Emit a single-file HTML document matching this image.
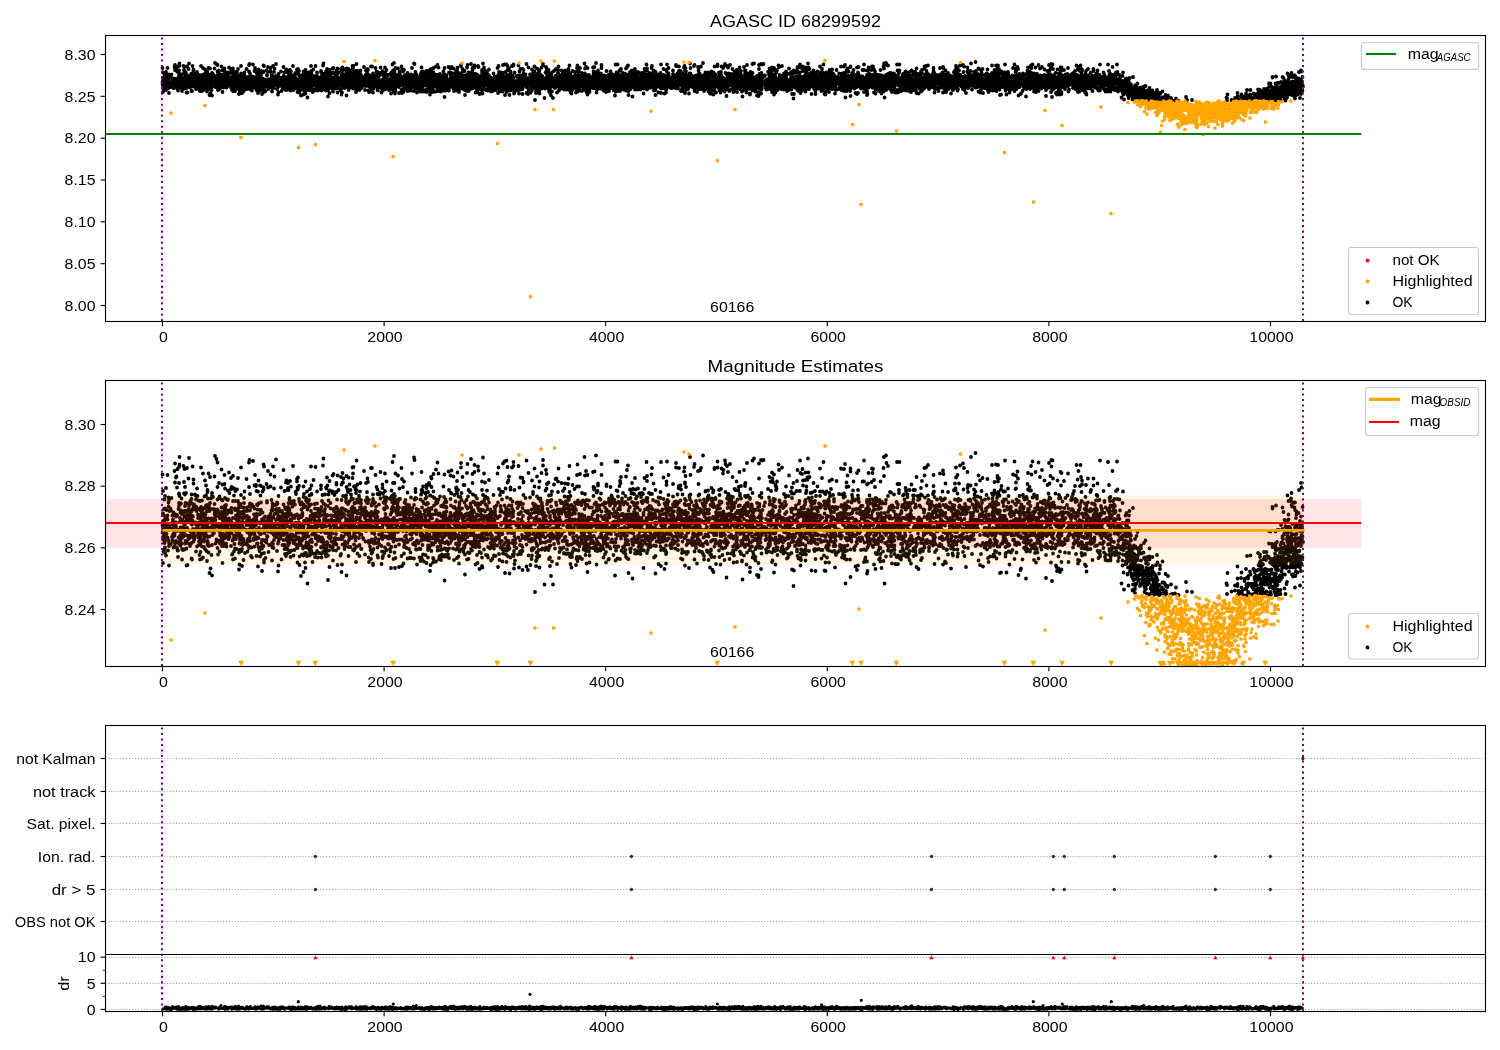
<!DOCTYPE html>
<html><head><meta charset="utf-8"><title>AGASC ID 68299592</title><style>html,body{margin:0;padding:0;background:#fff;overflow:hidden;width:1500px;height:1050px;}svg{display:block;will-change:transform;}</style></head><body><svg width="1500" height="1050" viewBox="0 0 1500 1050"><rect width="1500" height="1050" fill="#fff"/><defs><clipPath id="c1"><rect x="105.5" y="35.5" width="1380.0" height="286.0"/></clipPath><clipPath id="c2"><rect x="105.5" y="380.5" width="1380.0" height="286.0"/></clipPath><clipPath id="c3"><rect x="105.5" y="725.5" width="1380.0" height="286.0"/></clipPath></defs><g font-family='"Liberation Sans", sans-serif' fill="#000"><text x="795.50" y="27.20" font-size="16.67" text-anchor="middle" textLength="170.85" lengthAdjust="spacingAndGlyphs">AGASC ID 68299592</text><g clip-path="url(#c1)"><path transform="scale(0.5)" stroke="#000" stroke-width="7.6" fill="none" stroke-linecap="round" d="M325 136h0m0 32h0m0-4h0m1-3h0m0 23h0m0-27h0m0 14h0m0-26h0m0 25h0m0-4h0m0-3h0m1 15h0m1-20h0m0 7h0m0-10h0m0 13h0m0 10h0m0-8h0m0-1h0m1-7h0m0-12h0m0 23h0m0-18h0m0 6h0m0 6h0m0 9h0m0-12h0m1 8h0m0-17h0m0 13h0m0-20h0m0 22h0m0 6h0m0-8h0m0 11h0m1-13h0m0-6h0m0 3h0m1 3h0m0-2h0m0-20h0m0 36h0m0-11h0m0-9h0m1 6h0m0-11h0m0 9h0m0 4h0m0-4h0m1-4h0m1-24h0m0 25h0m0-3h0m0 12h0m1-6h0m0 0h0m0 0h0m0 1h0m0-1h0m0 13h0m0-13h0m1 8h0m0-23h0m0 17h0m0-13h0m0-2h0m1 22h0m0-9h0m0 1h0m0 21h0m0-36h0m0 25h0m1-10h0m0-9h0m2-1h0m0 10h0m0 9h0m1 0h0m0-18h0m1-7h0m1 14h0m0 7h0m1 2h0m0-14h0m0 4h0m1 7h0m0-9h0m0 6h0m0-5h0m1 15h0m0-19h0m0 13h0m1-5h0m0 1h0m0 2h0m0-3h0m1 4h0m0-35h0m0 34h0m0 7h0m1-45h0m0 44h0m0-34h0m0 35h0m0-12h0m0 10h0m0 1h0m1-16h0m0 4h0m1 2h0m0-26h0m0 24h0m0 10h0m0-8h0m0-5h0m1-22h0m1 22h0m0 8h0m0-24h0m0 33h0m0-18h0m0 15h0m1-7h0m0-33h0m0 44h0m1 0h0m0 4h0m1-11h0m0-15h0m1-8h0m0 6h0m0 21h0m0-42h0m0 9h0m0 5h0m0 6h0m0 18h0m1-39h0m0-4h0m0 21h0m1 5h0m0 16h0m0-9h0m0 2h0m0 10h0m1 3h0m0-3h0m0-6h0m0-9h0m0 8h0m0 2h0m0 2h0m1-13h0m0-4h0m0 13h0m1 4h0m0-20h0m0 17h0m0-10h0m0 2h0m0 16h0m1-6h0m0 3h0m0-10h0m0 15h0m0 6h0m1-16h0m0-5h0m0 0h0m0 7h0m0-6h0m0 4h0m1 11h0m0 0h0m1-15h0m0 8h0m0-38h0m0 33h0m0-8h0m1 5h0m0-22h0m0 27h0m0-21h0m0 21h0m1-2h0m0-32h0m0 23h0m0 6h0m0-3h0m0 18h0m1-34h0m0 31h0m0-21h0m0 16h0m0-22h0m0 16h0m1 9h0m0-16h0m0-4h0m1-6h0m0 20h0m0-10h0m1 6h0m0 14h0m0 9h0m0-13h0m0-12h0m0 6h0m1-33h0m0 25h0m0 7h0m0 4h0m1-13h0m0 17h0m0 12h0m1-33h0m1 19h0m0-16h0m0 3h0m0-20h0m1 15h0m0 2h0m0 7h0m0-35h0m1 42h0m0-9h0m0 7h0m0 4h0m1-10h0m0-4h0m0 18h0m0-15h0m0-2h0m1 12h0m0-20h0m0 24h0m0-14h0m0 7h0m1-15h0m0 10h0m1 20h0m0-30h0m0 4h0m0 17h0m0-4h0m0-22h0m0 2h0m1 3h0m0 10h0m0 20h0m0-20h0m0 1h0m1 4h0m0-6h0m0 8h0m0-10h0m0-27h0m0 23h0m1 4h0m0 7h0m0 4h0m0-1h0m1-15h0m0 19h0m0-34h0m0 2h0m0 30h0m1-3h0m0-16h0m1 3h0m0 16h0m1-5h0m0 3h0m0-22h0m1 15h0m0-14h0m1 6h0m0-4h0m0 28h0m0-15h0m1-7h0m0 9h0m0-10h0m1 20h0m0-31h0m0 10h0m1 12h0m0-18h0m1 10h0m0 2h0m0 5h0m0 1h0m0 2h0m1 0h0m0-9h0m0 11h0m0-4h0m0-16h0m0 19h0m1-14h0m0 17h0m0 1h0m0-10h0m0-1h0m0 5h0m0 7h0m1-1h0m0 7h0m1-14h0m0-11h0m0 27h0m0-31h0m0 17h0m1 2h0m0 3h0m0 5h0m0-16h0m0 9h0m0 3h0m1-8h0m0-12h0m0 18h0m0-3h0m0-10h0m0-27h0m0 28h0m1 6h0m0 2h0m0 14h0m0-25h0m1-7h0m0 6h0m0 7h0m0 2h0m0 10h0m1-17h0m0-3h0m1 9h0m0-28h0m0 27h0m0 3h0m0 2h0m0 13h0m0-22h0m1 2h0m0-4h0m0 1h0m1 18h0m0-4h0m0 0h0m0-8h0m1 1h0m0-3h0m0-8h0m0 16h0m0-22h0m1 29h0m0-11h0m0-6h0m0-2h0m0-19h0m1 19h0m0 2h0m1-7h0m0 14h0m0 2h0m0-27h0m0 6h0m1 21h0m0-6h0m0-7h0m0 22h0m0-14h0m0-10h0m1 12h0m0-13h0m0 8h0m0 3h0m0 19h0m1-39h0m0 28h0m0-26h0m0 17h0m0 11h0m0-11h0m0 7h0m1-21h0m0 6h0m0 18h0m0 2h0m1-8h0m0-31h0m0 43h0m0-17h0m0-2h0m1-7h0m0 22h0m0-21h0m1 2h0m0 14h0m0-5h0m0 25h0m1-38h0m0 15h0m0-30h0m1 18h0m0 32h0m1-38h0m0 18h0m0-2h0m1 15h0m0-19h0m0-1h0m1-12h0m0 17h0m0 9h0m0 17h0m0-27h0m0-18h0m1 23h0m0-4h0m0 1h0m0 0h0m1-18h0m0 15h0m0-8h0m0 14h0m1-8h0m1 7h0m1-16h0m0 5h0m0 3h0m0-5h0m0 1h0m0-19h0m1 20h0m0-31h0m0 38h0m0-6h0m1 7h0m0-1h0m0-3h0m0 13h0m1-17h0m0 0h0m0 7h0m1-5h0m0 13h0m0 1h0m0-45h0m0 36h0m0 0h0m0 7h0m1-16h0m0 0h0m1-25h0m0 46h0m0-33h0m0 7h0m1 30h0m0-24h0m1 16h0m0-8h0m0 3h0m1-26h0m0 31h0m0-23h0m1 16h0m0 13h0m0-30h0m0 11h0m0 1h0m0-3h0m1 11h0m0-5h0m0-5h0m0 16h0m0-5h0m1 3h0m1-4h0m0-4h0m0 6h0m0-11h0m0 5h0m1-6h0m0-1h0m0-7h0m0 21h0m0-17h0m0 11h0m0 8h0m0 1h0m0-41h0m1 21h0m0 21h0m1-16h0m0 25h0m0-23h0m0-11h0m0-9h0m0 32h0m1 0h0m1-5h0m0-14h0m0 8h0m0-5h0m0 4h0m0 14h0m0-10h0m1 6h0m0-1h0m0-7h0m1-22h0m0-4h0m0 18h0m1 16h0m0-18h0m0 12h0m0-16h0m0 5h0m0-10h0m0 15h0m1-3h0m0-3h0m0 11h0m0-4h0m0-4h0m0 8h0m1 10h0m0-4h0m0 4h0m0-21h0m0 13h0m0-1h0m0 4h0m1-2h0m0 8h0m1-11h0m0-14h0m0 8h0m0 10h0m0-7h0m0-5h0m0 5h0m1 3h0m0-14h0m0 20h0m1-4h0m0-16h0m0-5h0m1 26h0m1-36h0m0 28h0m0-7h0m0 4h0m1 7h0m0 2h0m0-1h0m0-12h0m0-10h0m0 24h0m2-4h0m0-5h0m1 14h0m0-37h0m0 17h0m0-11h0m1-1h0m0 25h0m0-3h0m0-8h0m0 5h0m0-8h0m1-11h0m0 37h0m1-8h0m0 7h0m0-15h0m1-14h0m0 10h0m0-23h0m0 45h0m1-17h0m0 6h0m0 0h0m0-27h0m0 19h0m1 6h0m0-25h0m0 34h0m0-31h0m1 27h0m1 8h0m0-12h0m0-7h0m0 14h0m0-11h0m0-22h0m0 11h0m0 21h0m0-21h0m1-5h0m0-5h0m1 18h0m0 8h0m0-4h0m0-12h0m0 5h0m0-2h0m1 8h0m0-2h0m0 13h0m0-11h0m0 0h0m1-4h0m0 5h0m0 2h0m0-25h0m0 22h0m1-8h0m0 4h0m0 4h0m1-15h0m0 14h0m0-27h0m0 19h0m0-6h0m0 17h0m0-11h0m0 9h0m1 3h0m0-15h0m0 9h0m1-11h0m0 4h0m0 6h0m0 17h0m0-9h0m0-18h0m0 2h0m0 34h0m0-27h0m1 16h0m0-9h0m0 6h0m0-17h0m0 6h0m0-3h0m0-6h0m0 3h0m0 28h0m0-17h0m1 3h0m0-6h0m0-6h0m0 13h0m0-13h0m1 5h0m0-12h0m1-5h0m0 27h0m0-42h0m0 25h0m0 7h0m1 14h0m0-13h0m0 5h0m0-16h0m1 3h0m0 7h0m0 13h0m0 9h0m0-12h0m1-12h0m0 12h0m1-14h0m0 5h0m0-5h0m1 12h0m0 1h0m0-16h0m0 15h0m0 0h0m0-1h0m0-17h0m0 29h0m1-27h0m0 2h0m0-6h0m0-3h0m1-4h0m0 14h0m1 15h0m0 5h0m1-13h0m1-4h0m1 2h0m0-8h0m0 11h0m0-29h0m0 29h0m0-1h0m1-5h0m0 12h0m0-17h0m0 3h0m0-5h0m1 18h0m0-4h0m0 10h0m1-3h0m0-19h0m0 15h0m0-7h0m1-2h0m0 5h0m0-1h0m1 10h0m0-33h0m0 17h0m0-30h0m0 30h0m0 1h0m1-8h0m0 18h0m0-4h0m0-1h0m0-38h0m1 41h0m0 3h0m0-25h0m0 5h0m0 4h0m0 19h0m0-6h0m1-4h0m1 1h0m0 14h0m0-17h0m0-9h0m0 7h0m0 7h0m0-15h0m1 23h0m0-9h0m1-2h0m0-12h0m0 28h0m0-18h0m0-10h0m1 11h0m0-2h0m0 4h0m0-5h0m0 7h0m1-7h0m0-32h0m0 39h0m1 3h0m0 1h0m0-18h0m1 6h0m0-2h0m0 6h0m1 11h0m0-15h0m0-18h0m0 13h0m0 14h0m0-2h0m0-9h0m1 0h0m0 2h0m0-24h0m0 33h0m1-3h0m1-3h0m0 8h0m0-9h0m0-20h0m0 22h0m0-22h0m1 17h0m0 2h0m0-4h0m0 23h0m0-14h0m0-21h0m1 29h0m0-22h0m0 10h0m1-7h0m0 19h0m0-8h0m0 4h0m0-17h0m1 5h0m0-13h0m0 41h0m1-47h0m0 36h0m0-23h0m0 19h0m1-6h0m0 2h0m1 11h0m0-16h0m0 15h0m1-14h0m0 18h0m0-25h0m0 2h0m0-16h0m0 26h0m1-20h0m1 20h0m0-26h0m0 9h0m0 4h0m1 24h0m0-17h0m0 0h0m0 11h0m0 2h0m1-12h0m0-2h0m0 27h0m0-22h0m0 6h0m0 4h0m1-19h0m0 5h0m0-17h0m1 27h0m0 3h0m1-32h0m0-12h0m0 13h0m0 31h0m1-43h0m0 28h0m0 1h0m0 18h0m0-14h0m0 19h0m0-23h0m0 3h0m0 19h0m1-15h0m1-5h0m0-4h0m1 3h0m0 20h0m0-9h0m1-11h0m1 4h0m0 0h0m0-25h0m0 30h0m0 2h0m1-11h0m0-12h0m0 14h0m0 5h0m0-18h0m0 14h0m1 5h0m1-36h0m0 33h0m0-24h0m0 17h0m1-1h0m0 19h0m0-19h0m0 8h0m1-3h0m0 10h0m1-12h0m0-3h0m1 4h0m1-27h0m0 29h0m0-22h0m0 19h0m0-4h0m1 10h0m1-6h0m0-1h0m0-11h0m0 6h0m1 10h0m0 7h0m0-14h0m0 16h0m0 0h0m0 8h0m1-28h0m0 1h0m0 20h0m0-11h0m0-12h0m0-1h0m1 1h0m0 21h0m0-11h0m0-31h0m1 27h0m0 7h0m0 3h0m0 7h0m1-9h0m0-23h0m0 28h0m1-14h0m0 7h0m0-28h0m0 32h0m1-16h0m0 0h0m0 10h0m0 0h0m1 4h0m1-6h0m0 2h0m0-8h0m0-27h0m0 29h0m1 10h0m0-15h0m0 3h0m0 12h0m0-2h0m0 5h0m1-19h0m0 17h0m0-2h0m0 2h0m0 10h0m1-12h0m0-14h0m0 14h0m0-6h0m0-2h0m0-2h0m1 18h0m0 15h0m0-22h0m0 2h0m0-9h0m0 0h0m0 9h0m1-21h0m0 11h0m0 13h0m0 13h0m1-21h0m0 1h0m0 6h0m0-16h0m1 13h0m1-7h0m0 6h0m0-3h0m1 3h0m0-8h0m0-3h0m0 4h0m0 11h0m0-1h0m1-10h0m0-17h0m1 39h0m0-13h0m0-10h0m1-3h0m0 10h0m1 9h0m0-11h0m0-3h0m0 7h0m0-9h0m1-2h0m0 1h0m0 7h0m0-4h0m0-3h0m1 16h0m0-40h0m0 18h0m0 12h0m0 8h0m0-3h0m1-2h0m0-5h0m1 3h0m0 12h0m0-14h0m0-5h0m0-13h0m0 23h0m1 11h0m0-4h0m0-21h0m0 11h0m1 11h0m0-21h0m0 7h0m1-22h0m0 37h0m0 3h0m0-20h0m1 2h0m0-23h0m0 21h0m0-3h0m0 22h0m0-7h0m1-10h0m0 7h0m0-11h0m0 12h0m0-7h0m0-6h0m0 5h0m1 17h0m0-8h0m0 6h0m0-32h0m0 12h0m0 10h0m1-23h0m0 11h0m0 7h0m0 9h0m0 2h0m0-32h0m0 30h0m0-17h0m1 3h0m0 0h0m0 7h0m0 10h0m0-19h0m0-3h0m0-8h0m0 15h0m1 10h0m0 1h0m0 8h0m1-22h0m0-6h0m0 23h0m0-18h0m0 1h0m0-7h0m0 7h0m1-16h0m0 38h0m0-7h0m1-10h0m0-9h0m0 9h0m0 5h0m0-5h0m0 8h0m0 12h0m0-10h0m0-6h0m1-8h0m0 1h0m0 7h0m0-22h0m1 17h0m0-8h0m0 25h0m0-6h0m0-10h0m1 9h0m0-6h0m0 5h0m0-18h0m1 18h0m0-15h0m0 18h0m1-12h0m0-28h0m0 31h0m1 17h0m0-29h0m0 8h0m0 14h0m0-3h0m1-20h0m0 23h0m1-13h0m0 17h0m0-14h0m0-5h0m1 12h0m0-5h0m0-3h0m0-10h0m1-6h0m0 18h0m0 0h0m0 5h0m0 1h0m1 0h0m0 1h0m0-13h0m0-11h0m0 27h0m1 0h0m0-6h0m0-5h0m1-23h0m0 36h0m0-37h0m0 19h0m1 18h0m0-33h0m0 41h0m0-40h0m1 0h0m0-6h0m0 27h0m1 5h0m0-10h0m0 15h0m1-12h0m0-21h0m0 20h0m0-12h0m1 17h0m0 7h0m0-11h0m0 10h0m0-14h0m0 5h0m0 1h0m0-14h0m0 30h0m0-9h0m0-4h0m0 17h0m0-14h0m1-11h0m1 13h0m0-15h0m0 7h0m0-13h0m0 21h0m1-10h0m0 28h0m0-17h0m1-8h0m0 5h0m0 1h0m0-13h0m0-8h0m0 4h0m0 12h0m1-3h0m0 3h0m0 12h0m0-15h0m0 8h0m1-14h0m0-1h0m0 10h0m1 9h0m0-10h0m0 2h0m0-4h0m0 4h0m1-25h0m0 22h0m0 10h0m0-21h0m0 11h0m0 24h0m0-41h0m0 32h0m0-16h0m0-12h0m1 18h0m0-2h0m0-21h0m0 14h0m0 1h0m1 7h0m0-2h0m1 17h0m0-13h0m0-3h0m0-7h0m0 2h0m0 16h0m1-39h0m0 47h0m0-18h0m0-16h0m1-4h0m0 25h0m0-24h0m0 19h0m0 10h0m1-3h0m0-6h0m0-10h0m0 13h0m0 1h0m1 6h0m0-12h0m0-23h0m0 6h0m1 3h0m0 41h0m0-40h0m1 11h0m0-15h0m0 16h0m1 7h0m0-13h0m0 2h0m0 7h0m0-5h0m1-15h0m0 15h0m0-4h0m0-7h0m0 21h0m0 2h0m0-1h0m1-29h0m0 33h0m0-27h0m1 22h0m0-31h0m0 36h0m0-1h0m0-7h0m0 6h0m0-17h0m1-2h0m0 0h0m1-7h0m0 4h0m0 10h0m0-5h0m0-29h0m1 32h0m0-17h0m0 28h0m0-28h0m0 17h0m0 7h0m0 7h0m0-19h0m0-17h0m1 27h0m0 4h0m1-4h0m0-3h0m0-7h0m0 25h0m0-19h0m0-7h0m0 2h0m1 19h0m0-13h0m1-1h0m0-26h0m1 20h0m0-2h0m0 11h0m1-7h0m0 7h0m0-16h0m0 10h0m1 2h0m0 5h0m0 12h0m0-26h0m1 16h0m0-39h0m0 32h0m1 5h0m0-4h0m0-6h0m0 15h0m0 5h0m0-22h0m1 5h0m0-3h0m1-7h0m0 26h0m0-33h0m1 10h0m0 12h0m0-4h0m0 8h0m1 10h0m0-9h0m0-11h0m0 5h0m1-3h0m0 7h0m0-14h0m0 0h0m0-1h0m0 9h0m1-5h0m0 0h0m1 4h0m0-2h0m0 18h0m0-23h0m1 14h0m0-12h0m0 1h0m1 0h0m0 13h0m0-8h0m1-8h0m0-14h0m0 25h0m0 8h0m0-8h0m0-23h0m0 32h0m1 5h0m0-27h0m0 25h0m0-23h0m0 17h0m1-8h0m0 5h0m0-20h0m1 21h0m0-24h0m1 17h0m0 2h0m0-3h0m0 15h0m0-47h0m0 40h0m1-13h0m0 16h0m0-22h0m0-25h0m0 46h0m1-13h0m0 4h0m0 12h0m0-15h0m0 17h0m1-22h0m1 12h0m0-13h0m0 7h0m0-15h0m0 14h0m1 1h0m0-2h0m0 20h0m0-3h0m0-9h0m0-15h0m1 5h0m0 21h0m0-36h0m0 21h0m0 17h0m0-4h0m1-33h0m0 32h0m0-2h0m1-36h0m0 20h0m0 15h0m1-6h0m0-25h0m0 16h0m0 10h0m0 6h0m1-6h0m0 12h0m0-12h0m0-15h0m0 9h0m0 31h0m0-31h0m1-12h0m0 20h0m0-23h0m0 14h0m1 7h0m0-23h0m0 32h0m1-37h0m0 46h0m0-22h0m0 6h0m1-25h0m0 26h0m0-3h0m0 7h0m1 0h0m0-23h0m0 18h0m0-15h0m0 6h0m0 4h0m0-1h0m1 3h0m0-9h0m0 10h0m0 2h0m0-9h0m0 6h0m1-6h0m0 12h0m0-5h0m1-10h0m0 0h0m1 19h0m0-9h0m0-22h0m0-9h0m1 38h0m0 8h0m0-6h0m0-16h0m0-16h0m1 10h0m0-19h0m0 38h0m0-10h0m1-8h0m0 3h0m0-4h0m0 4h0m0-3h0m0 7h0m1 3h0m0 5h0m0-10h0m0-14h0m0 18h0m0 7h0m0-8h0m1 7h0m1-6h0m0 8h0m0-16h0m0 7h0m1 2h0m0-12h0m0 10h0m0-6h0m0 1h0m0 18h0m0-9h0m0-6h0m0 1h0m1 11h0m0-20h0m0-12h0m0-1h0m0 20h0m0-15h0m1 11h0m0 3h0m0 11h0m0-21h0m1 15h0m0-28h0m0 28h0m0 20h0m0-25h0m0-2h0m0-3h0m0 4h0m2-2h0m0 19h0m0-31h0m0 21h0m0-8h0m0 8h0m1 5h0m0-13h0m0-2h0m1 5h0m0-2h0m0 6h0m0-4h0m2-4h0m0 9h0m0 14h0m1-42h0m0 18h0m0 1h0m0 6h0m0 1h0m0-7h0m0 14h0m0-5h0m0 13h0m1 10h0m0-47h0m0 8h0m0 19h0m0-10h0m0-4h0m1 2h0m0 28h0m0-14h0m0-7h0m1 10h0m0-7h0m0-27h0m0 26h0m0-31h0m1 13h0m0-8h0m0 15h0m1 15h0m0-11h0m0-21h0m0 28h0m1-3h0m0-5h0m0 1h0m0 7h0m1 9h0m0 1h0m1-1h0m0-3h0m0-5h0m1 7h0m0-10h0m0-9h0m1-7h0m0 14h0m0-2h0m0 8h0m0-12h0m0 5h0m0 6h0m0-16h0m0-2h0m1 2h0m0-14h0m0 6h0m0 48h0m1-25h0m1 1h0m0 0h0m0-4h0m0-1h0m0 11h0m0-29h0m1 17h0m0-15h0m0 19h0m0 0h0m0-7h0m0 5h0m0 2h0m0 1h0m0-14h0m1 4h0m0 5h0m0 15h0m0-15h0m0 2h0m0-25h0m0 24h0m0 18h0m1-15h0m0 4h0m0-5h0m0-13h0m0 21h0m0-7h0m0-3h0m0 3h0m1 2h0m0-5h0m0 0h0m0 6h0m0 1h0m0-11h0m0-17h0m0 29h0m0-4h0m0-15h0m2 24h0m0-30h0m0 18h0m0-3h0m1-10h0m0-3h0m1 24h0m0-13h0m0 4h0m0-7h0m0 10h0m0 5h0m0-6h0m0-15h0m1 7h0m0 1h0m0 7h0m1-5h0m0-1h0m0-20h0m0 18h0m0 9h0m0-33h0m0 22h0m0 16h0m1-34h0m0 41h0m0-27h0m0-14h0m1 21h0m0-25h0m0 29h0m1 8h0m0-2h0m0-24h0m0 20h0m0 11h0m0-7h0m0 10h0m0-16h0m1-6h0m0 9h0m0-12h0m0 0h0m0 15h0m0-11h0m0 8h0m0 0h0m1 4h0m0-3h0m0 11h0m0-15h0m0-5h0m0-4h0m0 18h0m1-6h0m0-20h0m0 28h0m0-11h0m1 23h0m0-42h0m0 28h0m0-24h0m1 13h0m0-31h0m0 17h0m1 11h0m0 19h0m0-25h0m1 7h0m0 22h0m0-37h0m0 23h0m1-14h0m0 16h0m1-2h0m1-14h0m0 16h0m0-19h0m0 13h0m0 10h0m0-8h0m0 4h0m1-18h0m0 25h0m0 6h0m1-35h0m0 20h0m0-11h0m0 1h0m0 14h0m0-10h0m0 5h0m1-23h0m0 16h0m1 5h0m0-10h0m0 2h0m0 22h0m0-26h0m1 26h0m0-7h0m0-5h0m0 0h0m1-7h0m0 9h0m0-3h0m0 0h0m1-5h0m0-2h0m1 7h0m0 7h0m0-13h0m1-2h0m0 16h0m0-5h0m0-2h0m0-6h0m1 8h0m0-32h0m2 31h0m0 15h0m0-17h0m0-1h0m0-8h0m0 6h0m0-5h0m0 0h0m1 17h0m0-22h0m1-9h0m0 25h0m0-8h0m0 9h0m0-11h0m1 10h0m0-10h0m0 2h0m0 4h0m1-13h0m0 2h0m0 10h0m0-15h0m0 17h0m1 3h0m0-2h0m0-26h0m0 25h0m0-5h0m0 0h0m1-18h0m0 18h0m0 3h0m0-9h0m1 13h0m0-1h0m0 17h0m0-24h0m0 0h0m0 15h0m1 12h0m0-11h0m0-8h0m0-15h0m2 25h0m0-14h0m1-2h0m0 1h0m0 4h0m0-5h0m0 18h0m1 5h0m0-16h0m0 7h0m0-40h0m1 20h0m0 5h0m0 7h0m0-9h0m0 15h0m0 8h0m0-14h0m1 3h0m0-35h0m0 19h0m0 1h0m1 8h0m0 17h0m1-27h0m0 1h0m0 33h0m0 0h0m0-35h0m0-3h0m1 12h0m0-7h0m0 25h0m0-13h0m1-7h0m0 10h0m0 7h0m0-7h0m1 6h0m0-11h0m0 6h0m1 3h0m0-9h0m0-11h0m1 5h0m0 4h0m0-24h0m0 27h0m0 2h0m0 6h0m1-10h0m0-7h0m0 9h0m0-1h0m1-4h0m0 15h0m0-30h0m1 20h0m1 13h0m0 4h0m0-15h0m0 1h0m0-7h0m0-12h0m0-3h0m0 18h0m1-5h0m0 24h0m1-10h0m0 2h0m1-21h0m0 17h0m1-4h0m0 9h0m0-13h0m0-14h0m1 20h0m0-21h0m1-11h0m0 14h0m1 16h0m1 5h0m0-8h0m0-2h0m0 15h0m0 10h0m1-16h0m0 9h0m0-17h0m1 20h0m0-17h0m0-21h0m0-1h0m0 21h0m0 0h0m0 8h0m0-4h0m1 13h0m0-34h0m0 20h0m1 12h0m0-27h0m1 4h0m0 6h0m0 8h0m0-21h0m1 3h0m0 4h0m0 5h0m0-10h0m0 29h0m1-34h0m0 7h0m0 24h0m0-41h0m0 35h0m0-8h0m1 5h0m0-4h0m0-5h0m0 1h0m1-9h0m0-1h0m1 14h0m0-9h0m0 23h0m0-37h0m0 9h0m0 21h0m1-9h0m0-7h0m0 10h0m0 3h0m0-3h0m1 7h0m0-11h0m0 3h0m1 11h0m0-7h0m0-1h0m1-1h0m0 5h0m0-4h0m1 4h0m0 4h0m0-3h0m0 9h0m0-20h0m0 3h0m0 11h0m1-13h0m0 3h0m0-15h0m1 27h0m0-15h0m0 8h0m1-11h0m0 4h0m0 0h0m0 16h0m0-29h0m1 19h0m0 19h0m0-18h0m1 1h0m0-4h0m0 10h0m0-28h0m0 22h0m0-15h0m0 14h0m0-7h0m0-5h0m0-12h0m1 18h0m0 3h0m0-15h0m1 9h0m0-6h0m0-6h0m0 23h0m0-24h0m0 18h0m0-4h0m0-32h0m0 39h0m0 2h0m1-9h0m0 1h0m0-21h0m0 19h0m1-10h0m0 11h0m0-7h0m0 19h0m0 9h0m0-30h0m1 8h0m0-13h0m0 23h0m0-44h0m0 30h0m0-6h0m1 28h0m0-27h0m0 18h0m0-1h0m0 0h0m0-5h0m0-22h0m1 14h0m0 8h0m0 0h0m0-12h0m0 0h0m0 20h0m0-23h0m0 39h0m1-12h0m0-20h0m0 26h0m0-45h0m0 19h0m1 11h0m0 1h0m0-16h0m0-1h0m0 15h0m1-14h0m0 6h0m1 15h0m0-11h0m0-3h0m0 5h0m1-9h0m0 12h0m0-14h0m0 5h0m0 7h0m0-1h0m0-6h0m0 6h0m0-10h0m0 1h0m1-3h0m0 6h0m0-2h0m0 11h0m0 1h0m0-30h0m2 17h0m0 32h0m0-37h0m0 25h0m1-30h0m0 27h0m1-22h0m0 12h0m0-3h0m1 7h0m0-8h0m1 0h0m0 9h0m0 0h0m1 14h0m0-47h0m0 31h0m1 22h0m0-48h0m0 25h0m0 8h0m1-13h0m0 3h0m1-7h0m0-11h0m0 19h0m0 0h0m0-6h0m0 10h0m0 1h0m0-2h0m0 1h0m1-8h0m0 8h0m0 6h0m0-12h0m0 24h0m0-28h0m0-2h0m1 25h0m0-16h0m0 13h0m0-16h0m0-20h0m1 16h0m0 5h0m0-6h0m0 19h0m0-23h0m1 19h0m1-15h0m0 4h0m0-9h0m0 12h0m0-5h0m0 3h0m0 6h0m0 0h0m1-14h0m0 8h0m0 5h0m0 4h0m0-15h0m0 19h0m0-7h0m1 10h0m0-5h0m0-4h0m1-5h0m0 4h0m0-9h0m1 25h0m0-36h0m0 9h0m0 6h0m0 12h0m1-17h0m0 16h0m0-6h0m0-1h0m0-5h0m0 0h0m0-6h0m2 23h0m0-24h0m0 5h0m0 2h0m0 1h0m1-1h0m0 21h0m0-16h0m0-9h0m0-2h0m1 4h0m0 8h0m0 3h0m1 2h0m0-5h0m0-2h0m0 15h0m1-23h0m0 25h0m0-32h0m0 15h0m1-1h0m0 6h0m0-14h0m0 7h0m0 1h0m0-3h0m0 4h0m1-28h0m0 21h0m0 14h0m1-4h0m0-5h0m0-8h0m1 20h0m0-16h0m1 1h0m0 6h0m0-7h0m0 5h0m0 5h0m1 14h0m0-29h0m0 11h0m0-6h0m0 15h0m0-46h0m1 23h0m0-22h0m0 33h0m0-3h0m0 9h0m0-7h0m0 4h0m0 9h0m2-29h0m0 5h0m0 26h0m0-29h0m1 21h0m0-4h0m0-2h0m0-2h0m0 14h0m0 4h0m1-14h0m0-7h0m0 10h0m0-6h0m0 3h0m0 5h0m0-19h0m0 11h0m0-5h0m1 22h0m0-5h0m0-9h0m0 22h0m0-21h0m2-3h0m0 4h0m0-1h0m0 1h0m1-10h0m0 4h0m0-1h0m0 15h0m1-11h0m0 5h0m1 9h0m0-14h0m0 19h0m1-5h0m0-19h0m0 3h0m1 23h0m0-20h0m0 3h0m0 3h0m0 8h0m0-8h0m0-9h0m0-10h0m0 9h0m1 5h0m0-4h0m0-13h0m0 21h0m0-9h0m0-1h0m0 14h0m0-6h0m0-3h0m0 5h0m0-1h0m0-7h0m1 0h0m0 3h0m0-4h0m0 4h0m0 9h0m0-28h0m0 19h0m0-2h0m0-1h0m0 7h0m0-32h0m0 46h0m0-20h0m1-7h0m0 9h0m0-17h0m0 25h0m1-26h0m0 24h0m0 14h0m0-9h0m0-12h0m1-19h0m0 37h0m0-29h0m1 12h0m1-11h0m0 31h0m0-22h0m0 9h0m1-7h0m0-5h0m0 5h0m0-7h0m0 5h0m0 10h0m1-13h0m1-9h0m0-3h0m0 23h0m0-5h0m0-2h0m0-3h0m0 21h0m0-21h0m0 5h0m1 0h0m0-3h0m0-9h0m0-6h0m1 2h0m0-6h0m0 28h0m0-14h0m0 0h0m0 12h0m0 16h0m0-17h0m0-6h0m0-18h0m0 9h0m0 3h0m1 1h0m0 0h0m1-4h0m0 20h0m1 4h0m0-1h0m0-23h0m0-6h0m0 31h0m0-15h0m0 2h0m0 17h0m0-15h0m1-5h0m0-7h0m0 4h0m1 14h0m0-3h0m0 1h0m0 1h0m0-13h0m0-17h0m1 28h0m0 7h0m0-21h0m0-13h0m0 14h0m1 8h0m0 25h0m0-27h0m0-15h0m0 11h0m1 5h0m0-5h0m0 0h0m0 13h0m0 14h0m0-25h0m0 5h0m0-18h0m1 19h0m0-28h0m0 27h0m0 0h0m0 9h0m1-31h0m0-5h0m0 40h0m0-23h0m0 15h0m0-16h0m0 11h0m1 8h0m0-13h0m0 7h0m0 4h0m1-7h0m0-1h0m1 3h0m0 18h0m0-2h0m0-24h0m0-10h0m1-12h0m0 38h0m0-29h0m0 37h0m1-13h0m0-16h0m0 12h0m0 5h0m0-2h0m1-1h0m0-18h0m0 16h0m0-3h0m0 9h0m0-8h0m0 3h0m2 7h0m0-15h0m0 11h0m0-13h0m1 16h0m0-39h0m0 23h0m0 6h0m0 21h0m0-32h0m0 15h0m1-14h0m0 17h0m0-7h0m0 9h0m0-21h0m0 13h0m1-2h0m0 3h0m0 8h0m0-7h0m0-15h0m1 21h0m0-3h0m0-38h0m0 36h0m0-15h0m0 26h0m0-14h0m0 12h0m0-6h0m1 0h0m0-4h0m1 7h0m0-15h0m0 5h0m0-4h0m0 0h0m0-23h0m0 15h0m1 32h0m0-17h0m1 0h0m0 16h0m0-15h0m0 4h0m1-8h0m0 11h0m0-7h0m0 2h0m0-6h0m0-5h0m0-9h0m1 32h0m0-15h0m0 10h0m0 2h0m1 6h0m0-17h0m0 1h0m0-14h0m0 13h0m0-3h0m0 1h0m1-5h0m0 6h0m0 1h0m1 6h0m0 7h0m0 2h0m0-17h0m0 13h0m0-15h0m1 2h0m0 0h0m0 7h0m0-4h0m1-14h0m0 0h0m0 8h0m0 4h0m0-1h0m0 5h0m0 4h0m1-9h0m0 2h0m0-23h0m0 20h0m0-4h0m0 8h0m0-9h0m1 12h0m0-6h0m0-7h0m0-9h0m1 33h0m0-5h0m0-22h0m0 40h0m0-58h0m0 15h0m0 10h0m0-3h0m0 11h0m1 4h0m0-4h0m0-3h0m1-7h0m0-9h0m0 18h0m0-10h0m0 22h0m0-13h0m1 14h0m0-27h0m0 13h0m0 10h0m0-15h0m1-6h0m0 21h0m0-14h0m0 5h0m0 9h0m0-23h0m0-3h0m1 21h0m0-6h0m0-5h0m1 1h0m0-1h0m0 16h0m0-10h0m0 13h0m0-11h0m0-6h0m1-3h0m0 2h0m0 3h0m0 15h0m0-17h0m0 1h0m1 2h0m0-32h0m0 29h0m0 11h0m0-9h0m0-1h0m1 17h0m0-12h0m0-24h0m0 31h0m0-11h0m1-1h0m0-2h0m0 6h0m0 2h0m0-8h0m0-2h0m1-1h0m0 14h0m0-11h0m1-5h0m0 2h0m0 7h0m0-17h0m0-12h0m0 22h0m0 10h0m1-16h0m0-7h0m0 15h0m0 8h0m1-23h0m0 16h0m0 5h0m0-2h0m0 6h0m0 1h0m0-38h0m1 32h0m0 2h0m0-7h0m1 8h0m0-3h0m1-3h0m0 13h0m1-17h0m0-22h0m0 32h0m0-15h0m1 4h0m0 24h0m1-15h0m0 4h0m0-24h0m0 7h0m1 6h0m0 4h0m0-7h0m0 2h0m0 9h0m0 2h0m1-9h0m0-2h0m0-8h0m1 14h0m0-4h0m0-18h0m0 20h0m0-8h0m0 22h0m0-3h0m0 0h0m1-11h0m0 7h0m0-27h0m0 2h0m0 13h0m0 12h0m0-13h0m1 12h0m0-8h0m0-15h0m0 35h0m0-41h0m0 24h0m0 0h0m1-1h0m0 13h0m0-41h0m0 27h0m1-17h0m0 30h0m0-12h0m0-7h0m0 6h0m1-2h0m0 11h0m0 10h0m0-12h0m0-4h0m0-8h0m0-9h0m1 24h0m0 3h0m0-21h0m0 16h0m0 14h0m1-6h0m0-4h0m0-2h0m0-16h0m0 3h0m0 8h0m0-15h0m0 19h0m0-20h0m1 16h0m0-9h0m0 1h0m0 5h0m1-16h0m0 22h0m1 0h0m0-38h0m0-2h0m0 27h0m0 8h0m0 12h0m1-5h0m0-22h0m0-4h0m1 8h0m0 12h0m0 1h0m1 0h0m0 10h0m0-39h0m0 22h0m0 9h0m0-10h0m1 3h0m1 1h0m0-3h0m0 10h0m0-5h0m0-3h0m0 16h0m0-36h0m0 35h0m0-14h0m1 8h0m0 5h0m0-1h0m1-33h0m0 20h0m0-3h0m0 10h0m0 7h0m0-1h0m0-24h0m1 39h0m0-19h0m0-6h0m0 15h0m1-22h0m0 16h0m1-7h0m0-14h0m0 5h0m1 11h0m0-1h0m0-14h0m0-4h0m1-15h0m0 47h0m0-18h0m0-7h0m1 16h0m0-18h0m0 9h0m0 6h0m0-12h0m0 2h0m0-30h0m1 18h0m0 30h0m0-20h0m1 0h0m0-13h0m0 37h0m1-25h0m0 3h0m1 4h0m0 9h0m0-10h0m0 16h0m1-25h0m0-8h0m0 22h0m1-11h0m0 17h0m0-15h0m0 9h0m0-16h0m0 17h0m1-5h0m0-7h0m0-3h0m0 2h0m0 21h0m0-49h0m0 35h0m0-1h0m1-4h0m0 6h0m0-4h0m0 0h0m0 4h0m0 0h0m0-10h0m0 14h0m0 0h0m1 9h0m0-4h0m0-4h0m0-3h0m0 0h0m0-10h0m0-1h0m1-19h0m0 5h0m0 22h0m0-5h0m0 5h0m0 12h0m0-14h0m1 2h0m0-16h0m0 4h0m1 8h0m0 8h0m0 7h0m0-7h0m0-11h0m0 13h0m1-18h0m0 24h0m0-18h0m1-6h0m0-16h0m0-4h0m0 33h0m0 9h0m0-10h0m0 8h0m0-9h0m0 8h0m0-5h0m1 9h0m1-13h0m0-13h0m0 18h0m0 19h0m0-22h0m0 9h0m0-20h0m1 18h0m0 2h0m0 4h0m1-17h0m0 6h0m0 4h0m0 1h0m0 4h0m1-16h0m0 15h0m0-24h0m0 25h0m0 6h0m1-28h0m0 11h0m0 21h0m0-22h0m0 11h0m0-10h0m1-10h0m0-21h0m0 38h0m0-8h0m0-8h0m1-20h0m0 18h0m0 21h0m1-12h0m0-5h0m0 14h0m0-1h0m0-11h0m0 16h0m1-10h0m0 2h0m0 3h0m0 7h0m0 12h0m0-19h0m0 9h0m1-12h0m1-14h0m0 20h0m0-17h0m0 9h0m0-8h0m0 4h0m0 11h0m1 8h0m0-15h0m0 1h0m0 0h0m1-6h0m0-1h0m0-7h0m0 17h0m1-28h0m0 11h0m0 19h0m0 16h0m0-42h0m0 20h0m0 17h0m1 6h0m0-16h0m0-5h0m0 3h0m1-13h0m0-9h0m0 20h0m0 3h0m0 2h0m0-45h0m1 41h0m0-6h0m0-2h0m1-1h0m0 5h0m0-13h0m0-16h0m0 31h0m0 11h0m1-6h0m0-22h0m1 7h0m0-15h0m1 25h0m0-18h0m0 1h0m0 16h0m0-13h0m1 28h0m0-16h0m0-5h0m1 12h0m0-2h0m0-10h0m0 9h0m1-15h0m0-8h0m0 14h0m0 2h0m1 3h0m0-9h0m0 8h0m0-3h0m0 4h0m0 16h0m0-31h0m1 17h0m0 15h0m0-21h0m0 4h0m0-3h0m0 8h0m0 2h0m0 4h0m0-16h0m0-9h0m1 14h0m0 2h0m0 0h0m1-27h0m0 12h0m0 11h0m0 3h0m0-1h0m1-6h0m0 6h0m1 12h0m1-20h0m0 13h0m0-4h0m0 8h0m0-5h0m0-13h0m1 12h0m0 16h0m0-26h0m0 9h0m0-5h0m0 8h0m0-6h0m1-1h0m0 13h0m0-4h0m0-12h0m0 1h0m1 11h0m0-2h0m0 6h0m0-12h0m0-5h0m0 4h0m1-4h0m0 7h0m0 1h0m0 16h0m1-7h0m0-18h0m0 7h0m1-17h0m0 26h0m0-13h0m1 20h0m0-6h0m0 2h0m1-2h0m0-10h0m0-10h0m0 11h0m0-4h0m1-6h0m0 9h0m0-8h0m0 1h0m0 9h0m1-1h0m0 7h0m0-1h0m0-8h0m0 17h0m0-14h0m0-7h0m1 4h0m0 4h0m0 3h0m1 0h0m0-17h0m0 11h0m0 1h0m1 10h0m1-39h0m0 24h0m1 26h0m0-35h0m1 8h0m0 9h0m0-36h0m1 12h0m0 22h0m0 5h0m0 8h0m0-20h0m1 24h0m0-16h0m0 3h0m1-23h0m0 26h0m0 0h0m0-14h0m1-6h0m0 3h0m0 20h0m1-21h0m0 9h0m0-19h0m1 11h0m0 6h0m0 13h0m0-19h0m1 10h0m0 6h0m0-4h0m0-18h0m1 33h0m0-17h0m0 11h0m0-9h0m0-2h0m1-20h0m0-16h0m0 49h0m1-17h0m1 16h0m0-2h0m0-2h0m1-45h0m0 24h0m0 8h0m0-4h0m1 9h0m0-6h0m0 30h0m1-19h0m0-27h0m1 36h0m0-4h0m0-11h0m0-11h0m0 4h0m0 2h0m0-4h0m0 17h0m1 11h0m0-22h0m0 1h0m0-2h0m0 1h0m0-5h0m0-28h0m1 34h0m0 14h0m0-28h0m1 18h0m0 5h0m0-15h0m0-25h0m0 8h0m0 35h0m1-7h0m0 13h0m0-8h0m1-33h0m0 32h0m0 3h0m0-17h0m0-3h0m0 22h0m0-13h0m0-2h0m0 12h0m1-1h0m0-36h0m0 16h0m0 14h0m0 0h0m1 23h0m0-27h0m0-5h0m0 18h0m1-15h0m0 2h0m0 0h0m1 3h0m0-22h0m0-1h0m0 6h0m0 8h0m0 24h0m1-18h0m0-1h0m0 4h0m1 2h0m0-15h0m1-21h0m0 23h0m0 4h0m0 3h0m1 0h0m0 11h0m0-22h0m1 7h0m0 1h0m0 4h0m0 16h0m0-7h0m1-41h0m0-2h0m0 51h0m0-24h0m1 17h0m0-5h0m0 19h0m0-9h0m0-11h0m0-5h0m0 17h0m1-17h0m0-17h0m0 25h0m0 5h0m0 10h0m1-2h0m1-10h0m0-2h0m1-8h0m1-11h0m0 24h0m1-10h0m1-12h0m0 9h0m1 3h0m0 0h0m0 0h0m0 14h0m0-20h0m0 4h0m0-13h0m1 7h0m0-27h0m0 22h0m0 17h0m1-5h0m0 22h0m0-30h0m0 8h0m1 1h0m0-8h0m0-15h0m1 23h0m0 8h0m0-22h0m0 26h0m0-6h0m0-9h0m1-12h0m0-13h0m1 41h0m0-17h0m0-5h0m0 5h0m0 16h0m0-22h0m1 19h0m0-12h0m0-2h0m0 17h0m1 0h0m0-9h0m1 19h0m0-17h0m0 7h0m0-40h0m0 38h0m0-22h0m1 5h0m0-7h0m0 10h0m1-22h0m0 24h0m0-17h0m0 19h0m0-2h0m0-24h0m1 24h0m0 1h0m2 1h0m0 0h0m0-2h0m0-8h0m1 14h0m0 1h0m0-22h0m1 19h0m1-1h0m0 7h0m0-11h0m0 23h0m0-58h0m1 41h0m0-3h0m0-1h0m0-8h0m1 7h0m0 6h0m1 18h0m0-31h0m0-1h0m1-21h0m0 27h0m0-2h0m0 0h0m0 20h0m0-9h0m1 1h0m0-10h0m1-4h0m0 9h0m0-2h0m0 4h0m1-20h0m1 24h0m0 12h0m0-27h0m0 14h0m1-13h0m0 5h0m0-1h0m1 19h0m0-11h0m0-5h0m0-11h0m0 22h0m0 0h0m0-20h0m1 23h0m0-14h0m0 11h0m0-38h0m0 33h0m0-1h0m1 5h0m1-30h0m0 6h0m0 17h0m0-22h0m2 15h0m0 14h0m0-23h0m0 10h0m0 4h0m1-34h0m0 10h0m0 17h0m0-3h0m0-3h0m1 13h0m0 4h0m0 0h0m0-8h0m0-8h0m0-3h0m0 48h0m1-34h0m0 6h0m0-2h0m1 13h0m0-14h0m0 17h0m1-24h0m0-3h0m0-3h0m0 27h0m0-5h0m0-5h0m1-25h0m0 22h0m0-16h0m0 12h0m0-4h0m0 19h0m0-44h0m0 38h0m1 4h0m0 2h0m0-20h0m0-8h0m0 22h0m1-21h0m0 2h0m0 11h0m0-6h0m1 0h0m0-4h0m0 0h0m0 8h0m0-16h0m0 8h0m0 20h0m1-11h0m0-23h0m1-3h0m0 20h0m0 3h0m0 7h0m0-2h0m0 12h0m0 7h0m1-19h0m0-12h0m0 15h0m0-1h0m0 0h0m1-20h0m0 23h0m0-24h0m0 24h0m1-4h0m0-5h0m0-3h0m0-8h0m0 4h0m0-1h0m0 8h0m1 3h0m0-3h0m0 13h0m0-12h0m0-30h0m1 38h0m0-21h0m1 17h0m0 7h0m0-19h0m0-1h0m0-3h0m0 2h0m1-24h0m0 33h0m0 0h0m0 5h0m0-11h0m0-30h0m1 32h0m0 7h0m0-5h0m0 8h0m1-5h0m0-4h0m0 5h0m0-9h0m0 8h0m1 1h0m0 30h0m1-19h0m0-7h0m0 3h0m1-7h0m0-21h0m1 22h0m0-33h0m0 25h0m0 17h0m0-3h0m0-11h0m0-1h0m1-17h0m0 23h0m0-4h0m0-27h0m1 5h0m0 11h0m0 14h0m1-1h0m0-14h0m0 4h0m1 7h0m0 7h0m0-7h0m1 15h0m0-20h0m0 15h0m0-32h0m0 37h0m1-30h0m0 35h0m0-6h0m1-1h0m0-13h0m0-12h0m1 31h0m0-30h0m0 17h0m0-5h0m0 9h0m0-13h0m0 27h0m0-28h0m1 8h0m0 9h0m0-9h0m0 0h0m0 4h0m1-16h0m0 37h0m0-44h0m0 14h0m1-11h0m0 18h0m0-2h0m1-10h0m0 27h0m0-17h0m0 4h0m0-25h0m2 24h0m0-7h0m0 9h0m0 25h0m0-31h0m2-8h0m0 0h0m0 13h0m0-14h0m0-14h0m0 32h0m1-16h0m0 1h0m0 3h0m0 3h0m1-3h0m0 0h0m0-6h0m0 20h0m0-10h0m1 4h0m0-8h0m0-23h0m1 21h0m0-9h0m0 9h0m1 9h0m0-5h0m0-26h0m0 29h0m0-14h0m0 8h0m0 3h0m1 21h0m0-14h0m0-9h0m0 0h0m1 2h0m0-3h0m0-5h0m0-1h0m1 18h0m0-8h0m0-20h0m0 26h0m0-31h0m1 28h0m0-2h0m0-10h0m0-23h0m0 40h0m0-4h0m0-11h0m1 23h0m0-18h0m0-2h0m0 8h0m0 2h0m0-7h0m0-1h0m0 4h0m1-7h0m0 0h0m0 9h0m0 9h0m1-2h0m0-21h0m0-5h0m0 6h0m1 5h0m0-5h0m0 6h0m1-11h0m0 15h0m0 3h0m0 8h0m1-26h0m0-10h0m0 16h0m1 11h0m0-6h0m0-6h0m1 20h0m0-24h0m0 20h0m0-17h0m1-10h0m0 11h0m0 7h0m1 13h0m0-22h0m1 18h0m0 7h0m0 0h0m0-17h0m1 8h0m0-17h0m0-9h0m0 4h0m0 19h0m0-11h0m1-15h0m0 13h0m1 16h0m0-17h0m0 4h0m0-6h0m1 7h0m0 3h0m1-2h0m0 20h0m1-5h0m0 3h0m0-5h0m0-8h0m0 10h0m1-9h0m0-17h0m0 14h0m0-10h0m1 3h0m0-14h0m0 22h0m0-1h0m0-12h0m1 29h0m0-5h0m0-18h0m0-1h0m0-17h0m0 10h0m1 2h0m0 6h0m0 8h0m0-11h0m0 12h0m0 1h0m1-11h0m0 12h0m0-36h0m0 29h0m0-2h0m0-12h0m0 33h0m1-10h0m0-12h0m0 24h0m0-14h0m1 18h0m0-37h0m1 26h0m0-9h0m0-2h0m0 3h0m0-1h0m0 16h0m0-20h0m1-8h0m0 34h0m1-20h0m0 12h0m0-24h0m0 6h0m0-3h0m0 3h0m0 20h0m1-3h0m0-36h0m1 12h0m0 20h0m0-4h0m0-8h0m0 3h0m1-9h0m0 20h0m0-14h0m0 3h0m0-11h0m0 14h0m0 3h0m1-17h0m0 18h0m0-16h0m0 9h0m1-21h0m1 10h0m0 9h0m0-12h0m0 22h0m0-13h0m0 1h0m0-4h0m1 15h0m0-9h0m1 14h0m0-14h0m0-7h0m0-4h0m0 33h0m1-15h0m0-8h0m0 20h0m1-39h0m0 20h0m0 18h0m0-45h0m1-5h0m0 52h0m0-9h0m0-2h0m1-7h0m0-15h0m0 2h0m0 18h0m1-4h0m0-6h0m0 5h0m0 13h0m1-20h0m0 15h0m0-11h0m0-19h0m0 38h0m1-15h0m0 9h0m0-16h0m0 3h0m0 12h0m1-22h0m0-16h0m0 25h0m0 20h0m0-18h0m1 0h0m0 3h0m1 4h0m0-11h0m0 1h0m0 4h0m1 1h0m0-6h0m0 0h0m0 7h0m0-5h0m0-10h0m0 21h0m0-1h0m0-3h0m0-15h0m0 12h0m1-19h0m0 12h0m0 13h0m0-8h0m0 19h0m1-9h0m0-13h0m1 9h0m0 0h0m0-18h0m0-1h0m0 14h0m0 9h0m1 4h0m0-11h0m1 10h0m0-10h0m0-5h0m1 7h0m0 2h0m0-15h0m0 13h0m0-41h0m0 32h0m0-8h0m1 24h0m0-11h0m0-27h0m0 38h0m0-28h0m0 18h0m0 10h0m1 5h0m0-19h0m0-8h0m0 12h0m0 7h0m0-1h0m1 7h0m0-44h0m0 36h0m0-9h0m0-8h0m1 23h0m0 8h0m0-34h0m0 16h0m0 8h0m1-9h0m0 9h0m0-2h0m1 17h0m0-18h0m0-18h0m0 7h0m0 10h0m0-4h0m0-5h0m0-25h0m1 39h0m0-5h0m1-4h0m0-6h0m0 11h0m0-8h0m0-3h0m0 7h0m0-4h0m0 3h0m1 12h0m0-28h0m1 11h0m0-7h0m0 30h0m0-10h0m0 6h0m0-14h0m1-1h0m0 11h0m0-7h0m0-2h0m1 2h0m1-9h0m0 4h0m0 2h0m0 5h0m0-6h0m0 7h0m0-9h0m0 1h0m2 8h0m0-2h0m0-16h0m0 10h0m0 8h0m0 1h0m1-15h0m0 9h0m1-32h0m0 38h0m0 3h0m0-15h0m1 15h0m0-20h0m0-13h0m0 14h0m0-9h0m1 22h0m0-10h0m0 4h0m0-20h0m1 0h0m0 30h0m0-40h0m0 22h0m0-4h0m1 9h0m0 14h0m1-1h0m0-7h0m0 10h0m0-15h0m0 2h0m1-13h0m0 24h0m0-49h0m1 36h0m0 1h0m0-17h0m0 19h0m0 6h0m0 2h0m0-20h0m0 32h0m0-29h0m0 5h0m1 2h0m0-8h0m0-9h0m0 16h0m1-4h0m0 1h0m0-3h0m0 7h0m0 3h0m0-5h0m0 12h0m0-11h0m0-9h0m0 25h0m0-33h0m0 15h0m1 13h0m0 3h0m0-35h0m0 1h0m0 32h0m0-12h0m1 12h0m0-10h0m0-2h0m2 0h0m0 2h0m0 10h0m0-21h0m0 2h0m0-6h0m0 21h0m1-5h0m0 12h0m0-15h0m1 15h0m0-12h0m0-15h0m1 9h0m0 18h0m0-30h0m0 29h0m0-8h0m1 2h0m0-1h0m0-39h0m0 6h0m0 20h0m1 11h0m0 8h0m0-12h0m1-10h0m0 22h0m1-15h0m0 7h0m0-2h0m0 6h0m0-5h0m0-6h0m1-8h0m0 21h0m0-8h0m0-1h0m0 17h0m0-9h0m0 5h0m1-14h0m0 4h0m0-2h0m1-2h0m0 8h0m0-10h0m0-1h0m0 10h0m0 2h0m0-21h0m1 28h0m0-20h0m0-5h0m1 16h0m0 2h0m0-9h0m0 11h0m1 10h0m0-28h0m0-4h0m0 26h0m0-18h0m0 5h0m0 2h0m1-7h0m0-18h0m0 27h0m0-4h0m0-2h0m0-21h0m0 13h0m1 6h0m0-5h0m0 12h0m0 7h0m0-14h0m0 0h0m1-4h0m0 3h0m0 14h0m1-9h0m0 3h0m0-6h0m0 4h0m0 5h0m1-6h0m0 17h0m0-15h0m1-8h0m0-9h0m0 32h0m0-33h0m0 9h0m0-2h0m0 2h0m1-7h0m0 14h0m0-6h0m0 16h0m1-7h0m0-11h0m0-4h0m1-10h0m0 33h0m0-26h0m1 15h0m0 8h0m0-5h0m0-2h0m1-18h0m1 15h0m0 0h0m0 0h0m0 1h0m0 1h0m0-2h0m0-1h0m0-10h0m0-2h0m0 21h0m1-22h0m0 8h0m1 6h0m0 3h0m1-3h0m0-1h0m0 4h0m0-7h0m0-4h0m0 18h0m0-15h0m0 4h0m0 18h0m1-18h0m0 3h0m0-1h0m0 3h0m0-1h0m1 9h0m0-25h0m0 1h0m0 11h0m1-3h0m0-7h0m0 5h0m0 34h0m0-38h0m0 10h0m0 3h0m1-37h0m0 44h0m0-14h0m0 6h0m0 18h0m0-21h0m1 15h0m0-1h0m0-12h0m0 7h0m0-5h0m0-10h0m0 13h0m1-5h0m0-19h0m0 7h0m1 7h0m1-2h0m0 12h0m0-24h0m0 30h0m0 7h0m0-53h0m1 26h0m0-7h0m0 3h0m0 12h0m1-3h0m0 2h0m0-11h0m0 24h0m0-9h0m0-2h0m2-22h0m0 24h0m0 2h0m1-16h0m0 1h0m0 5h0m0-3h0m0-15h0m0 21h0m0 21h0m1-41h0m1 24h0m0-27h0m0 30h0m0 3h0m0-1h0m1-9h0m0 16h0m0-16h0m0 1h0m1-4h0m0 7h0m0-14h0m0 11h0m0 1h0m0-14h0m1 9h0m0 8h0m0-8h0m1 0h0m0 17h0m0-17h0m0 11h0m0-23h0m1 33h0m0-27h0m1 6h0m0 10h0m0 8h0m0-8h0m0-8h0m1 15h0m0-10h0m0-4h0m1-1h0m0 10h0m0-9h0m1-10h0m0-3h0m0 29h0m0 2h0m0-6h0m0-13h0m0-1h0m0 7h0m0 5h0m1-34h0m0 44h0m0-21h0m0 0h0m0 9h0m0-7h0m1-3h0m0-1h0m0 16h0m0-2h0m1 9h0m0-22h0m0 8h0m0-33h0m0 35h0m1-4h0m0-13h0m1 20h0m0-9h0m0-32h0m1 31h0m0-13h0m0 9h0m0-2h0m0 26h0m0-8h0m0 16h0m1-29h0m1-7h0m0 4h0m1-14h0m0 20h0m0-10h0m0 14h0m0-9h0m0 18h0m0-10h0m1-18h0m0 29h0m1-20h0m0-13h0m0 31h0m1-16h0m0 3h0m0-4h0m0 2h0m0-14h0m0 12h0m0 5h0m1 8h0m0-21h0m0 11h0m0-21h0m0 31h0m1-4h0m0 25h0m0-19h0m1-27h0m0 16h0m0-5h0m0 16h0m0-30h0m1 18h0m0 6h0m0-6h0m1-10h0m0 21h0m0-26h0m0 10h0m0 5h0m0-9h0m1 17h0m0-13h0m0 8h0m0-3h0m0-2h0m0-3h0m1 20h0m0-20h0m0-19h0m0 27h0m0-10h0m0 24h0m0-19h0m0 0h0m1 11h0m0-12h0m0-15h0m1 5h0m0 22h0m0-19h0m0 2h0m1 9h0m0 10h0m0-16h0m1 21h0m0-18h0m0 12h0m0-15h0m0 22h0m0-16h0m0-15h0m1 10h0m0 3h0m0-7h0m0 11h0m0-13h0m0 19h0m1-2h0m0-25h0m1 32h0m0 2h0m0-13h0m0-6h0m0 3h0m0-3h0m1 12h0m0-8h0m0 11h0m0-13h0m0 1h0m0 0h0m1-16h0m0 21h0m0-4h0m0 10h0m0-4h0m1-7h0m0 4h0m0-11h0m1 24h0m0-6h0m0-7h0m1 11h0m0-2h0m0-27h0m0 14h0m0 2h0m1 12h0m0-14h0m0-2h0m0-9h0m1 16h0m0 3h0m0-24h0m0 26h0m0-8h0m1 10h0m0-22h0m0 9h0m1 9h0m0-23h0m0 19h0m1 21h0m0-30h0m0 1h0m0 4h0m0-12h0m1 22h0m0 5h0m1-39h0m0 6h0m0 29h0m1-18h0m0-5h0m0 23h0m0-5h0m1 3h0m0-8h0m0 0h0m0-1h0m1 7h0m1-40h0m0 32h0m0 0h0m0-12h0m0 12h0m0-1h0m1-23h0m0 42h0m0-39h0m0 34h0m0-24h0m0 16h0m1-3h0m0 2h0m0-14h0m0 3h0m0-5h0m1 14h0m0 0h0m0 14h0m0-5h0m0-5h0m0-4h0m0 8h0m1-16h0m0 20h0m0-15h0m0 15h0m0-5h0m1-5h0m0-6h0m0-13h0m0 12h0m0-4h0m0 10h0m1-11h0m0 7h0m0-2h0m0-4h0m0 11h0m0-11h0m0 3h0m0-2h0m1 19h0m0-1h0m0-8h0m1 10h0m0-7h0m0-21h0m0 16h0m0 1h0m1 11h0m0-22h0m0 6h0m0 7h0m0-2h0m0 2h0m0 5h0m1-11h0m0-24h0m0 33h0m0-12h0m1-25h0m0 15h0m0 24h0m1-16h0m0 15h0m1-10h0m0 5h0m0-15h0m1 15h0m0-24h0m0 18h0m1-1h0m0 23h0m0-6h0m1-5h0m0-10h0m0 9h0m0-11h0m0 10h0m0-5h0m1-6h0m0 8h0m1 15h0m0-24h0m0 12h0m0-9h0m0 31h0m0-24h0m0 1h0m0-23h0m1 23h0m0 8h0m0-24h0m0 11h0m1 6h0m0-8h0m0 3h0m0 9h0m0-6h0m2 3h0m0-13h0m1-5h0m0 15h0m1 5h0m0-22h0m0 20h0m0 4h0m0-3h0m0 15h0m1-33h0m0 4h0m1 4h0m0 1h0m0 7h0m1 3h0m0 2h0m0-13h0m0-2h0m0 1h0m1 16h0m0-26h0m0 17h0m0 0h0m0-20h0m1 25h0m0 15h0m0-9h0m0-6h0m0-42h0m0 35h0m1 0h0m0 13h0m0-7h0m1-14h0m1 11h0m0-12h0m0 6h0m0 4h0m1 3h0m0-8h0m0-2h0m0 15h0m1 3h0m0-38h0m0 34h0m0-6h0m0-16h0m0 15h0m1 6h0m0 1h0m0-11h0m0 11h0m1 15h0m0-10h0m0-8h0m0-17h0m0 18h0m1 7h0m0-5h0m0-15h0m0 7h0m0 0h0m1-2h0m0-9h0m0 25h0m1-23h0m0-4h0m0 24h0m0-14h0m0 5h0m0 2h0m0-11h0m0 28h0m0-6h0m0-17h0m1-20h0m0 18h0m0 2h0m0-22h0m0 19h0m0 20h0m0-23h0m1-27h0m0 28h0m0 10h0m0-16h0m0 21h0m1-10h0m0-10h0m0-2h0m1 21h0m0-3h0m0-12h0m0-1h0m0 2h0m0-1h0m1-20h0m0 25h0m0-14h0m0 4h0m1 11h0m0-1h0m0 10h0m0-17h0m1 11h0m0-10h0m1 3h0m0 17h0m1-1h0m0-7h0m0 2h0m0-7h0m1-7h0m0 21h0m0-14h0m0 12h0m0-8h0m1 0h0m0 9h0m0-12h0m0 6h0m1 7h0m0-12h0m0 1h0m0-8h0m0 4h0m0-2h0m0 7h0m0 8h0m1-18h0m0 8h0m0 8h0m0-9h0m0-6h0m1-1h0m0 14h0m0-29h0m0 29h0m0-22h0m0 4h0m1 12h0m0-3h0m0 11h0m0-19h0m0 6h0m1-3h0m0 18h0m0-1h0m0-8h0m0-5h0m0 13h0m1-9h0m0-13h0m0 3h0m2 22h0m0-9h0m0-6h0m0 5h0m1-5h0m0-8h0m0 16h0m0 4h0m0-41h0m0 19h0m0-21h0m1 23h0m0 9h0m0 8h0m0-6h0m2 6h0m0-23h0m0 12h0m0 5h0m0-12h0m1 8h0m0-4h0m0 1h0m0 15h0m0-4h0m0 6h0m0 3h0m0-17h0m1 10h0m0-3h0m0-9h0m0 9h0m0-3h0m0-20h0m1 15h0m0-17h0m0 9h0m0 18h0m0-14h0m0-22h0m1 25h0m0 0h0m0 8h0m0-1h0m0-9h0m1 3h0m0 7h0m1-5h0m0 3h0m0-22h0m0 8h0m0 17h0m1-8h0m0 23h0m0-24h0m0 12h0m0-26h0m1 12h0m0 2h0m0 0h0m0-2h0m1 12h0m0 11h0m0-17h0m0 15h0m1 1h0m0 0h0m0-22h0m0 26h0m0-35h0m0 26h0m1-11h0m0 1h0m1-1h0m0 4h0m1-31h0m0 29h0m0-7h0m0 3h0m0 4h0m0-2h0m1-30h0m0 33h0m0 0h0m0-13h0m0 19h0m0-9h0m0 8h0m1-30h0m0 1h0m0 19h0m0 3h0m0 23h0m0-37h0m0 7h0m1 0h0m0-3h0m0-16h0m0 41h0m0-8h0m0-5h0m1-15h0m0 20h0m0-27h0m0 26h0m0-12h0m0 0h0m1 2h0m0 2h0m0 18h0m0-21h0m0 16h0m2 0h0m0-2h0m0-4h0m0-4h0m0-3h0m1 17h0m0-12h0m0-13h0m0 4h0m1 7h0m0 8h0m0-12h0m0 8h0m0-7h0m1 26h0m0-26h0m1-6h0m0-8h0m0 6h0m0 8h0m0 1h0m0 2h0m0-16h0m1-21h0m0 37h0m0-14h0m0 9h0m1 1h0m0-24h0m0 11h0m1 19h0m0-5h0m0 12h0m1-22h0m0 15h0m1 5h0m0 0h0m0-9h0m0-7h0m0 16h0m0-10h0m1 0h0m0 10h0m0 0h0m0 3h0m0-9h0m1-4h0m0 8h0m0-10h0m0-1h0m1 10h0m0 2h0m0-14h0m0 18h0m0-5h0m1-4h0m0-12h0m0-21h0m1 33h0m0 17h0m0-10h0m0-3h0m0 9h0m0-48h0m1 29h0m0 14h0m0-10h0m0-8h0m0 14h0m0 0h0m1-15h0m0 20h0m1-12h0m0-6h0m0-5h0m0 10h0m0-3h0m0 18h0m0 0h0m1-15h0m0 5h0m0-14h0m0 0h0m0 14h0m1-6h0m0 24h0m0-31h0m0 13h0m0-2h0m1 7h0m0-1h0m0-5h0m0 9h0m0-20h0m0 17h0m0-9h0m1 7h0m0-3h0m0-9h0m0-23h0m0 37h0m1-14h0m0-9h0m0 20h0m0 0h0m0-27h0m1 37h0m0-6h0m0-9h0m0 9h0m0-15h0m1 8h0m0-4h0m0-14h0m0 20h0m1 11h0m0-14h0m0-9h0m0-5h0m0-16h0m0 38h0m0 2h0m1-18h0m1 13h0m0-36h0m1 22h0m0 11h0m0-5h0m0 5h0m1-10h0m0 22h0m1-4h0m0-22h0m1 27h0m0-53h0m0 36h0m0 13h0m1-5h0m0-14h0m0-3h0m0 5h0m0-6h0m1 0h0m0 28h0m0-30h0m0 32h0m1-24h0m0 1h0m0-2h0m0 5h0m1-9h0m0 10h0m0-9h0m0 16h0m0-4h0m1 7h0m0-3h0m0-1h0m0-24h0m0 18h0m0-18h0m1 6h0m0 15h0m0 7h0m0-7h0m1 6h0m0-11h0m0-1h0m1-3h0m0 20h0m0-12h0m0 13h0m1-28h0m0 5h0m0-6h0m0 20h0m0-12h0m0 17h0m1-5h0m0-24h0m0 33h0m1-17h0m0-4h0m0-10h0m0 10h0m0 26h0m0-13h0m1-21h0m0 8h0m0 10h0m0-12h0m0 0h0m1 5h0m0 7h0m1-7h0m0 19h0m0 8h0m1-34h0m0 13h0m0 1h0m1 5h0m0-8h0m0 13h0m0 0h0m0 3h0m0 0h0m1-15h0m0 16h0m0-31h0m0-7h0m1 29h0m0-23h0m0 4h0m1 35h0m0-20h0m0-17h0m1 12h0m0 2h0m0-6h0m0-13h0m0 26h0m0-22h0m1 10h0m0-6h0m0 14h0m0 4h0m0 17h0m0-37h0m0-7h0m1 24h0m0-6h0m0 5h0m0 0h0m0-2h0m1 0h0m0 2h0m0-4h0m0 0h0m0-1h0m0 18h0m0-6h0m0-42h0m0 0h0m0 21h0m1 6h0m1 12h0m0-23h0m0 11h0m0 14h0m0-11h0m0-14h0m1 10h0m0 2h0m0 4h0m0-8h0m0 9h0m0-3h0m0 22h0m1-16h0m0-11h0m0 3h0m0 7h0m0-4h0m1 2h0m0-11h0m0 7h0m0-2h0m0 13h0m1-44h0m0 3h0m0 25h0m1 2h0m0-6h0m1 6h0m0 7h0m0-2h0m1-3h0m0 3h0m0-19h0m0 32h0m0-20h0m0 17h0m0-15h0m1 16h0m0 6h0m0-30h0m0-4h0m0 4h0m1 21h0m0 1h0m0-19h0m0-2h0m0 14h0m1 8h0m0-6h0m0 17h0m0-16h0m0-2h0m1-9h0m0-1h0m0 10h0m0-23h0m1 23h0m0-5h0m0-29h0m0 25h0m0-7h0m0 0h0m0 10h0m0 0h0m0 2h0m0 13h0m1-16h0m0 0h0m0 10h0m1-13h0m0 23h0m1-4h0m0-40h0m0 30h0m0-9h0m0 0h0m0 15h0m1-16h0m0-22h0m0 24h0m1 9h0m0 1h0m1 5h0m0 10h0m0-10h0m0-15h0m0 6h0m0 1h0m0-3h0m1 1h0m0-3h0m0 1h0m0 8h0m0-7h0m0-34h0m1 2h0m0 46h0m0-12h0m0-18h0m0 25h0m0-5h0m0 7h0m1-14h0m0 1h0m1-2h0m0 4h0m0 4h0m0 26h0m1-33h0m0 15h0m0-25h0m0 23h0m0-40h0m1 47h0m0-18h0m0 3h0m0-1h0m0-11h0m0 6h0m0-4h0m1-6h0m0-13h0m0 17h0m0 21h0m1-26h0m0 20h0m1-9h0m0 0h0m0-8h0m0 20h0m1 12h0m0-17h0m1 1h0m0-1h0m0-4h0m0-7h0m0-24h0m1 32h0m0 8h0m0-13h0m0-5h0m0-4h0m0 14h0m1 17h0m0-10h0m0-9h0m1-9h0m0 18h0m0-5h0m0-14h0m0 6h0m1-3h0m0 6h0m0 4h0m1 7h0m0-32h0m1 39h0m0-14h0m0 12h0m0-17h0m0-10h0m1 36h0m0-30h0m0 24h0m0-18h0m0 11h0m1 9h0m0-21h0m0-5h0m0-1h0m0 0h0m0 6h0m0-1h0m1-14h0m0 20h0m0 1h0m0-14h0m0 12h0m1 11h0m0-23h0m0 12h0m1-18h0m0 6h0m1 18h0m0-12h0m0 4h0m0 16h0m1-3h0m0-9h0m0 0h0m0-25h0m0 27h0m0-8h0m0 13h0m0 1h0m0-5h0m0 8h0m1-2h0m0-4h0m0 14h0m0-12h0m1-7h0m0 11h0m0-20h0m0 8h0m0-14h0m1 7h0m0 4h0m0 6h0m0-3h0m0-3h0m1-8h0m0-10h0m0 32h0m0-9h0m0-21h0m0 17h0m1-5h0m0-1h0m0 5h0m0 0h0m1-5h0m0 1h0m0-22h0m0 25h0m0 4h0m1-11h0m0 25h0m0-19h0m0-11h0m0 13h0m0-3h0m0-11h0m0 21h0m2 6h0m0 5h0m0-7h0m0-10h0m0 17h0m0-37h0m0 25h0m0-18h0m1 17h0m0-10h0m0 6h0m0 11h0m0-7h0m0-11h0m0 4h0m1 24h0m0-24h0m0 7h0m0 6h0m0 11h0m0-10h0m1-8h0m0 3h0m0 0h0m0 25h0m0-20h0m1-10h0m0 4h0m0-11h0m0 18h0m0-18h0m1-2h0m0 3h0m0 14h0m1-37h0m0 37h0m0-2h0m0 11h0m0-20h0m1 15h0m0-21h0m0 10h0m1-23h0m0 29h0m0-7h0m0 13h0m0-6h0m0-16h0m0-1h0m0-5h0m0-6h0m1 14h0m0-15h0m1 26h0m0-10h0m0-9h0m1 5h0m0 4h0m0 8h0m0-13h0m0 19h0m0 14h0m0-11h0m0-16h0m0-6h0m1 27h0m0-49h0m0 31h0m0 0h0m0-3h0m1-10h0m0 15h0m0 7h0m0-8h0m1-15h0m0 16h0m0-11h0m0 4h0m1 1h0m0 5h0m0 4h0m0 5h0m0 3h0m1-6h0m0-14h0m0 11h0m1 12h0m0-4h0m1-11h0m0-13h0m0 13h0m0 25h0m0-10h0m0-28h0m0 40h0m0-30h0m1-3h0m0-12h0m0 17h0m0 15h0m1-3h0m0-8h0m0 0h0m0-4h0m0 3h0m1 2h0m0 2h0m0-14h0m0 4h0m0-6h0m1 10h0m0 13h0m0-16h0m0 11h0m0-8h0m0-9h0m0 7h0m1 21h0m0-9h0m0-26h0m0 19h0m0-1h0m0-6h0m0-30h0m1 50h0m1 1h0m0-22h0m0 2h0m1-32h0m0 32h0m0-4h0m1 6h0m0 0h0m0-1h0m0 5h0m1-5h0m0 5h0m0 6h0m0 11h0m0-13h0m1 12h0m0 2h0m0-28h0m0 22h0m0-5h0m1-6h0m0 10h0m1-14h0m0 4h0m1 9h0m0-7h0m0 23h0m0-15h0m0-24h0m1 16h0m0 4h0m0-9h0m0 4h0m1-13h0m0 15h0m0 4h0m1-3h0m0 21h0m0-27h0m0-1h0m0 21h0m0 8h0m0-33h0m0 7h0m1-28h0m0 38h0m0-13h0m0 5h0m0-12h0m0-26h0m1 41h0m0-19h0m0 7h0m0-5h0m0-6h0m0 4h0m0 7h0m1 14h0m0-10h0m0 0h0m0-3h0m0 15h0m0-5h0m0 1h0m0-13h0m1 8h0m0 5h0m0-10h0m0 2h0m0 10h0m1-16h0m0 9h0m0 2h0m0 8h0m0-18h0m0 2h0m0 27h0m0-59h0m1 34h0m0 1h0m0 16h0m0-30h0m0-3h0m1 30h0m0-7h0m0-9h0m0 8h0m0-39h0m1 26h0m0 10h0m0 2h0m0-2h0m2 0h0m0-37h0m1 25h0m0 13h0m2-15h0m0 17h0m0-3h0m1 7h0m1-3h0m0 8h0m0-17h0m0 8h0m1 11h0m0-8h0m0-6h0m0 1h0m3-22h0m0 14h0m0 9h0m0 9h0m0-15h0m1 15h0m0-13h0m0 11h0m0 1h0m1 0h0m0-26h0m0 29h0m1-20h0m0 8h0m0-5h0m0 9h0m0-18h0m0 5h0m0 0h0m0-20h0m0 35h0m0 0h0m1 1h0m0-6h0m0 7h0m0-24h0m0 18h0m0 1h0m1-29h0m1 5h0m0 19h0m0-5h0m0 2h0m0 9h0m0-8h0m1-6h0m0 8h0m0-4h0m1 24h0m0-49h0m0 43h0m0-15h0m1-25h0m0 45h0m0-12h0m0-14h0m0 6h0m0-11h0m0 3h0m0 11h0m0-26h0m1 13h0m0 3h0m0-16h0m0 31h0m1-3h0m0 9h0m0-28h0m1 10h0m0 0h0m0-23h0m0 23h0m0-8h0m0 12h0m0 14h0m0 12h0m1-26h0m1 1h0m0 8h0m0 6h0m0-28h0m0 17h0m0-1h0m0 1h0m0-2h0m0 1h0m0-13h0m1 32h0m0-15h0m0-16h0m0 10h0m0-22h0m0 26h0m0 6h0m1-31h0m0 2h0m0 13h0m1 7h0m0-21h0m0 31h0m0-14h0m1 11h0m0-12h0m0 2h0m0-22h0m1 37h0m0-11h0m0-6h0m0 3h0m0 17h0m0-4h0m1-18h0m1-27h0m0 42h0m0 0h0m0-1h0m1-38h0m0 29h0m1-3h0m0-2h0m0 11h0m0-13h0m0 0h0m0-6h0m0 1h0m1 2h0m1 6h0m0 12h0m0-7h0m1 8h0m0-12h0m0 10h0m0 8h0m0 0h0m1-17h0m0 15h0m1-24h0m0 8h0m0 6h0m0 5h0m0-1h0m0-38h0m1 43h0m1-15h0m0 13h0m0-19h0m1 23h0m0 2h0m0-14h0m0 0h0m1 2h0m0-20h0m0 7h0m0 12h0m0 5h0m1 7h0m0-17h0m0 11h0m1-12h0m0 11h0m0-14h0m0 3h0m0 18h0m0-27h0m1 2h0m0 14h0m0-19h0m0 16h0m0-1h0m0-15h0m0 20h0m1-2h0m0 2h0m0-15h0m0-10h0m1 28h0m0-14h0m1 19h0m0-5h0m0-8h0m0 19h0m1-17h0m1 4h0m0-9h0m0 1h0m0 18h0m0 2h0m1-5h0m0-5h0m0-1h0m0 1h0m0-8h0m0-15h0m0 26h0m1-37h0m0 32h0m0-1h0m0-7h0m1 18h0m0-14h0m0 4h0m0 6h0m1-9h0m0-6h0m0 5h0m1 4h0m0-7h0m1 0h0m0-17h0m0 10h0m0 11h0m1 7h0m0-3h0m0-13h0m0 22h0m1-32h0m0 8h0m0 8h0m0-14h0m0-6h0m0 45h0m0-15h0m1-1h0m0-12h0m1 9h0m0-3h0m0 4h0m0-15h0m1 17h0m0-2h0m0-4h0m0-25h0m0 56h0m1-9h0m0-30h0m0-12h0m0 23h0m0-8h0m1 1h0m0 8h0m1 5h0m0-5h0m0 5h0m1-20h0m1-2h0m1-8h0m0 16h0m0 0h0m0 7h0m0-2h0m1 12h0m0-38h0m0 33h0m0-15h0m0 19h0m0-4h0m0-13h0m1-26h0m0 28h0m0 2h0m0 16h0m0-8h0m1-6h0m0 2h0m1-2h0m0-10h0m0 0h0m0 16h0m0 3h0m0 7h0m1-16h0m0-7h0m0 5h0m0-12h0m0 19h0m1 4h0m0-30h0m0 5h0m1-21h0m0 35h0m0 10h0m0-17h0m0-12h0m0 24h0m0 0h0m1-5h0m0 15h0m0 2h0m0 5h0m0-29h0m0-22h0m0 37h0m1-14h0m0 19h0m0-6h0m0 3h0m0-11h0m0 6h0m0 14h0m0-26h0m1-3h0m0 1h0m0 15h0m0-2h0m1 10h0m0-42h0m0 21h0m1 7h0m0 16h0m0 0h0m0-23h0m0-24h0m0 26h0m1-19h0m0 2h0m0 32h0m0-10h0m0 6h0m0 7h0m1-15h0m0 17h0m1-16h0m0-6h0m0 4h0m0-6h0m0-2h0m0 6h0m0 10h0m1 0h0m0 0h0m0-2h0m0-1h0m0-2h0m1-12h0m0 27h0m0-28h0m1 26h0m0-2h0m0-36h0m0 28h0m0-32h0m0 16h0m0-1h0m0 1h0m0 20h0m0-9h0m0 21h0m1-6h0m0-31h0m0 22h0m0-7h0m0-3h0m0 1h0m0 20h0m1-36h0m0 2h0m0 12h0m1 14h0m0-4h0m0 4h0m1-6h0m0 1h0m0-27h0m0 21h0m0-22h0m0 26h0m0 1h0m0-3h0m1-6h0m0-29h0m0 28h0m0 13h0m1-11h0m0 3h0m0-25h0m0 22h0m0 5h0m0-13h0m0 18h0m0-1h0m0 7h0m1 5h0m0-11h0m0-9h0m1 10h0m0-5h0m0-25h0m1 12h0m0 14h0m0 5h0m0-9h0m0 3h0m0-1h0m0-6h0m0 0h0m1 5h0m0 7h0m0-22h0m0 17h0m0-6h0m0-6h0m1 21h0m0-19h0m0 8h0m0 12h0m1-16h0m0 4h0m0-4h0m0 14h0m0 17h0m0-18h0m0-5h0m1-14h0m0 4h0m0-9h0m0 14h0m0-8h0m0 18h0m0-21h0m0 2h0m1 13h0m0-12h0m0 7h0m0 10h0m0 3h0m0-1h0m1-10h0m0 10h0m0-5h0m1-11h0m0 8h0m0-22h0m1 36h0m0-10h0m0-5h0m0-2h0m0 9h0m1-11h0m0 15h0m0-2h0m0-19h0m0 26h0m1-10h0m0-23h0m0 31h0m0-25h0m1 3h0m0 4h0m0 3h0m0 21h0m0-15h0m0 2h0m0-14h0m0-1h0m0 23h0m0 11h0m1-14h0m0-26h0m0 17h0m0 1h0m0-6h0m0 9h0m0-6h0m1-5h0m0 15h0m0-12h0m0-3h0m0 1h0m1 1h0m1-17h0m0 19h0m0 1h0m0-7h0m0 9h0m0 12h0m0-3h0m1-5h0m0-13h0m0 15h0m0-2h0m0-15h0m2-2h0m0 10h0m0 15h0m1-12h0m0 0h0m1 6h0m0-23h0m0-3h0m0 18h0m0-30h0m0 25h0m1 2h0m0-8h0m0 11h0m0-9h0m0 10h0m1 9h0m0 4h0m0-12h0m0-5h0m1-7h0m0 11h0m0 18h0m0-13h0m1-31h0m0 35h0m1 4h0m0-18h0m0-14h0m1 20h0m1-36h0m0 34h0m0 6h0m1 3h0m0-21h0m0 15h0m0 14h0m1-23h0m0 31h0m0-36h0m1 10h0m0 3h0m0-18h0m0 7h0m0 8h0m1 27h0m0-42h0m0 8h0m0 29h0m0-38h0m0 24h0m0-5h0m1-14h0m0 25h0m1-31h0m0 16h0m0 14h0m0 0h0m0-9h0m0-7h0m0 13h0m1-3h0m0-10h0m0 22h0m0-15h0m1-13h0m0 24h0m0-11h0m0-2h0m0 1h0m0 8h0m0-22h0m1 15h0m0 9h0m0-10h0m1-15h0m0 9h0m1 25h0m0-30h0m0 23h0m0-24h0m0 21h0m0-23h0m1 4h0m0 12h0m0-2h0m0-25h0m0 6h0m1 2h0m0 22h0m0-6h0m0 9h0m0-10h0m1-4h0m0 12h0m0-15h0m1 1h0m0 12h0m0-8h0m0-17h0m0 19h0m2 10h0m0 5h0m0-39h0m0 22h0m1-7h0m0 5h0m1 4h0m0-16h0m0 23h0m0-6h0m0 4h0m1 1h0m0 6h0m0-16h0m0 10h0m0 4h0m1-16h0m0-3h0m0 19h0m0-10h0m0-7h0m0-5h0m0-1h0m0 17h0m1 6h0m0 5h0m0-13h0m1-4h0m0 26h0m0-17h0m0 4h0m0-11h0m1 9h0m0 7h0m0-25h0m0 14h0m0-14h0m0 11h0m0 10h0m1 4h0m0 1h0m0-10h0m1-4h0m0-26h0m1 15h0m0 11h0m1-6h0m0-6h0m0 4h0m0 3h0m1-2h0m0 19h0m2-12h0m0 12h0m0-31h0m1 10h0m0 11h0m0 1h0m0 0h0m0-8h0m0 8h0m1-1h0m0 6h0m0-13h0m0-1h0m0 15h0m1-15h0m0 8h0m0-10h0m1-1h0m0 14h0m0-38h0m0 21h0m1 23h0m0-20h0m0-4h0m0 8h0m1 20h0m0-23h0m0 12h0m0-10h0m0-13h0m1 20h0m0 8h0m0 1h0m0-16h0m1 18h0m0 1h0m0-16h0m1-9h0m0 10h0m0-15h0m0 6h0m0 5h0m0 2h0m1-4h0m0-12h0m0 11h0m0-4h0m0-20h0m1 49h0m0-6h0m0-10h0m0 14h0m0-20h0m1-30h0m0 22h0m0 23h0m0-27h0m0 9h0m1 21h0m0-8h0m0-17h0m0 42h0m0-36h0m0 6h0m1-11h0m0 1h0m1-14h0m0 41h0m0-20h0m0 9h0m0-28h0m0 10h0m1 19h0m0 5h0m0-9h0m0-8h0m1-6h0m0-17h0m0 38h0m0-8h0m0-2h0m1-8h0m0-6h0m0 9h0m1 3h0m0-20h0m0 20h0m0-9h0m0 11h0m0 3h0m0 3h0m0 1h0m1-5h0m0-5h0m0-8h0m1 0h0m0 15h0m0 0h0m0-11h0m0 2h0m1 11h0m0-5h0m0 16h0m1-49h0m0 44h0m0-13h0m0 28h0m0-26h0m0-32h0m1 37h0m0-5h0m1 7h0m0-22h0m0 6h0m0 13h0m1-20h0m0 17h0m0-2h0m0-18h0m1 2h0m0 17h0m0-6h0m0 7h0m0-10h0m0 12h0m1-14h0m0-10h0m0 21h0m0-11h0m1 9h0m0-2h0m0-22h0m1 36h0m0-14h0m0 4h0m0-16h0m1 14h0m0 13h0m0-27h0m0 19h0m0-5h0m0 5h0m1 1h0m0-15h0m1 31h0m0-11h0m0-15h0m1 6h0m1 3h0m0-19h0m0 11h0m0 12h0m0-18h0m1 33h0m0-23h0m0-2h0m0-6h0m0 8h0m0 9h0m0-39h0m1 36h0m0-4h0m1 19h0m0-41h0m0 22h0m0-19h0m1 20h0m0-34h0m0 15h0m1 2h0m0 15h0m1-4h0m0 4h0m0 4h0m0 2h0m0-4h0m0-13h0m1-1h0m0 1h0m0 3h0m0 14h0m1-8h0m0 3h0m0 5h0m0-15h0m1-4h0m0 4h0m0 20h0m1-6h0m0-11h0m1-1h0m0-1h0m0 12h0m1 1h0m0-18h0m0 4h0m0-17h0m0 20h0m1-3h0m1 8h0m0 1h0m1 18h0m0-28h0m0 21h0m0-12h0m0-36h0m0 31h0m0-20h0m1 33h0m0-12h0m1-1h0m0 22h0m1-20h0m0 4h0m0 15h0m0-17h0m0-6h0m0 0h0m1 11h0m0-11h0m0-3h0m0 4h0m0 18h0m0-21h0m1 14h0m0-1h0m0-10h0m1-8h0m0-1h0m0 40h0m0-39h0m0 32h0m0-42h0m1 35h0m0-14h0m0-7h0m0 10h0m0 3h0m0 20h0m0-17h0m0-9h0m0 3h0m0-9h0m0 16h0m1-19h0m0 20h0m0-2h0m0-9h0m0-21h0m1 15h0m0 14h0m0-11h0m0 16h0m0-40h0m1 23h0m0 6h0m1 1h0m0-15h0m0 13h0m0 8h0m0-23h0m0 25h0m0-2h0m0-16h0m1 9h0m0 4h0m0 5h0m0-14h0m0 14h0m1-5h0m0-16h0m0 16h0m0-9h0m0 3h0m1-12h0m1-10h0m0 27h0m0-9h0m1 13h0m0-38h0m1 17h0m0 7h0m0 18h0m0-40h0m1-2h0m0 33h0m0-6h0m0 15h0m0-11h0m0-12h0m1 1h0m0 18h0m0-8h0m0-8h0m0 11h0m0-16h0m1 21h0m0-19h0m0-2h0m0 19h0m0-17h0m0-13h0m0 46h0m0-14h0m0 1h0m2-29h0m0 19h0m0-7h0m0 18h0m0-5h0m1 19h0m0-26h0m0-8h0m0 13h0m0 13h0m0-30h0m0 25h0m1-2h0m0-21h0m0 18h0m1-8h0m0-12h0m0 30h0m1-28h0m1 9h0m0 4h0m0-14h0m0 29h0m0-22h0m0 8h0m1 1h0m0 8h0m0-6h0m0-15h0m0 20h0m1-10h0m0-5h0m0 19h0m0-6h0m0-7h0m0-9h0m0 9h0m1 8h0m0-5h0m0 15h0m0-20h0m1 6h0m0-18h0m0 16h0m0-1h0m0 11h0m0-22h0m1-2h0m0 14h0m0 1h0m0 14h0m1-11h0m0 6h0m0 3h0m0 4h0m0-43h0m1 19h0m0 1h0m0-3h0m0-3h0m1 33h0m0-22h0m0 8h0m0-11h0m1-1h0m0 4h0m0 5h0m0 0h0m0-19h0m1 20h0m0-7h0m0-5h0m0-7h0m0 13h0m1 1h0m0 12h0m0-7h0m0-8h0m1 20h0m0-17h0m0-33h0m1-6h0m0 41h0m0-31h0m0 24h0m1-4h0m0 4h0m0 4h0m0 30h0m1-33h0m0 11h0m0-11h0m0 5h0m0-5h0m1-10h0m1-2h0m0 19h0m0 11h0m0-16h0m0-5h0m0-33h0m1 33h0m0-29h0m1 33h0m0 2h0m1 3h0m0 7h0m0-12h0m1-7h0m0 16h0m0-9h0m0 14h0m0-13h0m0-33h0m0 44h0m0-27h0m0 18h0m1 10h0m0-9h0m0-1h0m1-2h0m0-9h0m0 16h0m0-6h0m1-11h0m0 13h0m0-8h0m0 11h0m0-10h0m1-14h0m0 13h0m0 7h0m1 3h0m0-2h0m0 4h0m1 9h0m0-34h0m0 27h0m0 5h0m0-23h0m0 14h0m0-14h0m0 10h0m1 12h0m0-3h0m0 1h0m0-5h0m0-17h0m0 10h0m1 21h0m0-24h0m0 9h0m1 3h0m0-8h0m0 9h0m0-20h0m0 16h0m1 0h0m0 3h0m0-7h0m2-18h0m0 18h0m0 5h0m0 6h0m0-22h0m0 2h0m1 21h0m0-5h0m0-8h0m0 15h0m0-4h0m1-11h0m0-5h0m0 7h0m1 19h0m0-27h0m1 9h0m0-5h0m1-11h0m0 8h0m0 22h0m0-20h0m1-9h0m0-23h0m1 12h0m0 13h0m0 14h0m0-8h0m0-2h0m0 6h0m1 21h0m0-33h0m0 18h0m0 10h0m0-16h0m1 1h0m0 6h0m0-3h0m0-5h0m0-22h0m1 17h0m0 8h0m0-20h0m0 20h0m0-21h0m1 19h0m0 17h0m0-40h0m0-12h0m1 31h0m0 8h0m0-6h0m0-1h0m0 6h0m1 11h0m0-15h0m0-5h0m0 12h0m0-7h0m1-2h0m0 21h0m0-17h0m0 9h0m0-9h0m1 15h0m0-24h0m0 1h0m0 5h0m0 9h0m1-17h0m0 16h0m1 4h0m0 2h0m0-16h0m0 11h0m0-18h0m1 27h0m0-8h0m0-2h0m0-22h0m0 16h0m1 2h0m0-2h0m0 14h0m0-7h0m1-11h0m0 3h0m0-10h0m0-6h0m1 3h0m0 22h0m1 0h0m0-2h0m0-16h0m0 10h0m0 5h0m0-17h0m0 16h0m1 1h0m0-14h0m0-12h0m1 36h0m0 2h0m0-36h0m0 15h0m0-5h0m0 9h0m0-1h0m1 13h0m0-16h0m0-15h0m1 20h0m0-11h0m0 21h0m0-16h0m0 0h0m0-7h0m0 22h0m1-11h0m0 17h0m0-33h0m0 6h0m0-5h0m1 12h0m0 16h0m0 5h0m0-18h0m1 9h0m0-10h0m1 4h0m0 0h0m0-3h0m0 16h0m0-21h0m0 1h0m1-7h0m0-8h0m0 34h0m0-7h0m0 11h0m0-4h0m0-25h0m0 22h0m0-14h0m1 10h0m0-17h0m0 20h0m0-7h0m1-10h0m0 3h0m1 9h0m0-13h0m0-4h0m0 10h0m0 22h0m0-26h0m1 12h0m0-29h0m0 18h0m1 14h0m1 0h0m0-1h0m1-21h0m0-3h0m0 24h0m0-6h0m0 12h0m1-28h0m0 26h0m0-16h0m0 20h0m0-36h0m0 22h0m1-18h0m0 12h0m0 5h0m2 11h0m0-32h0m0 10h0m0 9h0m1 3h0m0-14h0m0 26h0m0 0h0m1-3h0m0-21h0m0 26h0m0-7h0m0-8h0m1 21h0m0-15h0m0-34h0m1 27h0m0 10h0m0 0h0m1-26h0m0 13h0m0 0h0m0 5h0m1 2h0m0-18h0m1 20h0m0 17h0m0-24h0m1-4h0m0 7h0m0-4h0m0 1h0m0 1h0m1-16h0m0 5h0m0 8h0m0-12h0m0 22h0m1 6h0m0 1h0m1 0h0m0-30h0m0 6h0m0 7h0m1 5h0m0-19h0m0 36h0m0-10h0m0-30h0m1 28h0m0-9h0m0 3h0m0 7h0m0-12h0m1-20h0m0 36h0m0 5h0m0-17h0m0-17h0m2 24h0m0 7h0m0 0h0m1-10h0m0 1h0m0-14h0m1 18h0m0 1h0m0-17h0m0 6h0m1-30h0m0 43h0m0-21h0m0-18h0m0 39h0m0-17h0m0 10h0m1-20h0m0 15h0m1 0h0m1 9h0m0-8h0m0-33h0m1 10h0m0 24h0m0 7h0m0-5h0m1 4h0m0-9h0m0 2h0m0-1h0m1 1h0m0-13h0m0 21h0m0 0h0m0-14h0m0 1h0m0 7h0m1-36h0m0 17h0m0 12h0m1-2h0m0-8h0m1 26h0m0 2h0m0-2h0m0-26h0m1 17h0m0-12h0m0 18h0m0-20h0m0 9h0m1-8h0m0 6h0m0 4h0m1-10h0m0 8h0m0 6h0m0-10h0m0 7h0m0 8h0m0-20h0m1 12h0m0 3h0m0-6h0m0 12h0m0-8h0m1-15h0m0 8h0m1 6h0m0 3h0m0-10h0m1 4h0m1-3h0m0-3h0m0 19h0m0-22h0m0 4h0m0 12h0m0 3h0m0-25h0m1-5h0m0-6h0m0 35h0m0-25h0m1-1h0m0 15h0m0 5h0m0 5h0m1-1h0m0-21h0m0 37h0m0-13h0m0 1h0m1 5h0m0-23h0m0 15h0m1-13h0m0-3h0m0 20h0m1-19h0m0 7h0m0 5h0m1-8h0m0 3h0m0 4h0m0 11h0m0-21h0m0 11h0m0-14h0m1 1h0m0 1h0m0 8h0m0-5h0m0-8h0m1 15h0m0 2h0m0 0h0m2 8h0m0 7h0m0-23h0m0 6h0m1-1h0m0-8h0m1 15h0m0-19h0m0 7h0m0 3h0m0 2h0m1-10h0m0-18h0m0 22h0m0 16h0m1-13h0m0 13h0m0-16h0m0-9h0m0 0h0m0 14h0m0 12h0m1-4h0m0-11h0m0 10h0m0-14h0m0 9h0m1 9h0m1-24h0m0 17h0m0 3h0m0 1h0m0-5h0m0-16h0m1 13h0m0-5h0m0-13h0m0 27h0m0-16h0m1 11h0m0-5h0m0 23h0m0-51h0m0 37h0m1-9h0m0 14h0m0-9h0m0-14h0m0-17h0m0 27h0m0-5h0m1-8h0m0 21h0m1-4h0m1 16h0m0-34h0m0 15h0m1-7h0m0 11h0m0-14h0m0-13h0m0 26h0m1-8h0m0 1h0m0-7h0m0 31h0m0-22h0m1 9h0m0 6h0m1 0h0m1-7h0m1-8h0m0 10h0m0 7h0m0-11h0m0-14h0m0-8h0m0 14h0m1-5h0m0-1h0m0 19h0m1 1h0m0-20h0m0 6h0m1 7h0m0-3h0m0 2h0m0 2h0m1-17h0m0 3h0m0 0h0m0 6h0m2 11h0m0-8h0m0 13h0m0 11h0m0-20h0m0-5h0m1 10h0m0-16h0m0 14h0m1-1h0m0 6h0m1-1h0m0-19h0m0 18h0m0-13h0m0 16h0m0-16h0m0 19h0m0-26h0m0 11h0m1 16h0m0-21h0m0 16h0m0-10h0m0-7h0m1 1h0m0 4h0m1-5h0m0-14h0m0 17h0m0 0h0m0-16h0m0 32h0m0-15h0m0-9h0m1 19h0m0-19h0m0 5h0m0 14h0m0-17h0m1-14h0m0 26h0m0-17h0m1-6h0m0 1h0m0 20h0m0 5h0m1-5h0m0-33h0m0 25h0m0-19h0m0 32h0m0-4h0m0 0h0m0 7h0m1-10h0m0 11h0m1-17h0m0 3h0m0 7h0m1 14h0m0-35h0m0 12h0m0-22h0m0 41h0m1-21h0m0 16h0m0-9h0m0 3h0m0-16h0m0 29h0m0-13h0m1-6h0m0-11h0m0 7h0m1-15h0m0 13h0m0 16h0m1-17h0m0 4h0m0 3h0m0 10h0m1-6h0m0-33h0m0 33h0m1-14h0m0 10h0m2 1h0m0 1h0m0 10h0m0-14h0m0-3h0m0 18h0m1-4h0m0 1h0m1-16h0m0 13h0m0-1h0m0-10h0m1-26h0m0 48h0m0-13h0m0 3h0m1 7h0m0-31h0m1-11h0m0 38h0m0 0h0m0-8h0m0-9h0m0 2h0m1 4h0m0 16h0m0 4h0m0-13h0m0-7h0m1-2h0m0-6h0m0 14h0m0 1h0m2-12h0m0 12h0m0-13h0m0 32h0m1-24h0m0 1h0m0 0h0m0-6h0m0 8h0m1-1h0m0 6h0m0-14h0m0 11h0m0-1h0m1 5h0m0-36h0m0 36h0m0-28h0m0 23h0m1-11h0m0 21h0m0-30h0m0-4h0m1 21h0m0 1h0m0-14h0m0 21h0m1-9h0m0 4h0m1 6h0m0-8h0m0-10h0m1-4h0m1 16h0m0-16h0m0 10h0m0 7h0m0-10h0m0 13h0m0-28h0m1-15h0m0 32h0m0 2h0m0-2h0m0 12h0m1 0h0m0-6h0m0-4h0m0 9h0m0 0h0m1 9h0m0-15h0m0-5h0m0-2h0m0 10h0m1-6h0m0-9h0m1 7h0m0 5h0m0 1h0m0-4h0m1 1h0m0 6h0m0-11h0m0 9h0m0-9h0m0 12h0m1-15h0m0 10h0m0-20h0m0 28h0m0-23h0m0 12h0m1-7h0m0-7h0m1 20h0m0-2h0m0-3h0m0-6h0m0 7h0m0-15h0m1-3h0m0 30h0m0-51h0m0 38h0m0-9h0m1 8h0m0-6h0m0-13h0m0 33h0m0-24h0m1 13h0m0-12h0m1 15h0m0-1h0m0-2h0m1 2h0m0-18h0m0 8h0m0 18h0m1-13h0m0 2h0m0 2h0m0-13h0m0 9h0m0 0h0m1-8h0m0 30h0m0-22h0m0-8h0m0 0h0m0-16h0m1 30h0m1-13h0m0 5h0m1 10h0m0-11h0m0 0h0m0 27h0m0-46h0m1 22h0m0-12h0m0 12h0m1 18h0m0-25h0m0 21h0m0-22h0m1 2h0m0-10h0m1 18h0m0-13h0m0 1h0m1 6h0m0-19h0m0 23h0m0 1h0m0 5h0m0-10h0m1 1h0m0 1h0m0 14h0m0 13h0m1-19h0m0 7h0m1-5h0m0-10h0m1 17h0m0-11h0m1 11h0m0-1h0m0-25h0m0 24h0m0-12h0m1 13h0m0-8h0m0 1h0m0 1h0m0-10h0m1-3h0m0 4h0m0-5h0m0 11h0m0-11h0m0 3h0m0 7h0m1-18h0m0 26h0m0 1h0m1-13h0m0 0h0m0 16h0m0-19h0m0 19h0m1-8h0m0-3h0m0-5h0m0-22h0m0 21h0m1-2h0m0 9h0m0 14h0m0-27h0m0 16h0m1-21h0m0 16h0m0 19h0m1-26h0m0 0h0m0 5h0m0 3h0m0 7h0m0-11h0m1 1h0m0 5h0m0-3h0m0-1h0m1 8h0m0 3h0m0-23h0m0 29h0m0-5h0m0-15h0m0 0h0m1 7h0m1-7h0m0 7h0m0 5h0m0-12h0m1 6h0m0-1h0m1-12h0m0 0h0m0 7h0m0 0h0m0-15h0m0 16h0m0-31h0m0 38h0m0-1h0m1-11h0m0-6h0m0-2h0m0 9h0m1 1h0m0 6h0m0-18h0m0 21h0m0 13h0m0-25h0m0 2h0m1 22h0m0-19h0m0 14h0m0-8h0m0-12h0m0 20h0m1-7h0m0-13h0m0 12h0m0-15h0m0 7h0m1-3h0m0 1h0m0-12h0m0 35h0m0-40h0m0 31h0m0-12h0m0 15h0m1 4h0m0-17h0m0-7h0m1 18h0m0-26h0m0 5h0m0 22h0m0-4h0m0-1h0m0-7h0m0 0h0m0 5h0m1-35h0m0 30h0m0 0h0m0 11h0m0-6h0m1 8h0m0-8h0m0-4h0m0 3h0m0 17h0m0-4h0m0-27h0m0 13h0m1 2h0m0-4h0m0-15h0m0 8h0m0-6h0m0 23h0m0-25h0m1 28h0m0-18h0m0-4h0m0-5h0m0-10h0m0-1h0m1 3h0m0 27h0m0 1h0m0-1h0m0-36h0m1 15h0m0 18h0m0-3h0m0-9h0m0 15h0m1-29h0m0 23h0m0 4h0m1 10h0m0-8h0m0-5h0m0-4h0m0 21h0m0-32h0m0 9h0m1 4h0m0-4h0m0 34h0m1-25h0m0 3h0m1-2h0m0-5h0m0 13h0m0 15h0m0-26h0m0-19h0m1 22h0m0-3h0m0-20h0m0 18h0m1-2h0m0 0h0m1 15h0m0-23h0m1 13h0m0 8h0m0-6h0m0-15h0m1 19h0m0-25h0m0 8h0m0-2h0m0 14h0m0-3h0m0-2h0m0 9h0m0-10h0m1 10h0m0-8h0m0 9h0m0-6h0m0-14h0m0 18h0m1 4h0m0-6h0m0 2h0m0-8h0m0-4h0m1 7h0m0-18h0m0-16h0m0 30h0m1 20h0m0 2h0m0-12h0m0-3h0m0 9h0m0-4h0m1 8h0m0-29h0m1 15h0m0 2h0m0 5h0m0-11h0m0 28h0m0-16h0m0-9h0m0 8h0m1-5h0m0-5h0m0-8h0m0 10h0m0-2h0m1 6h0m0-4h0m0-9h0m0 20h0m1-31h0m0 25h0m0-4h0m1-3h0m0 12h0m0-26h0m0 14h0m0 16h0m0-27h0m1 24h0m0-21h0m0 0h0m0 24h0m1 7h0m0-11h0m0-16h0m1 8h0m0-8h0m0-3h0m1 11h0m0-4h0m0-8h0m0 11h0m0-8h0m0-1h0m1 12h0m0-12h0m0 23h0m0-17h0m0 2h0m0-1h0m0 4h0m0-13h0m0 5h0m1 4h0m0 3h0m0-1h0m0 1h0m0 2h0m0 1h0m0-4h0m0 0h0m1 2h0m1-11h0m0 6h0m0 1h0m0-12h0m0 26h0m1-41h0m0 36h0m0-3h0m1-8h0m1 10h0m0 1h0m0-14h0m1-29h0m0 53h0m0-18h0m0 0h0m0 2h0m1-14h0m0 10h0m0 11h0m0-4h0m0 5h0m0-17h0m1 3h0m0 6h0m0-5h0m0-17h0m0 20h0m0-2h0m1-9h0m0-12h0m0 15h0m0 6h0m0-18h0m0-7h0m1 41h0m0-17h0m0 13h0m0-6h0m0 1h0m0-19h0m1 11h0m0 4h0m1-14h0m0-17h0m0 27h0m1 2h0m0 1h0m0-26h0m0 35h0m1-22h0m0 11h0m0-1h0m0 1h0m0 2h0m0 1h0m0 1h0m0 8h0m0-4h0m0 21h0m0-29h0m0-5h0m1 10h0m0-17h0m0 10h0m1-12h0m0 26h0m0-17h0m1 1h0m0 2h0m0-4h0m0 2h0m0-4h0m1 16h0m0 18h0m0-26h0m1 9h0m0-17h0m0 17h0m0-7h0m0 23h0m1-24h0m0 2h0m0-12h0m0 9h0m2-1h0m0 1h0m0 20h0m0-25h0m0 7h0m0 0h0m1-8h0m0 14h0m0-2h0m0-21h0m1 15h0m0-7h0m0-7h0m0 13h0m0 12h0m1-8h0m0-11h0m0 4h0m0 18h0m0-16h0m1 16h0m0-15h0m0 11h0m0 4h0m0-13h0m0-13h0m1 22h0m0-15h0m0 9h0m0 2h0m1-5h0m0-14h0m0 23h0m0 5h0m0-5h0m0-7h0m1 28h0m0-20h0m0-8h0m0 4h0m1 2h0m0-23h0m0 26h0m0-6h0m0-1h0m0 2h0m0-3h0m0-6h0m0 18h0m0-11h0m1-3h0m0 12h0m0-3h0m0-14h0m0-10h0m1 8h0m0 10h0m0-7h0m0 5h0m0-24h0m0 29h0m0 2h0m0-8h0m1-29h0m0 20h0m0-11h0m0 15h0m0-7h0m0 4h0m0 17h0m1-12h0m0-3h0m0 8h0m1-1h0m0-5h0m0 9h0m0-14h0m0 18h0m0-9h0m1 5h0m0-12h0m0-6h0m0-8h0m0 30h0m0-11h0m0-17h0m0 15h0m1 1h0m0 16h0m0 1h0m1-11h0m0-3h0m0 10h0m0-11h0m0-10h0m1 11h0m0-33h0m0 41h0m0-27h0m0 13h0m0 6h0m0 0h0m1 5h0m0-4h0m0-1h0m0-28h0m1 23h0m0 2h0m0 8h0m0 7h0m1-7h0m0 6h0m0-27h0m0 16h0m0-35h0m0 38h0m1-11h0m0 3h0m0-10h0m1 14h0m0-3h0m0-1h0m1-12h0m0 36h0m0-8h0m0-1h0m1-5h0m0 0h0m0-12h0m0 10h0m0-2h0m0-2h0m1 16h0m0-24h0m0 21h0m0-16h0m1-25h0m0 41h0m0-20h0m0 5h0m1 1h0m0 2h0m0-1h0m0-3h0m0-5h0m0 29h0m1-36h0m0 15h0m0-2h0m0 9h0m0-1h0m0-9h0m1 13h0m0 3h0m0-28h0m0 15h0m0 6h0m0-20h0m1 14h0m0-9h0m0 12h0m0-1h0m0 7h0m0-20h0m0 27h0m2-8h0m0 11h0m0-13h0m0-5h0m0 1h0m0-6h0m0 11h0m0-9h0m0-31h0m0 43h0m1-7h0m0-9h0m0-2h0m0 18h0m1 0h0m1-36h0m0 33h0m0-7h0m0-8h0m0 8h0m0 3h0m0 7h0m1-17h0m0 3h0m0-8h0m0 24h0m0-9h0m1 8h0m1-12h0m0-6h0m0 21h0m0-13h0m0 4h0m1 2h0m0 5h0m0-41h0m0 20h0m0 8h0m0 1h0m0 3h0m0-1h0m1 6h0m0-13h0m1-3h0m0 13h0m0 0h0m0-11h0m0-5h0m1 4h0m0 10h0m0-15h0m1 18h0m0-18h0m1-12h0m0 29h0m0-10h0m0-8h0m0 15h0m0-3h0m1-5h0m0 18h0m1 0h0m0-16h0m0 7h0m0-9h0m1-4h0m0 39h0m0-38h0m0 6h0m0 20h0m0-6h0m0 6h0m1-15h0m0-3h0m0 12h0m0-22h0m0 18h0m0-10h0m1 2h0m0 1h0m0-1h0m0 6h0m1-26h0m0 34h0m0-7h0m0-9h0m1-9h0m0 13h0m0 4h0m1-22h0m0 16h0m0-9h0m0 22h0m1-45h0m0 27h0m1-3h0m0 7h0m0-3h0m0-9h0m0-8h0m0 27h0m0-19h0m1 6h0m0-1h0m0 14h0m0-2h0m1-29h0m0 28h0m0 1h0m0-3h0m0-9h0m0-5h0m0 24h0m1 11h0m0-25h0m0-7h0m0 24h0m1-44h0m0 22h0m0-26h0m0 33h0m0-4h0m0 8h0m0 11h0m1-8h0m0 26h0m0-19h0m0-15h0m0 10h0m1-1h0m0-40h0m0 42h0m0 2h0m0-4h0m1 10h0m0-41h0m1 30h0m0-16h0m0 6h0m0-7h0m1 16h0m0 4h0m0-13h0m0-5h0m1 0h0m0 6h0m1 17h0m0-22h0m0 9h0m0-3h0m1 1h0m0 14h0m0-29h0m1 40h0m0-28h0m0 16h0m1 12h0m0-22h0m0-6h0m1 4h0m0-4h0m0 3h0m0 28h0m1-50h0m0 23h0m0 7h0m0 5h0m1-2h0m0-18h0m1 9h0m0 24h0m0-21h0m0 15h0m0-12h0m0 4h0m0-5h0m1-21h0m0 11h0m0 3h0m0 4h0m0-1h0m0-15h0m0 22h0m0-3h0m1-20h0m0 22h0m1 8h0m0 11h0m0-25h0m0 1h0m0 1h0m0 2h0m1 6h0m0-20h0m0-19h0m0 14h0m1 12h0m0 4h0m0-8h0m0-3h0m0-12h0m0 31h0m1 11h0m0 4h0m0-53h0m0 34h0m0 0h0m1-8h0m0 6h0m0-3h0m1-13h0m0 23h0m0-15h0m0-1h0m1-2h0m0 7h0m0-5h0m1 6h0m0-1h0m0 10h0m1-12h0m0-21h0m1 34h0m0-20h0m0 6h0m1 11h0m0-11h0m0 18h0m1-29h0m0 11h0m0 7h0m1-10h0m1 15h0m1-19h0m0 12h0m1-17h0m0 17h0m1 7h0m0-10h0m0-5h0m0 10h0m0 3h0m0-34h0m1 47h0m0-28h0m0 10h0m1 14h0m0-10h0m0-4h0m0-7h0m0 11h0m1-1h0m0-11h0m0 9h0m0-7h0m1-1h0m1 6h0m0 0h0m0 5h0m0-11h0m1-8h0m0 12h0m0-2h0m0-5h0m1-5h0m1 9h0m0 7h0m0-2h0m0-9h0m0 10h0m0-17h0m1 11h0m1-12h0m0 29h0m0-21h0m0 9h0m0 5h0m1 4h0m0-7h0m0-10h0m0 14h0m1-4h0m0-21h0m0 29h0m0-8h0m1 3h0m0-6h0m0-4h0m1-17h0m0 8h0m0 13h0m0 9h0m1-15h0m0-7h0m0 18h0m0-17h0m0 9h0m1 6h0m0 13h0m0-29h0m0 23h0m0-14h0m0 14h0m1-14h0m0-8h0m0 16h0m0-3h0m0 9h0m0-42h0m0 37h0m0-1h0m0 2h0m1-2h0m0-17h0m0 16h0m0 6h0m1 1h0m0-11h0m0 8h0m0-6h0m0-25h0m0 33h0m1 11h0m0-19h0m0 20h0m0-25h0m1-25h0m0 37h0m0-3h0m0 7h0m0-18h0m0 16h0m0-17h0m0 7h0m1-10h0m0 14h0m1-12h0m0 6h0m0 22h0m0-21h0m0 7h0m1-17h0m0 13h0m0-11h0m0-12h0m1 21h0m0 5h0m0-37h0m0 38h0m1-5h0m0 1h0m0 2h0m0-30h0m0 27h0m1 3h0m0 9h0m0-26h0m0 29h0m0-13h0m0 7h0m0-27h0m1 15h0m0 13h0m0-35h0m0 34h0m0-16h0m0 23h0m0-29h0m0 6h0m0 5h0m0-20h0m1 32h0m0-4h0m1-8h0m1-3h0m0 0h0m0 7h0m1 4h0m0-12h0m0 18h0m1-10h0m0 10h0m0-21h0m0 15h0m0-12h0m1-6h0m0 12h0m0 12h0m0 9h0m0-6h0m0 0h0m1-4h0m0-20h0m0 2h0m0 6h0m0-15h0m0 17h0m1 3h0m0-10h0m0-16h0m0 34h0m0 10h0m1-12h0m0-7h0m0-7h0m0 1h0m0-6h0m0-2h0m0 36h0m1-18h0m0 5h0m0-18h0m0 8h0m0 1h0m1 1h0m0 2h0m0 7h0m0-10h0m1-16h0m0 19h0m0-14h0m0-18h0m0 21h0m1 5h0m1 9h0m0-13h0m2-4h0m0 6h0m0 4h0m1-11h0m0 5h0m0 6h0m0 6h0m0-26h0m0 19h0m0-1h0m0 1h0m0 3h0m0 9h0m0-8h0m1 5h0m0-18h0m0-11h0m0 26h0m1-15h0m0 6h0m0 12h0m0-3h0m0-10h0m1-9h0m0 8h0m0 13h0m1-8h0m0 0h0m0 0h0m0 17h0m1-16h0m0-2h0m1-4h0m0 4h0m0-26h0m0 4h0m0 16h0m0 7h0m1 8h0m0-21h0m0 3h0m0 12h0m1-9h0m0 3h0m0 9h0m0 2h0m1-19h0m0 6h0m0 16h0m0-18h0m1 0h0m0 7h0m0-3h0m0 4h0m1-5h0m0-5h0m0-5h0m0 7h0m1 0h0m0 11h0m0-5h0m0-16h0m0 14h0m0 2h0m0-4h0m1-12h0m0 9h0m0 19h0m1-25h0m0-2h0m0 30h0m0 0h0m0-37h0m0 23h0m1 2h0m0-5h0m0-1h0m0 2h0m1 16h0m0 3h0m1-2h0m0-12h0m0-4h0m0-5h0m1 8h0m0-16h0m0 10h0m0 5h0m1 16h0m0-7h0m0-9h0m0 15h0m0-11h0m0 9h0m0-16h0m0-33h0m1 37h0m0-4h0m0-5h0m0 9h0m1-2h0m0-6h0m0-5h0m1 13h0m0 2h0m0 2h0m0-15h0m0 7h0m0 2h0m1-9h0m0 2h0m0-2h0m0 10h0m1 9h0m0-11h0m1 3h0m0-5h0m0 5h0m0-9h0m1 19h0m0-9h0m0 2h0m0-24h0m0 27h0m1 1h0m0 5h0m1-12h0m0-16h0m0 1h0m0 6h0m0 3h0m1 7h0m0 14h0m0-20h0m1-7h0m0 14h0m0 15h0m1-3h0m0-18h0m0 8h0m0-2h0m1-7h0m0-1h0m1 10h0m0 0h0m1 13h0m0-28h0m1 0h0m0 16h0m0-8h0m0 11h0m0-13h0m0-32h0m1 42h0m1-7h0m0-7h0m0 10h0m0-5h0m0 12h0m0-32h0m1 21h0m0 15h0m0-24h0m0 23h0m0-21h0m0 1h0m0-8h0m0 20h0m0 11h0m0-21h0m1 0h0m0 5h0m0 2h0m0-16h0m0 6h0m0 18h0m0-11h0m1-10h0m0 16h0m0 13h0m0-34h0m0 29h0m0 6h0m0-29h0m0 11h0m1 7h0m0 8h0m0-27h0m0 7h0m0 11h0m1 1h0m0-14h0m0 19h0m0-10h0m1 12h0m0-21h0m0 18h0m0 1h0m1-14h0m0 1h0m0-30h0m1 28h0m0-12h0m0 26h0m0-12h0m1-3h0m0 2h0m0-8h0m0 1h0m0 8h0m0-8h0m1 17h0m0-13h0m0-8h0m0 2h0m0 2h0m1 4h0m0 5h0m0-16h0m0 29h0m0-10h0m0-11h0m0 11h0m1 12h0m0-27h0m0 26h0m0-12h0m1-6h0m0-5h0m0 0h0m0 20h0m1-31h0m0 20h0m0-4h0m1 6h0m0 11h0m1 2h0m0-16h0m0 2h0m0 2h0m0-39h0m1 39h0m0-24h0m0 5h0m0 19h0m1 6h0m0-15h0m0 10h0m0-3h0m0 17h0m0-7h0m1-11h0m0 1h0m0 6h0m0-12h0m0-2h0m0 14h0m1-5h0m0 14h0m1-2h0m0-19h0m0 15h0m0-25h0m0 13h0m1 1h0m0 7h0m0-3h0m0 2h0m0-14h0m2 21h0m0-2h0m0-10h0m1 2h0m0 28h0m0-24h0m0-1h0m0 1h0m1 0h0m1 14h0m0-23h0m0-10h0m0 31h0m0-8h0m1 5h0m0-4h0m0-7h0m0 8h0m0-32h0m1 25h0m0-4h0m0 3h0m0 20h0m0-16h0m0 4h0m0-11h0m1 33h0m1-23h0m0-1h0m1-3h0m0 4h0m0 4h0m0-18h0m0 5h0m0 8h0m0-8h0m1 18h0m0-16h0m0-11h0m0 15h0m0-7h0m0 7h0m1 1h0m0 10h0m0-1h0m0-19h0m1-1h0m0 7h0m0 3h0m0-16h0m0 27h0m0-17h0m0 16h0m0-2h0m1-20h0m0 1h0m0 7h0m0-5h0m0 8h0m0 6h0m0-10h0m1 22h0m0 0h0m1-14h0m0 11h0m0-4h0m0-4h0m1 0h0m0-6h0m0 6h0m0-11h0m0 28h0m0-35h0m1 9h0m0 13h0m0-18h0m0 17h0m0-24h0m0 8h0m0 9h0m1-19h0m0 19h0m0 2h0m1 3h0m0-3h0m0-9h0m0 14h0m0 7h0m0-8h0m0-3h0m0-4h0m1 8h0m0 5h0m0-16h0m0-2h0m0 16h0m0 3h0m1-19h0m0 9h0m0 8h0m0-14h0m1 7h0m0 12h0m0-8h0m0-2h0m0-1h0m0 7h0m1-11h0m0 16h0m0-14h0m0 5h0m1 9h0m0-2h0m0 9h0m0 0h0m1-45h0m0 28h0m0 3h0m0-5h0m0 11h0m0 5h0m1-20h0m0 17h0m0-9h0m1-3h0m0-2h0m0-4h0m0 13h0m0-8h0m1 0h0m0 0h0m0 7h0m0-4h0m1-1h0m0 4h0m0 14h0m0-4h0m0 2h0m0-27h0m0 4h0m0 15h0m0 5h0m0-20h0m0 10h0m0 4h0m0 9h0m1-2h0m0-21h0m0 8h0m1 10h0m0-11h0m0 6h0m0 2h0m0 1h0m1-4h0m0-17h0m0 12h0m0 13h0m1-19h0m0 16h0m1-25h0m0 16h0m0-2h0m0 5h0m0 5h0m1-1h0m0-10h0m0 5h0m1 8h0m0-6h0m0 1h0m0-3h0m0 9h0m0-3h0m1-13h0m0 10h0m0-10h0m0 13h0m1-12h0m0-3h0m0 10h0m1 11h0m0-8h0m1 7h0m0-10h0m1 0h0m0-11h0m0 8h0m0-7h0m0 10h0m1-7h0m0 8h0m0-1h0m1 7h0m1-7h0m0 8h0m0 0h0m0-3h0m1 0h0m0-2h0m1 1h0m0 3h0m0-15h0m0 12h0m0-2h0m0 4h0m0-2h0m1-9h0m0-8h0m0 18h0m0 5h0m0 0h0m1-1h0m0-14h0m0 19h0m0-3h0m0-3h0m1 4h0m0-1h0m0-2h0m0 0h0m1 3h0m0-26h0m0 18h0m0 3h0m0 3h0m0-1h0m0-13h0m1 13h0m0 3h0m0-14h0m0 6h0m1-1h0m0-6h0m0 4h0m0 0h0m0 4h0m1 10h0m0-11h0m0 1h0m0 5h0m1-15h0m0 11h0m0-11h0m0 15h0m1-11h0m0 8h0m1-5h0m0-1h0m0 3h0m1 11h0m0-6h0m1-13h0m0 9h0m0-15h0m0 5h0m1 9h0m0 11h0m0-12h0m1 9h0m0-8h0m0 3h0m1 4h0m0-10h0m1 11h0m0 0h0m0-7h0m1 2h0m0 3h0m0 3h0m0-1h0m1-12h0m0 1h0m0-6h0m0 7h0m1 8h0m0 2h0m0 0h0m1 4h0m0-4h0m0-4h0m0 4h0m0 2h0m1-10h0m0 11h0m1-7h0m0-3h0m0 9h0m0 1h0m1-1h0m0-7h0m0 8h0m0-11h0m1 5h0m0-2h0m1-8h0m0 9h0m0 3h0m0 0h0m1-5h0m0 4h0m0 3h0m1-3h0m0-16h0m1 18h0m0-14h0m0 9h0m1 8h0m0-4h0m1 2h0m0 1h0m1-10h0m0 12h0m0-1h0m1 0h0m0-5h0m0 4h0m1-12h0m0-2h0m2 15h0m1-3h0m1 0h0m1-3h0m0-12h0m2 15h0m1-3h0m0 7h0m0-2h0m2 1h0m0-2h0m0-3h0m1 5h0m0 0h0m0-11h0m1 7h0m0 2h0m1 2h0m2-4h0m0 0h0m1-6h0m5 10h0m1-5h0m2 5h0m6 0h0m2-4h0m5 5h0m15-8h0m2 6h0m10 0h0m69-5h0m1 1h0m0 5h0m1-12h0m8 11h0m7-1h0m0-3h0m5-10h0m0 11h0m0-4h0m0 3h0m1 5h0m1-2h0m3 2h0m1 0h0m1-1h0m0-8h0m1-3h0m0 9h0m1 3h0m0-2h0m3 3h0m1 0h0m1-8h0m0-1h0m1 5h0m2 4h0m0-15h0m1 11h0m0-2h0m0 0h0m1-16h0m0 12h0m1 5h0m1-4h0m0 7h0m0-5h0m1-4h0m0 10h0m1 1h0m0-1h0m0 0h0m2-12h0m1-9h0m0 16h0m0-6h0m2 7h0m1-1h0m0 5h0m1-4h0m2 0h0m0 1h0m0-11h0m0 10h0m1 4h0m0-4h0m1-4h0m0-5h0m0 4h0m0-3h0m0 6h0m0 4h0m1-7h0m1 8h0m0-6h0m0-2h0m1-1h0m0 0h0m0 3h0m1 6h0m0-7h0m0 3h0m1-8h0m0 8h0m0 5h0m1-3h0m0 1h0m1-20h0m0 20h0m1-14h0m0 8h0m0-5h0m1 3h0m1-7h0m0 15h0m0-11h0m1 10h0m0-17h0m0 0h0m0 12h0m0 0h0m0-13h0m0 10h0m1 11h0m0-6h0m0 4h0m0-16h0m1 3h0m0 8h0m0 1h0m0-8h0m0 9h0m1 1h0m0 3h0m0-4h0m0 2h0m0 2h0m1-15h0m0 4h0m0 12h0m1-16h0m0 15h0m0 1h0m0-2h0m1-14h0m0 9h0m0 4h0m0-5h0m1-1h0m0-10h0m0 9h0m0-3h0m0 8h0m1-18h0m0 15h0m1 1h0m0-13h0m1 6h0m0 9h0m0-2h0m0-4h0m0 10h0m1-4h0m0-9h0m0 7h0m0-6h0m1-5h0m1-5h0m0 22h0m0-6h0m0 1h0m0-7h0m0 2h0m0 2h0m0 4h0m1-16h0m1 22h0m1-11h0m0 2h0m1-12h0m1-7h0m0 20h0m0-2h0m0 4h0m0-8h0m0-21h0m1 24h0m0 0h0m0 6h0m1 3h0m0-16h0m0-2h0m1 19h0m0-6h0m0 2h0m0 3h0m0-7h0m0 8h0m0-34h0m1 30h0m0-9h0m0 13h0m1-11h0m0-2h0m0-6h0m1 12h0m0-9h0m0-11h0m0 9h0m1 7h0m0 3h0m0-38h0m0 28h0m0-7h0m0-22h0m0 28h0m1 12h0m0 4h0m0 0h0m1-1h0m0-13h0m0 1h0m1 5h0m0-7h0m0 1h0m0-2h0m1 10h0m0-8h0m0 7h0m0 9h0m1-6h0m0-8h0m0 7h0m0-8h0m0-4h0m0 0h0m0 14h0m0-16h0m0 7h0m0-10h0m1-1h0m0 26h0m0-24h0m0-10h0m0 7h0m0 9h0m0 15h0m0-24h0m1 9h0m0 11h0m0-2h0m0-2h0m0-37h0m0 35h0m0 2h0m0 7h0m0-20h0m1 5h0m0-5h0m1 15h0m0 3h0m0 7h0m0-29h0m0 3h0m0 24h0m1-13h0m0 9h0m0-15h0m0-15h0m1 22h0m0 11h0m0-15h0m0-7h0m0 3h0m0 4h0m0 4h0m0-6h0m1 1h0m0 3h0m0-5h0m1 2h0m0-17h0m0 27h0m1-10h0m0 11h0m0-11h0m1 8h0m0-7h0m0-1h0m0-5h0m0 3h0m0 20h0m0-10h0m0-14h0m0 4h0m1-7h0m0 7h0m0 2h0m0-5h0m0 21h0m0-15h0m0 17h0m0-17h0m0-1h0m1-2h0m0 2h0m0 2h0m0-4h0m0 12h0m0-29h0m1 13h0m0 0h0m0-1h0m0 13h0m0-16h0m0 4h0m1 10h0m0-2h0m0 1h0m0 6h0m1-7h0m0-31h0m0 16h0m0 8h0m0-12h0m0 5h0m0 11h0m1-1h0m0 4h0m0-14h0m0 19h0m1-16h0m0 5h0m0 4h0m0-27h0m0 20h0m1 8h0m0-15h0m0 11h0m1-12h0m0 18h0m0 12h0m0-37h0m1 1h0m0 22h0m0 7h0m0-5h0m0-2h0m1-2h0m0 19h0m0-15h0m0-19h0m0-3h0m0 14h0m0-3h0m1 10h0m0-18h0m0 17h0m0-7h0m1 0h0m0 1h0m0 18h0m0-31h0m0 22h0m1-12h0m0 11h0m0-7h0m0-7h0m0 0h0m0 23h0m0-24h0m1-24h0m0 21h0m0-1h0m0 6h0m0 5h0m0-9h0m0 14h0m0-12h0m1-10h0m0 11h0m0 8h0m0-12h0m0-3h0m1-4h0m0 21h0m0 0h0m0-31h0m0 27h0m0-20h0m0 16h0m1 3h0m0 12h0m0-17h0m0 10h0m1-17h0m0 6h0m0 0h0m1 4h0m0 12h0m0-11h0m0 6h0m0-11h0m0 10h0m0-16h0m1 1h0m0 12h0m0-4h0m0 4h0m0-6h0m1-22h0m0 27h0m0-10h0m0-18h0m0 34h0m0 2h0m0-15h0m0 14h0m1-38h0m0 28h0m0 12h0m0-33h0m0 16h0m0 13h0m1 8h0m0-14h0m0-22h0m0 18h0m0 9h0m1 4h0m0-22h0m0 14h0m0-2h0m0-4h0m0 1h0m1 19h0m0-22h0m0 18h0m1 3h0m0-10h0m1-29h0m0 27h0m0 6h0m0 0h0m0-12h0m1 7h0m0-25h0m0 17h0m0 9h0m0 0h0m1 17h0m0-19h0m0-7h0m0-6h0m0 4h0m0 13h0m0-31h0m0 21h0m0 15h0m0-1h0m0-31h0m1 16h0m0 6h0m0 14h0m0-15h0m0 11h0m1-13h0m0-3h0m0 1h0m0-8h0m0-4h0m0 29h0m0-5h0m0-19h0m0 9h0m0-3h0m1 4h0m0-7h0m0 11h0m0-15h0m0-8h0m0 2h0m0 28h0m1 0h0m0-8h0m1 11h0m0-14h0m0 6h0m1 2h0m1-26h0m0 27h0m0-10h0m0 6h0m0 6h0m1-13h0m0-8h0m0-2h0m0 15h0m0-34h0m0 27h0m1 6h0m0-10h0m0 14h0m1-20h0m0 26h0m0-1h0m0 10h0m0-24h0m1 11h0m1-2h0m0-7h0m0-33h0m0 34h0m0 13h0m0-29h0m1 25h0m0-41h0m0 26h0m0-5h0m0 9h0m1-10h0m0 4h0m0 3h0m0-5h0m0 6h0m1 10h0m0 0h0m0-11h0m0-16h0m0 16h0m1 3h0"/><path transform="scale(0.5)" stroke="#ffa500" stroke-width="7.4" fill="none" stroke-linecap="round" d="M2256 205h0m13-1h0m2-2h0m3 0h0m1 7h0m1-6h0m2 0h0m1 7h0m2 3h0m1-11h0m1 0h0m0 4h0m1-4h0m0 2h0m1 3h0m1 1h0m0-6h0m3 6h0m0 15h0m1-20h0m1 3h0m1-2h0m0-1h0m0 13h0m1-14h0m0 10h0m0-1h0m1 17h0m1-15h0m1-5h0m1 3h0m1-2h0m0 9h0m1-10h0m0 2h0m0 8h0m1 0h0m0-1h0m0-7h0m1-5h0m0-1h0m1 11h0m0-2h0m0-7h0m0 3h0m1-6h0m0 0h0m0-1h0m0 6h0m1-1h0m0 7h0m1-11h0m0 1h0m0 0h0m0-1h0m1 0h0m1 13h0m1-12h0m0 3h0m0 1h0m0-4h0m0 12h0m2-3h0m1-2h0m0 14h0m1-12h0m0 0h0m0 1h0m0-10h0m1 2h0m1-2h0m0 5h0m0 22h0m1-22h0m0 10h0m0-4h0m0 4h0m1-14h0m0 1h0m0 0h0m0 7h0m1-8h0m0 16h0m0 5h0m0-14h0m1 0h0m2-7h0m1 17h0m0-11h0m0-4h0m0 1h0m1 2h0m0 11h0m0-10h0m0 10h0m1-14h0m0-2h0m0 46h0m0-34h0m0-8h0m1-4h0m0 3h0m1 34h0m1-30h0m0-6h0m0 4h0m0 9h0m0-8h0m1-3h0m0-1h0m0-5h0m0 15h0m1-1h0m0-13h0m0 7h0m1-1h0m0 30h0m0-6h0m1-18h0m0-3h0m0 15h0m0-7h0m0-9h0m0 13h0m0 0h0m0-15h0m0 14h0m2-15h0m0 2h0m0 17h0m0-7h0m1-1h0m0-5h0m0-10h0m0 20h0m0-18h0m0 0h0m0-2h0m1 21h0m1 3h0m0-23h0m0 9h0m0 0h0m0 7h0m0 10h0m0-10h0m0-6h0m1-9h0m0 1h0m0 14h0m0-13h0m0 1h0m1 6h0m0-5h0m1 24h0m0-26h0m0 21h0m0-27h0m0 12h0m0 19h0m1-14h0m1-13h0m0 18h0m0 17h0m0-24h0m0-3h0m0 1h0m1-4h0m0-7h0m0-2h0m1 14h0m0 18h0m0-2h0m0-3h0m0-12h0m1-5h0m0 16h0m0-13h0m0-9h0m0 4h0m1 1h0m0-7h0m0 22h0m1-8h0m0 18h0m0-9h0m0 0h0m0-5h0m1 16h0m0-19h0m0-3h0m0 16h0m1-8h0m0-15h0m0 1h0m0 19h0m1-5h0m0-4h0m0-9h0m1-3h0m0 16h0m0-1h0m0-8h0m1 10h0m0-11h0m0 22h0m0-8h0m1-11h0m0 15h0m0-24h0m1 9h0m0 2h0m0-2h0m0 7h0m1 7h0m0-19h0m0-1h0m0 20h0m1-7h0m0-22h0m0 9h0m0-7h0m0 18h0m1-4h0m0 16h0m0 14h0m0-39h0m0 25h0m1-14h0m0 11h0m0-10h0m0 7h0m1-8h0m0 8h0m0-7h0m0 33h0m0-39h0m1 16h0m0-22h0m0 28h0m0-31h0m0 48h0m0-23h0m1-21h0m0 5h0m0 13h0m0-16h0m0 21h0m1-22h0m0-6h0m0-1h0m0 31h0m0-29h0m0 1h0m0 11h0m1 0h0m0-2h0m0 11h0m0-2h0m0-10h0m1-3h0m0 9h0m0 24h0m0-30h0m1 34h0m0-40h0m0 5h0m0 21h0m0-23h0m0 1h0m0 15h0m0 14h0m1-32h0m0 10h0m0 8h0m0-15h0m1 19h0m0-21h0m0-6h0m0 26h0m0-1h0m0-16h0m1 7h0m0 26h0m0-37h0m0 19h0m0-19h0m0 31h0m0-23h0m0-1h0m0-1h0m1 18h0m0 9h0m1-28h0m0-4h0m0 9h0m0-3h0m1 15h0m0 5h0m0-28h0m1-3h0m0-4h0m0 16h0m0 16h0m0 25h0m0-41h0m0-8h0m0 5h0m0 0h0m1 22h0m0-28h0m0-2h0m1 1h0m0-3h0m0 42h0m0-6h0m1-1h0m0-28h0m0 9h0m0 15h0m1-2h0m0-18h0m0 29h0m0-28h0m0 0h0m0 4h0m0 26h0m1-40h0m1 13h0m1 3h0m0 8h0m0-12h0m0 13h0m1-4h0m0 1h0m0-19h0m0 4h0m0 25h0m0-17h0m0 7h0m0-9h0m1-3h0m0 8h0m0-16h0m0 0h0m0 27h0m1-14h0m0 15h0m0 7h0m0-2h0m0-3h0m0-2h0m0-19h0m0 1h0m1 14h0m1 4h0m0-16h0m1-3h0m0-9h0m0 12h0m0-3h0m0 27h0m0-17h0m1-10h0m0 16h0m0 1h0m0-22h0m0 11h0m0-11h0m1 8h0m0 12h0m0-7h0m1 1h0m0-13h0m0 13h0m0-2h0m0 16h0m0-1h0m0-13h0m1 0h0m1-9h0m0 1h0m0 3h0m1 17h0m0-20h0m0 27h0m1-23h0m0-4h0m0-9h0m0 21h0m0-8h0m0 2h0m0 21h0m1-31h0m0 16h0m0-13h0m0 24h0m1-22h0m0-2h0m0 7h0m0-22h0m0 19h0m0-6h0m0 37h0m1-37h0m0 32h0m0-7h0m0-4h0m0-5h0m0-26h0m0 22h0m0-4h0m0 10h0m0-7h0m1 23h0m0-28h0m0 0h0m0 25h0m0 8h0m0-18h0m0-12h0m0 15h0m1 11h0m0-29h0m0 28h0m0-32h0m0-4h0m0 40h0m1-34h0m0 0h0m0 0h0m1-9h0m0-3h0m0 14h0m0 0h0m0 3h0m0 3h0m1-16h0m0 3h0m0 7h0m0-15h0m0 1h0m1 2h0m0 12h0m0-2h0m0-16h0m1 5h0m0 7h0m0 14h0m1-4h0m0-4h0m0 2h0m1-12h0m0 2h0m0 34h0m1-27h0m0-4h0m0 20h0m1 6h0m0-19h0m0 1h0m0-17h0m0 15h0m0-10h0m1-5h0m0 2h0m0 20h0m0-8h0m0 7h0m0 6h0m1-22h0m0 29h0m0-2h0m0-1h0m0-15h0m0 2h0m0-7h0m0-1h0m1 51h0m0-29h0m0-14h0m0-8h0m0-1h0m0 25h0m0-10h0m1 16h0m0-30h0m0 9h0m1-7h0m0 6h0m0 12h0m0 10h0m0-41h0m0 42h0m0-5h0m0-32h0m1 29h0m0-21h0m0-9h0m0 0h0m0 6h0m0 4h0m0-9h0m0 9h0m1-3h0m0 9h0m1 2h0m0 14h0m0-34h0m1 13h0m0-18h0m1 42h0m0 0h0m0-17h0m0 8h0m0-10h0m0 6h0m1-2h0m0-7h0m0-16h0m0 9h0m0 19h0m1-11h0m0 2h0m0-20h0m1 46h0m0-18h0m0-15h0m0 13h0m1-20h0m0 21h0m0-10h0m0-10h0m0-9h0m0 5h0m0 19h0m0-17h0m1 24h0m0-8h0m1-17h0m0 31h0m0-32h0m0 29h0m1-24h0m0 7h0m1-5h0m0 2h0m0 23h0m0-19h0m0-8h0m0 11h0m0-11h0m0 27h0m1-9h0m0-24h0m0 12h0m0 1h0m1-2h0m0-10h0m1 22h0m0-18h0m0 9h0m0 0h0m0 13h0m0-28h0m0 11h0m0 10h0m1-4h0m0 7h0m0-19h0m0 29h0m1-12h0m0-5h0m0-4h0m0 13h0m0 1h0m0-21h0m1-8h0m0 29h0m1-7h0m0 1h0m0 4h0m1-18h0m0 41h0m0-13h0m0-14h0m0-8h0m0-2h0m0-2h0m0 0h0m0 10h0m1-2h0m0-7h0m0-7h0m0 1h0m0 14h0m0 3h0m0-20h0m0 6h0m1-8h0m0 15h0m0 4h0m1-10h0m0 27h0m0-29h0m0 14h0m0 1h0m1-7h0m0 16h0m0-8h0m0-23h0m0 31h0m1-18h0m1 15h0m0-25h0m0-7h0m0 46h0m0-31h0m1 1h0m0-6h0m0-2h0m0 6h0m1-3h0m0 16h0m0-28h0m0 12h0m0 21h0m0-11h0m0-2h0m0 15h0m1-7h0m0 3h0m0-22h0m0-8h0m0 15h0m0-12h0m1 29h0m0-15h0m0 6h0m1-13h0m0 17h0m0-8h0m0 1h0m0 4h0m0 9h0m1-22h0m0 21h0m0-16h0m0 21h0m1 1h0m0-5h0m0-2h0m0-22h0m0 21h0m1-4h0m0 1h0m0-12h0m0-6h0m0 18h0m0-5h0m0-16h0m0-2h0m0 13h0m1 2h0m0 30h0m0-23h0m0-21h0m0 19h0m0 20h0m1-22h0m0 4h0m0-15h0m0 8h0m0-3h0m0-14h0m0 21h0m0 5h0m1-11h0m0-3h0m0 19h0m0-22h0m0 28h0m0-8h0m1-19h0m0-8h0m0 17h0m0-13h0m0 12h0m0 10h0m0-7h0m1-12h0m0 1h0m0-11h0m0 12h0m0-9h0m0-2h0m1 29h0m1 1h0m0-12h0m0-14h0m0-3h0m1 22h0m0-3h0m0 7h0m1-5h0m0-7h0m0 14h0m0-3h0m0 11h0m1-32h0m0 9h0m0 12h0m0 5h0m1 0h0m0-28h0m0 15h0m1 2h0m0-4h0m0 8h0m1 12h0m0-15h0m0 10h0m0-16h0m1 3h0m0 1h0m0-11h0m0 23h0m0-29h0m1 3h0m0-1h0m0 18h0m0-9h0m0-12h0m0 8h0m0 24h0m0-25h0m1 10h0m0-2h0m0-2h0m0 18h0m0-9h0m0 4h0m0-3h0m1-16h0m0-4h0m0 4h0m0-3h0m0 9h0m1 2h0m0 7h0m0-19h0m1 8h0m0-4h0m0 2h0m0 13h0m0-7h0m1 10h0m0-6h0m0-15h0m0 9h0m1 27h0m0-17h0m0-14h0m0 1h0m0 7h0m0-12h0m0 8h0m1-3h0m0-7h0m0 1h0m0 27h0m0-17h0m1-17h0m0 11h0m0-10h0m0 17h0m0-13h0m0 8h0m1 2h0m0-4h0m0-9h0m0 19h0m0-7h0m0 6h0m1-4h0m0-3h0m0 2h0m0-3h0m0-12h0m0 24h0m0 15h0m1-11h0m1-10h0m0-15h0m1 10h0m0 5h0m0 5h0m0 10h0m1-34h0m0 14h0m0 20h0m0-27h0m0-4h0m0 8h0m1-3h0m0 22h0m0-23h0m0 8h0m0 3h0m1 4h0m0-12h0m0 5h0m0-4h0m0 2h0m0-1h0m0-10h0m1 29h0m0-20h0m0 18h0m0-2h0m0-14h0m1-11h0m0 6h0m0 12h0m0-9h0m0-4h0m0-2h0m1 10h0m1 18h0m0-12h0m0-17h0m0 6h0m0-7h0m0 0h0m1 16h0m0-14h0m0 15h0m0-1h0m1-5h0m0-6h0m0 3h0m0-1h0m0 1h0m1-5h0m0 2h0m0-3h0m0 7h0m0 7h0m0 4h0m0-7h0m0 4h0m0-19h0m0-1h0m1 1h0m0 0h0m0 20h0m0-11h0m0 1h0m1 26h0m0-18h0m0-7h0m1 6h0m1-11h0m0 3h0m0-2h0m1 31h0m0-32h0m0 20h0m1-26h0m0 17h0m0 10h0m0-26h0m1 14h0m0-3h0m0 0h0m0-7h0m0 3h0m0 6h0m0-5h0m1-9h0m0 12h0m0 2h0m0-1h0m0 8h0m0 1h0m1-16h0m0-4h0m0 27h0m0-28h0m0 17h0m1-6h0m0 8h0m0 4h0m0-4h0m0-17h0m1 15h0m0-10h0m1 0h0m0-7h0m0 16h0m1-16h0m0 0h0m1 7h0m1-5h0m0 5h0m0-7h0m1 10h0m0-10h0m1-2h0m0 5h0m0-5h0m0 6h0m1 2h0m0 26h0m1-11h0m0-20h0m0 5h0m1 3h0m0-4h0m0 13h0m0-11h0m1 3h0m1 6h0m0-4h0m1-8h0m1 5h0m0 1h0m0-8h0m1-2h0m0-1h0m0 21h0m0-17h0m1-3h0m0 9h0m0 3h0m0-1h0m0-4h0m1-9h0m0 2h0m1-2h0m1 5h0m0-4h0m0 7h0m1-8h0m0 21h0m0-18h0m1-1h0m0 21h0m0-23h0m0 13h0m0-11h0m0 2h0m1 6h0m0-1h0m1-1h0m0-4h0m1 6h0m1 2h0m0 1h0m0 4h0m1-17h0m0 10h0m0-3h0m0 7h0m0-13h0m0 3h0m1 0h0m0 10h0m0-7h0m0-5h0m0-1h0m0 4h0m2-2h0m0 1h0m1-3h0m1 13h0m0-5h0m1-2h0m0-5h0m1 12h0m0-8h0m1-1h0m1 1h0m0-6h0m0 7h0m0 9h0m0-11h0m1 3h0m0-8h0m2 13h0m0 2h0m0-8h0m0-4h0m2 3h0m0 2h0m2 7h0m0-8h0m0-3h0m0 9h0m0-12h0m1 5h0m0-1h0m1 4h0m1-6h0m4-2h0m1 14h0m1-11h0m1 6h0m1-9h0m3 15h0m1-8h0m0-2h0m1-1h0m0 5h0m1-3h0m4-2h0m2-4h0m0 6h0m2-5h0m5-1h0m18-1h0m-1894-79h0m62-2h0m174 5h0m114 0h0m44-4h0m27 0h0m259 2h0m10 1h0m272-4h0m271 4h0m-1579 101h0m68-15h0m660 8h0m37 0h0m195 3h0m168-3h0m248-10h0m372 12h0m112-7h0m354 2h0m-2074 59h0m115 20h0m34-6h0m155 24h0m209-26h0m66 306h0m374-272h0m270-72h0m17 160h0m71-147h0m216 43h0m58 99h0m57-153h0m98 176h0m99-163h0m210-20h0"/><line x1="105.5" y1="134.0" x2="1361.3" y2="134.0" stroke="#008000" stroke-width="2.08"/><line x1="162.0" y1="321.0" x2="162.0" y2="35.5" stroke="#800080" stroke-width="2" stroke-dasharray="2.08 3.44"/><line x1="1303.0" y1="321.0" x2="1303.0" y2="35.5" stroke="#800080" stroke-width="2" stroke-dasharray="2.08 3.44"/><text x="732.20" y="312.00" font-size="13.89" text-anchor="middle" textLength="44.19" lengthAdjust="spacingAndGlyphs">60166</text></g><rect x="105.5" y="35.5" width="1380.0" height="286.0" fill="none" stroke="#000" stroke-width="1.11"/><line x1="162.5" y1="321.5" x2="162.5" y2="326.36" stroke="#000" stroke-width="1.11"/><text x="163.40" y="342.10" font-size="13.89" text-anchor="middle" textLength="8.84" lengthAdjust="spacingAndGlyphs">0</text><line x1="384.1" y1="321.5" x2="384.1" y2="326.36" stroke="#000" stroke-width="1.11"/><text x="385.00" y="342.10" font-size="13.89" text-anchor="middle" textLength="35.35" lengthAdjust="spacingAndGlyphs">2000</text><line x1="605.7" y1="321.5" x2="605.7" y2="326.36" stroke="#000" stroke-width="1.11"/><text x="606.60" y="342.10" font-size="13.89" text-anchor="middle" textLength="35.35" lengthAdjust="spacingAndGlyphs">4000</text><line x1="827.3" y1="321.5" x2="827.3" y2="326.36" stroke="#000" stroke-width="1.11"/><text x="828.20" y="342.10" font-size="13.89" text-anchor="middle" textLength="35.35" lengthAdjust="spacingAndGlyphs">6000</text><line x1="1048.9" y1="321.5" x2="1048.9" y2="326.36" stroke="#000" stroke-width="1.11"/><text x="1049.80" y="342.10" font-size="13.89" text-anchor="middle" textLength="35.35" lengthAdjust="spacingAndGlyphs">8000</text><line x1="1270.5" y1="321.5" x2="1270.5" y2="326.36" stroke="#000" stroke-width="1.11"/><text x="1271.40" y="342.10" font-size="13.89" text-anchor="middle" textLength="44.19" lengthAdjust="spacingAndGlyphs">10000</text><line x1="100.64" y1="305.5" x2="105.5" y2="305.5" stroke="#000" stroke-width="1.11"/><text x="95.50" y="310.70" font-size="13.89" text-anchor="end" textLength="30.93" lengthAdjust="spacingAndGlyphs">8.00</text><line x1="100.64" y1="263.7" x2="105.5" y2="263.7" stroke="#000" stroke-width="1.11"/><text x="95.50" y="268.87" font-size="13.89" text-anchor="end" textLength="30.93" lengthAdjust="spacingAndGlyphs">8.05</text><line x1="100.64" y1="221.8" x2="105.5" y2="221.8" stroke="#000" stroke-width="1.11"/><text x="95.50" y="227.03" font-size="13.89" text-anchor="end" textLength="30.93" lengthAdjust="spacingAndGlyphs">8.10</text><line x1="100.64" y1="180.0" x2="105.5" y2="180.0" stroke="#000" stroke-width="1.11"/><text x="95.50" y="185.20" font-size="13.89" text-anchor="end" textLength="30.93" lengthAdjust="spacingAndGlyphs">8.15</text><line x1="100.64" y1="138.2" x2="105.5" y2="138.2" stroke="#000" stroke-width="1.11"/><text x="95.50" y="143.37" font-size="13.89" text-anchor="end" textLength="30.93" lengthAdjust="spacingAndGlyphs">8.20</text><line x1="100.64" y1="96.3" x2="105.5" y2="96.3" stroke="#000" stroke-width="1.11"/><text x="95.50" y="101.53" font-size="13.89" text-anchor="end" textLength="30.93" lengthAdjust="spacingAndGlyphs">8.25</text><line x1="100.64" y1="54.5" x2="105.5" y2="54.5" stroke="#000" stroke-width="1.11"/><text x="95.50" y="59.70" font-size="13.89" text-anchor="end" textLength="30.93" lengthAdjust="spacingAndGlyphs">8.30</text><rect x="1361.4" y="42.5" width="117.3" height="26.9" rx="2.8" fill="#fff" fill-opacity="0.8" stroke="#cccccc" stroke-width="1.11"/><line x1="1365.9" y1="54" x2="1395.9" y2="54" stroke="#008000" stroke-width="2.08"/><text x="1407.70" y="58.80" font-size="13.89" text-anchor="start" textLength="30.86" lengthAdjust="spacingAndGlyphs">mag</text><text x="1436.80" y="60.80" font-size="10.8" text-anchor="start" textLength="33.79" lengthAdjust="spacingAndGlyphs" font-style="italic">AGASC</text><rect x="1348.5" y="247.5" width="130.0" height="67.0" rx="2.8" fill="#fff" fill-opacity="0.8" stroke="#cccccc" stroke-width="1.11"/><circle cx="1367.5" cy="260.5" r="1.9" fill="#ff0000"/><text x="1392.50" y="265.40" font-size="13.89" text-anchor="start" textLength="47.20" lengthAdjust="spacingAndGlyphs">not OK</text><circle cx="1367.5" cy="281.5" r="1.9" fill="#ffa500"/><text x="1392.50" y="286.40" font-size="13.89" text-anchor="start" textLength="80.07" lengthAdjust="spacingAndGlyphs">Highlighted</text><circle cx="1367.5" cy="302.5" r="1.9" fill="#000"/><text x="1392.50" y="307.40" font-size="13.89" text-anchor="start" textLength="20.04" lengthAdjust="spacingAndGlyphs">OK</text><text x="795.50" y="372.00" font-size="16.67" text-anchor="middle" textLength="175.93" lengthAdjust="spacingAndGlyphs">Magnitude Estimates</text><g clip-path="url(#c2)"><path transform="scale(0.5)" stroke="#000" stroke-width="7.6" fill="none" stroke-linecap="round" d="M325 949h0m0 116h0m0-14h0m1-9h0m0 84h0m0-99h0m0 52h0m0-97h0m0 92h0m0-15h0m0-12h0m1 56h0m1-72h0m0 25h0m0-38h0m0 50h0m0 34h0m0-29h0m0-2h0m1-25h0m0-47h0m0 87h0m0-68h0m0 22h0m0 23h0m0 35h0m0-46h0m1 30h0m0-65h0m0 49h0m0-74h0m0 83h0m0 20h0m0-28h0m0 39h0m1-48h0m0-21h0m0 12h0m1 11h0m0-8h0m0-76h0m0 135h0m0-42h0m0-32h0m1 22h0m0-39h0m0 32h0m0 16h0m0-17h0m1-14h0m1-87h0m0 89h0m0-8h0m0 44h0m1-24h0m0 0h0m0 1h0m0 4h0m0-3h0m0 48h0m0-49h0m1 28h0m0-85h0m0 65h0m0-47h0m0-8h0m1 81h0m0-33h0m0 2h0m0 76h0m0-131h0m0 92h0m1-36h0m0-34h0m2-5h0m0 40h0m0 32h0m1-2h0m0-66h0m1-25h0m1 53h0m0 25h0m1 7h0m0-50h0m0 14h0m1 24h0m0-30h0m0 19h0m0-16h0m1 53h0m0-70h0m0 48h0m1-18h0m0 3h0m0 7h0m0-8h0m1 14h0m0-129h0m0 126h0m0 25h0m1-166h0m0 160h0m0-122h0m0 128h0m0-45h0m0 36h0m0 3h0m1-58h0m0 16h0m1 7h0m0-97h0m0 90h0m0 37h0m0-30h0m0-19h0m1-80h0m1 79h0m0 30h0m0-87h0m0 121h0m0-66h0m0 54h0m1-25h0m0-121h0m0 163h0m1 0h0m0 13h0m1-39h0m0-57h0m1-30h0m0 24h0m0 76h0m0-154h0m0 32h0m0 21h0m0 19h0m0 69h0m1-146h0m0-15h0m0 78h0m1 17h0m0 63h0m0-36h0m0 7h0m0 38h0m1 10h0m0-9h0m0-25h0m0-32h0m0 30h0m0 8h0m0 8h0m1-50h0m0-14h0m0 48h0m1 15h0m0-73h0m0 64h0m0-38h0m0 5h0m0 59h0m1-21h0m0 10h0m0-35h0m0 57h0m0 21h0m1-58h0m0-19h0m0-3h0m0 28h0m0-23h0m0 17h0m1 38h0m0 1h0m1-54h0m0 27h0m0-141h0m0 122h0m0-28h0m1 18h0m0-80h0m0 100h0m0-77h0m0 77h0m1-7h0m0-119h0m0 84h0m0 22h0m0-11h0m0 66h0m1-125h0m0 113h0m0-75h0m0 58h0m0-81h0m0 60h0m1 33h0m0-59h0m0-17h0m1-20h0m0 74h0m0-38h0m1 21h0m0 54h0m0 34h0m0-49h0m0-44h0m0 21h0m1-123h0m0 94h0m0 26h0m0 15h0m1-49h0m0 64h0m0 44h0m1-123h0m1 71h0m0-59h0m0 12h0m0-74h0m1 55h0m0 7h0m0 24h0m0-127h0m1 156h0m0-37h0m0 26h0m0 15h0m1-35h0m0-14h0m0 65h0m0-54h0m0-10h0m1 45h0m0-71h0m0 86h0m0-51h0m0 26h0m1-57h0m0 40h0m1 71h0m0-110h0m0 16h0m0 63h0m0-18h0m0-79h0m0 9h0m1 9h0m0 37h0m0 75h0m0-74h0m0 4h0m1 14h0m0-22h0m0 31h0m0-40h0m0-99h0m0 86h0m1 14h0m0 25h0m0 17h0m0-4h0m1-57h0m0 69h0m0-124h0m0 8h0m0 109h0m1-10h0m0-57h0m1 9h0m0 60h0m1-19h0m0 13h0m0-83h0m1 56h0m0-54h0m1 22h0m0-14h0m0 104h0m0-54h0m1-27h0m0 35h0m0-40h0m1 76h0m0-116h0m0 39h0m1 45h0m0-69h0m1 37h0m0 7h0m0 18h0m0 5h0m0 7h0m1-1h0m0-32h0m0 42h0m0-16h0m0-58h0m0 69h0m1-52h0m0 65h0m0 0h0m0-34h0m0-4h0m0 18h0m0 27h0m1-7h0m0 27h0m1-50h0m0-40h0m0 99h0m0-117h0m0 65h0m1 5h0m0 11h0m0 21h0m0-59h0m0 31h0m0 11h0m1-26h0m0-47h0m0 67h0m0-10h0m0-39h0m0-97h0m0 103h0m1 20h0m0 8h0m0 52h0m0-91h0m1-26h0m0 21h0m0 27h0m0 7h0m0 37h0m1-65h0m0-9h0m1 31h0m0-103h0m0 102h0m0 8h0m0 10h0m0 48h0m0-82h0m1 9h0m0-15h0m0 1h0m1 66h0m0-15h0m0 4h0m0-30h0m1 1h0m0-11h0m0-27h0m0 58h0m0-81h0m1 105h0m0-38h0m0-24h0m0-5h0m0-70h0m1 68h0m0 7h0m1-25h0m0 52h0m0 7h0m0-99h0m0 20h0m1 80h0m0-21h0m0-27h0m0 79h0m0-51h0m0-36h0m1 43h0m0-48h0m0 29h0m0 12h0m0 71h0m1-142h0m0 102h0m0-98h0m0 63h0m0 41h0m0-40h0m0 26h0m1-77h0m0 20h0m0 69h0m0 5h0m1-30h0m0-114h0m0 158h0m0-59h0m0-9h0m1-26h0m0 81h0m0-79h0m1 9h0m0 51h0m0-17h0m0 90h0m1-140h0m0 55h0m0-107h0m1 64h0m0 119h0m1-140h0m0 64h0m0-5h0m1 54h0m0-68h0m0-5h0m1-45h0m0 65h0m0 33h0m0 61h0m0-99h0m0-66h0m1 84h0m0-13h0m0 3h0m0-2h0m1-64h0m0 52h0m0-28h0m0 50h0m1-29h0m1 27h0m1-58h0m0 19h0m0 10h0m0-18h0m0 2h0m0-68h0m1 72h0m0-113h0m0 140h0m0-21h0m1 23h0m0-2h0m0-12h0m0 47h0m1-61h0m0-2h0m0 26h0m1-18h0m0 48h0m0 3h0m0-165h0m0 135h0m0-2h0m0 28h0m1-60h0m0 1h0m1-95h0m0 171h0m0-122h0m0 25h0m1 110h0m0-88h0m1 61h0m0-30h0m0 9h0m1-95h0m0 117h0m0-87h0m1 59h0m0 48h0m0-110h0m0 39h0m0 4h0m0-9h0m1 38h0m0-17h0m0-19h0m0 58h0m0-16h0m1 10h0m1-14h0m0-16h0m0 21h0m0-38h0m0 19h0m1-24h0m0-5h0m0-25h0m0 79h0m0-63h0m0 39h0m0 32h0m0 1h0m0-148h0m1 76h0m0 77h0m1-59h0m0 93h0m0-86h0m0-39h0m0-32h0m0 115h0m1 1h0m1-17h0m0-53h0m0 31h0m0-20h0m0 15h0m0 51h0m0-37h0m1 22h0m0-3h0m0-25h0m1-81h0m0-18h0m0 70h0m1 56h0m0-65h0m0 45h0m0-60h0m0 20h0m0-39h0m0 55h0m1-9h0m0-10h0m0 37h0m0-15h0m0-12h0m0 29h0m1 35h0m0-14h0m0 15h0m0-78h0m0 47h0m0-3h0m0 18h0m1-11h0m0 32h0m1-40h0m0-54h0m0 29h0m0 37h0m0-23h0m0-21h0m0 20h0m1 11h0m0-52h0m0 74h0m1-16h0m0-59h0m0-18h0m1 97h0m1-133h0m0 104h0m0-25h0m0 13h0m1 25h0m0 8h0m0-4h0m0-45h0m0-35h0m0 88h0m2-14h0m0-19h0m1 51h0m0-136h0m0 64h0m0-42h0m1-4h0m0 92h0m0-11h0m0-30h0m0 19h0m0-28h0m1-41h0m0 134h0m1-28h0m0 27h0m0-58h0m1-48h0m0 34h0m0-84h0m0 167h0m1-63h0m0 22h0m0-1h0m0-100h0m0 71h0m1 23h0m0-94h0m0 126h0m0-112h0m1 97h0m1 29h0m0-43h0m0-25h0m0 49h0m0-37h0m0-82h0m0 38h0m0 80h0m0-77h0m1-18h0m0-20h0m1 67h0m0 29h0m0-15h0m0-44h0m0 19h0m0-7h0m1 27h0m0-7h0m0 47h0m0-39h0m0 0h0m1-14h0m0 18h0m0 7h0m0-91h0m0 81h0m1-29h0m0 12h0m0 15h0m1-55h0m0 52h0m0-99h0m0 68h0m0-22h0m0 64h0m0-38h0m0 32h0m1 11h0m0-55h0m0 32h0m1-39h0m0 15h0m0 21h0m0 60h0m0-32h0m0-66h0m0 8h0m0 124h0m0-97h0m1 58h0m0-33h0m0 20h0m0-60h0m0 21h0m0-12h0m0-21h0m0 9h0m0 105h0m0-62h0m1 10h0m0-22h0m0-20h0m0 45h0m0-47h0m1 18h0m0-43h0m1-18h0m0 98h0m0-153h0m0 92h0m0 26h0m1 49h0m0-48h0m0 18h0m0-58h0m1 10h0m0 27h0m0 47h0m0 34h0m0-45h0m1-43h0m0 46h0m1-55h0m0 19h0m0-17h0m1 45h0m0 4h0m0-59h0m0 54h0m0 0h0m0-3h0m0-63h0m0 105h0m1-98h0m0 8h0m0-24h0m0-10h0m1-13h0m0 51h0m1 54h0m0 18h0m1-47h0m1-14h0m1 5h0m0-28h0m0 40h0m0-104h0m0 103h0m0-1h0m1-20h0m0 46h0m0-65h0m0 11h0m0-17h0m1 66h0m0-16h0m0 38h0m1-12h0m0-70h0m0 57h0m0-28h0m1-4h0m0 15h0m0 0h0m1 35h0m0-122h0m0 62h0m0-111h0m0 110h0m0 7h0m1-30h0m0 64h0m0-12h0m0-5h0m0-139h0m1 149h0m0 13h0m0-94h0m0 19h0m0 14h0m0 73h0m0-23h0m1-15h0m1 1h0m0 55h0m0-62h0m0-36h0m0 28h0m0 26h0m0-56h0m1 83h0m0-30h0m1-8h0m0-45h0m0 103h0m0-66h0m0-40h0m1 44h0m0-10h0m0 17h0m0-19h0m0 26h0m1-27h0m0-118h0m0 144h0m1 11h0m0 3h0m0-67h0m1 25h0m0-9h0m0 24h0m1 40h0m0-55h0m0-67h0m0 46h0m0 52h0m0-5h0m0-35h0m1 2h0m0 7h0m0-88h0m0 122h0m1-11h0m1-14h0m0 31h0m0-34h0m0-74h0m0 80h0m0-78h0m1 61h0m0 7h0m0-12h0m0 84h0m0-53h0m0-77h0m1 105h0m0-78h0m0 36h0m1-26h0m0 68h0m0-26h0m0 14h0m0-65h0m1 19h0m0-46h0m0 150h0m1-172h0m0 133h0m0-87h0m0 69h0m1-20h0m0 9h0m1 37h0m0-57h0m0 55h0m1-53h0m0 66h0m0-93h0m0 8h0m0-57h0m0 97h0m1-77h0m1 77h0m0-96h0m0 33h0m0 15h0m1 88h0m0-64h0m0 0h0m0 42h0m0 8h0m1-48h0m0-7h0m0 103h0m0-83h0m0 21h0m0 17h0m1-72h0m0 18h0m0-60h0m1 97h0m0 13h0m1-118h0m0-46h0m0 50h0m0 113h0m1-159h0m0 103h0m0 5h0m0 65h0m0-52h0m0 71h0m0-85h0m0 10h0m0 70h0m1-54h0m1-16h0m0-17h0m1 13h0m0 70h0m0-33h0m1-38h0m1 12h0m0 1h0m0-90h0m0 111h0m0 6h0m1-41h0m0-42h0m0 49h0m0 21h0m0-67h0m0 49h0m1 19h0m1-131h0m0 121h0m0-88h0m0 63h0m1-4h0m0 70h0m0-71h0m0 28h0m1-9h0m0 38h0m1-45h0m0-11h0m1 15h0m1-100h0m0 106h0m0-82h0m0 71h0m0-16h0m1 37h0m1-20h0m0-6h0m0-39h0m0 21h0m1 36h0m0 29h0m0-52h0m0 58h0m0 0h0m0 29h0m1-104h0m0 4h0m0 74h0m0-39h0m0-43h0m0-6h0m1 3h0m0 78h0m0-40h0m0-115h0m1 102h0m0 23h0m0 11h0m0 27h0m1-35h0m0-84h0m0 103h0m1-52h0m0 27h0m0-102h0m0 119h0m1-62h0m0 0h0m0 40h0m0-1h0m1 14h0m1-23h0m0 9h0m0-29h0m0-101h0m0 108h0m1 36h0m0-54h0m0 9h0m0 46h0m0-7h0m0 17h0m1-69h0m0 61h0m0-6h0m0 7h0m0 35h0m1-41h0m0-54h0m0 52h0m0-22h0m0-9h0m0-7h0m1 66h0m0 56h0m0-81h0m0 7h0m0-33h0m0 2h0m0 32h0m1-78h0m0 40h0m0 51h0m0 48h0m1-81h0m0 7h0m0 21h0m0-60h0m1 48h0m1-24h0m0 19h0m0-9h0m1 10h0m0-29h0m0-10h0m0 15h0m0 39h0m0-1h0m1-38h0m0-63h0m1 144h0m0-49h0m0-37h0m1-11h0m0 38h0m1 30h0m0-39h0m0-11h0m0 26h0m0-32h0m1-7h0m0 3h0m0 25h0m0-15h0m0-10h0m1 60h0m0-150h0m0 69h0m0 44h0m0 27h0m0-10h0m1-7h0m0-17h0m1 11h0m0 41h0m0-49h0m0-18h0m0-49h0m0 84h0m1 42h0m0-18h0m0-75h0m0 39h0m1 41h0m0-77h0m0 26h0m1-79h0m0 133h0m0 14h0m0-76h0m1 8h0m0-83h0m0 75h0m0-9h0m0 81h0m0-28h0m1-37h0m0 26h0m0-40h0m0 46h0m0-28h0m0-21h0m0 17h0m1 64h0m0-31h0m0 22h0m0-118h0m0 47h0m0 35h0m1-86h0m0 44h0m0 23h0m0 34h0m0 7h0m0-118h0m0 111h0m0-63h0m1 12h0m0 0h0m0 27h0m0 37h0m0-72h0m0-12h0m0-26h0m0 52h0m1 39h0m0 2h0m0 29h0m1-81h0m0-22h0m0 87h0m0-68h0m0 3h0m0-25h0m0 25h0m1-59h0m0 142h0m0-25h0m1-40h0m0-32h0m0 33h0m0 20h0m0-20h0m0 29h0m0 45h0m0-37h0m0-20h0m1-29h0m0 1h0m0 25h0m0-81h0m1 65h0m0-32h0m0 95h0m0-25h0m0-35h0m1 31h0m0-22h0m0 21h0m0-68h0m1 66h0m0-56h0m0 67h0m1-45h0m0-103h0m0 116h0m1 63h0m0-106h0m0 30h0m0 51h0m0-14h0m1-70h0m0 82h0m1-48h0m0 64h0m0-52h0m0-17h0m1 42h0m0-19h0m0-8h0m0-37h0m1-25h0m0 68h0m0-2h0m0 22h0m0 1h0m1 2h0m0 4h0m0-48h0m0-43h0m0 101h0m1 0h0m0-23h0m0-20h0m1-83h0m0 132h0m0-137h0m0 71h0m1 67h0m0-121h0m0 150h0m0-146h0m1-1h0m0-23h0m0 100h0m1 20h0m0-38h0m0 54h0m1-44h0m0-75h0m0 73h0m0-47h0m1 66h0m0 26h0m0-42h0m0 38h0m0-54h0m0 21h0m0 1h0m0-50h0m0 109h0m0-31h0m0-17h0m0 65h0m0-51h0m1-44h0m1 48h0m0-52h0m0 24h0m0-46h0m0 77h0m1-38h0m0 104h0m0-62h0m1-32h0m0 19h0m0 3h0m0-46h0m0-29h0m0 14h0m0 45h0m1-12h0m0 12h0m0 45h0m0-57h0m0 29h0m1-50h0m0-5h0m0 37h0m1 34h0m0-39h0m0 7h0m0-13h0m0 16h0m1-95h0m0 81h0m0 39h0m0-78h0m0 40h0m0 89h0m0-150h0m0 117h0m0-61h0m0-41h0m1 64h0m0-6h0m0-79h0m0 54h0m0 3h0m1 24h0m0-7h0m1 63h0m0-48h0m0-9h0m0-26h0m0 5h0m0 59h0m1-143h0m0 173h0m0-66h0m0-57h0m1-17h0m0 94h0m0-89h0m0 70h0m0 35h0m1-11h0m0-22h0m0-35h0m0 47h0m0 3h0m1 24h0m0-44h0m0-85h0m0 21h0m1 11h0m0 152h0m0-148h0m1 39h0m0-52h0m0 56h0m1 25h0m0-45h0m0 8h0m0 23h0m0-19h0m1-54h0m0 54h0m0-15h0m0-26h0m0 79h0m0 6h0m0-3h0m1-104h0m0 120h0m0-101h0m1 83h0m0-115h0m0 132h0m0-4h0m0-24h0m0 20h0m0-62h0m1-6h0m0-2h0m1-23h0m0 13h0m0 38h0m0-20h0m0-107h0m1 120h0m0-64h0m0 105h0m0-106h0m0 65h0m0 26h0m0 23h0m0-68h0m0-63h0m1 98h0m0 15h0m1-16h0m0-8h0m0-28h0m0 92h0m0-69h0m0-26h0m0 7h0m1 71h0m0-47h0m1-6h0m0-94h0m1 73h0m0-5h0m0 40h0m1-28h0m0 27h0m0-59h0m0 37h0m1 7h0m0 18h0m0 44h0m0-97h0m1 59h0m0-142h0m0 118h0m1 18h0m0-14h0m0-24h0m0 57h0m0 18h0m0-80h0m1 18h0m0-12h0m1-26h0m0 95h0m0-119h0m1 35h0m0 44h0m0-16h0m0 32h0m1 37h0m0-33h0m0-40h0m0 19h0m1-13h0m0 25h0m0-49h0m0-1h0m0-5h0m0 34h0m1-20h0m0 2h0m1 12h0m0-5h0m0 65h0m0-85h0m1 54h0m0-46h0m0 3h0m1-1h0m0 49h0m0-29h0m1-30h0m0-50h0m0 92h0m0 31h0m0-30h0m0-86h0m0 117h0m1 20h0m0-101h0m0 93h0m0-85h0m0 61h0m1-27h0m0 19h0m0-73h0m1 77h0m0-89h0m1 60h0m0 10h0m0-14h0m0 58h0m0-173h0m0 148h0m1-49h0m0 59h0m0-82h0m0-90h0m0 167h0m1-46h0m0 14h0m0 44h0m0-56h0m0 64h0m1-81h0m1 42h0m0-47h0m0 26h0m0-55h0m0 53h0m1 3h0m0-8h0m0 72h0m0-8h0m0-35h0m0-56h0m1 20h0m0 76h0m0-131h0m0 78h0m0 60h0m0-14h0m1-122h0m0 118h0m0-5h0m1-135h0m0 75h0m0 54h0m1-22h0m0-91h0m0 60h0m0 35h0m0 21h0m1-21h0m0 45h0m0-45h0m0-54h0m0 31h0m0 117h0m0-115h0m1-44h0m0 73h0m0-85h0m0 52h0m1 27h0m0-85h0m0 118h0m1-139h0m0 172h0m0-83h0m0 24h0m1-94h0m0 96h0m0-11h0m0 26h0m1 1h0m0-87h0m0 68h0m0-57h0m0 24h0m0 16h0m0-4h0m1 12h0m0-34h0m0 36h0m0 8h0m0-35h0m0 24h0m1-25h0m0 44h0m0-18h0m1-34h0m0 0h0m1 67h0m0-31h0m0-81h0m0-35h0m1 142h0m0 28h0m0-21h0m0-58h0m0-59h0m1 36h0m0-71h0m0 139h0m0-36h0m1-29h0m0 10h0m0-14h0m0 14h0m0-10h0m0 25h0m1 12h0m0 20h0m0-37h0m0-52h0m0 67h0m0 23h0m0-29h0m1 25h0m1-21h0m0 31h0m0-61h0m0 27h0m1 8h0m0-45h0m0 35h0m0-21h0m0 5h0m0 67h0m0-33h0m0-22h0m0 3h0m1 40h0m0-75h0m0-45h0m0-3h0m0 76h0m0-58h0m1 42h0m0 10h0m0 42h0m0-79h0m1 58h0m0-106h0m0 105h0m0 74h0m0-92h0m0-9h0m0-11h0m0 17h0m2-8h0m0 69h0m0-116h0m0 78h0m0-28h0m0 28h0m1 20h0m0-49h0m0-7h0m1 18h0m0-9h0m0 26h0m0-15h0m2-18h0m0 34h0m0 53h0m1-157h0m0 69h0m0 4h0m0 20h0m0 6h0m0-28h0m0 53h0m0-17h0m0 47h0m1 36h0m0-175h0m0 31h0m0 72h0m0-37h0m0-18h0m1 7h0m0 105h0m0-51h0m0-26h0m1 37h0m0-26h0m0-98h0m0 96h0m0-115h0m1 46h0m0-27h0m0 52h0m1 56h0m0-41h0m0-75h0m0 103h0m1-13h0m0-19h0m0 4h0m0 26h0m1 35h0m0 5h0m1-5h0m0-10h0m0-19h0m1 25h0m0-38h0m0-31h0m1-29h0m0 54h0m0-7h0m0 30h0m0-47h0m0 21h0m0 22h0m0-61h0m0-6h0m1 8h0m0-53h0m0 22h0m0 177h0m1-91h0m1 3h0m0-1h0m0-15h0m0-4h0m0 43h0m0-107h0m1 63h0m0-58h0m0 70h0m0 0h0m0-24h0m0 16h0m0 10h0m0 3h0m0-51h0m1 15h0m0 17h0m0 54h0m0-55h0m0 8h0m0-92h0m0 90h0m0 67h0m1-55h0m0 15h0m0-19h0m0-49h0m0 76h0m0-24h0m0-11h0m0 9h0m1 7h0m0-15h0m0-2h0m0 23h0m0 4h0m0-40h0m0-62h0m0 104h0m0-13h0m0-57h0m2 91h0m0-114h0m0 67h0m0-10h0m1-37h0m0-11h0m1 87h0m0-45h0m0 12h0m0-26h0m0 37h0m0 21h0m0-22h0m0-57h0m1 27h0m0 4h0m0 23h0m1-16h0m0-3h0m0-75h0m0 65h0m0 35h0m0-121h0m0 79h0m0 60h0m1-127h0m0 153h0m0-102h0m0-51h0m1 78h0m0-91h0m0 107h0m1 28h0m0-8h0m0-88h0m0 74h0m0 42h0m0-26h0m0 38h0m0-61h0m1-23h0m0 34h0m0-44h0m0-1h0m0 58h0m0-41h0m0 30h0m0 0h0m1 13h0m0-10h0m0 41h0m0-56h0m0-17h0m0-18h0m0 69h0m1-22h0m0-74h0m0 102h0m0-40h0m1 83h0m0-152h0m0 102h0m0-88h0m1 49h0m0-114h0m0 59h0m1 42h0m0 71h0m0-94h0m1 28h0m0 80h0m0-138h0m0 86h0m1-50h0m0 59h0m1-10h0m1-50h0m0 57h0m0-69h0m0 47h0m0 37h0m0-29h0m0 15h0m1-64h0m0 92h0m0 22h0m1-129h0m0 72h0m0-40h0m0 4h0m0 50h0m0-34h0m0 16h0m1-85h0m0 61h0m1 16h0m0-36h0m0 7h0m0 83h0m0-97h0m1 98h0m0-29h0m0-18h0m0 0h0m1-24h0m0 31h0m0-9h0m0 0h0m1-20h0m0-8h0m1 26h0m0 29h0m0-49h0m1-9h0m0 60h0m0-18h0m0-8h0m0-22h0m1 28h0m0-116h0m2 114h0m0 53h0m0-61h0m0-3h0m0-30h0m0 21h0m0-16h0m0-2h0m1 65h0m0-82h0m1-35h0m0 93h0m0-30h0m0 33h0m0-39h0m1 38h0m0-37h0m0 6h0m0 14h0m1-49h0m0 11h0m0 35h0m0-57h0m0 63h0m1 12h0m0-7h0m0-95h0m0 90h0m0-17h0m0 1h0m1-67h0m0 67h0m0 10h0m0-35h0m1 49h0m0-2h0m0 62h0m0-88h0m0 1h0m0 54h0m1 42h0m0-38h0m0-30h0m0-56h0m2 93h0m0-53h0m1-6h0m0 3h0m0 13h0m0-17h0m0 67h0m1 18h0m0-59h0m0 25h0m0-148h0m1 75h0m0 19h0m0 26h0m0-32h0m0 55h0m0 28h0m0-50h0m1 9h0m0-130h0m0 71h0m0 3h0m1 32h0m0 62h0m1-101h0m0 4h0m0 123h0m0-3h0m0-129h0m0-9h0m1 42h0m0-24h0m0 91h0m0-45h0m1-27h0m0 36h0m0 25h0m0-26h0m1 23h0m0-39h0m0 23h0m1 10h0m0-33h0m0-40h0m1 16h0m0 15h0m0-86h0m0 96h0m0 9h0m0 21h0m1-36h0m0-27h0m0 33h0m0-3h0m1-15h0m0 58h0m0-112h0m1 75h0m1 46h0m0 16h0m0-57h0m0 6h0m0-26h0m0-46h0m0-9h0m0 64h0m1-19h0m0 91h0m1-36h0m0 6h0m1-76h0m0 60h0m1-13h0m0 33h0m0-48h0m0-52h0m1 72h0m0-76h0m1-41h0m0 53h0m1 59h0m1 19h0m0-32h0m0-4h0m0 53h0m0 36h0m1-59h0m0 34h0m0-63h0m1 76h0m0-63h0m0-77h0m0-7h0m0 79h0m0 1h0m0 29h0m0-14h0m1 48h0m0-125h0m0 73h0m1 44h0m0-99h0m1 12h0m0 23h0m0 32h0m0-78h0m1 9h0m0 16h0m0 18h0m0-35h0m0 104h0m1-124h0m0 25h0m0 88h0m0-148h0m0 127h0m0-29h0m1 17h0m0-15h0m0-19h0m0 7h0m1-33h0m0-4h0m1 52h0m0-37h0m0 87h0m0-137h0m0 32h0m0 78h0m1-32h0m0-26h0m0 35h0m0 12h0m0-12h0m1 26h0m0-40h0m0 11h0m1 41h0m0-25h0m0-6h0m1-3h0m0 19h0m0-13h0m1 15h0m0 14h0m0-12h0m0 35h0m0-73h0m0 9h0m0 41h0m1-49h0m0 13h0m0-56h0m1 101h0m0-56h0m0 28h0m1-41h0m0 14h0m0 2h0m0 58h0m0-105h0m1 68h0m0 70h0m0-67h0m1 3h0m0-14h0m0 36h0m0-101h0m0 80h0m0-55h0m0 52h0m0-27h0m0-18h0m0-44h0m1 69h0m0 10h0m0-56h0m1 35h0m0-25h0m0-20h0m0 84h0m0-87h0m0 65h0m0-17h0m0-115h0m0 144h0m0 4h0m1-31h0m0 5h0m0-80h0m0 72h0m1-39h0m0 42h0m0-26h0m0 68h0m0 35h0m0-111h0m1 29h0m0-48h0m0 85h0m0-161h0m0 109h0m0-20h0m1 104h0m0-100h0m0 64h0m0-4h0m0 0h0m0-18h0m0-81h0m1 54h0m0 28h0m0-2h0m0-40h0m0-3h0m0 75h0m0-86h0m0 144h0m1-43h0m0-74h0m0 97h0m0-169h0m0 72h0m1 40h0m0 4h0m0-58h0m0-5h0m0 55h0m1-51h0m0 21h0m1 55h0m0-39h0m0-11h0m0 20h0m1-35h0m0 45h0m0-53h0m0 19h0m0 25h0m0-4h0m0-20h0m0 20h0m0-35h0m0 3h0m1-12h0m0 22h0m0-6h0m0 41h0m0 4h0m0-113h0m2 64h0m0 119h0m0-136h0m0 91h0m1-112h0m0 102h0m1-81h0m0 41h0m0-10h0m1 26h0m0-29h0m1 0h0m0 33h0m0 1h0m1 52h0m0-176h0m0 116h0m1 80h0m0-174h0m0 92h0m0 29h0m1-50h0m0 10h0m1-23h0m0-42h0m0 71h0m0 0h0m0-23h0m0 36h0m0 4h0m0-8h0m0 5h0m1-30h0m0 31h0m0 22h0m0-44h0m0 89h0m0-107h0m0-4h0m1 91h0m0-58h0m0 45h0m0-58h0m0-73h0m1 60h0m0 16h0m0-22h0m0 72h0m0-84h0m1 68h0m1-56h0m0 14h0m0-31h0m0 43h0m0-17h0m0 11h0m0 22h0m0-1h0m1-50h0m0 29h0m0 17h0m0 17h0m0-56h0m0 69h0m0-24h0m1 36h0m0-18h0m0-15h0m1-18h0m0 15h0m0-35h0m1 92h0m0-132h0m0 33h0m0 22h0m0 44h0m1-61h0m0 59h0m0-23h0m0-5h0m0-16h0m0 1h0m0-26h0m2 85h0m0-88h0m0 19h0m0 7h0m0 4h0m1-3h0m0 79h0m0-62h0m0-33h0m0-7h0m1 15h0m0 30h0m0 9h0m1 11h0m0-21h0m0-8h0m0 55h0m1-83h0m0 94h0m0-121h0m0 57h0m1-4h0m0 21h0m0-49h0m0 23h0m0 5h0m0-10h0m0 14h0m1-105h0m0 78h0m0 52h0m1-13h0m0-19h0m0-29h0m1 72h0m0-60h0m1 7h0m0 21h0m0-28h0m0 21h0m0 16h0m1 52h0m0-107h0m0 41h0m0-22h0m0 57h0m0-171h0m1 84h0m0-79h0m0 122h0m0-11h0m0 33h0m0-27h0m0 15h0m0 34h0m2-108h0m0 18h0m0 95h0m0-107h0m1 78h0m0-14h0m0-9h0m0-7h0m0 52h0m0 15h0m1-52h0m0-24h0m0 37h0m0-23h0m0 11h0m0 20h0m0-71h0m0 40h0m0-19h0m1 81h0m0-18h0m0-34h0m0 82h0m0-78h0m2-10h0m0 16h0m0-4h0m0 3h0m1-36h0m0 13h0m0-4h0m0 57h0m1-41h0m0 17h0m1 35h0m0-51h0m0 69h0m1-17h0m0-74h0m0 14h0m1 84h0m0-74h0m0 9h0m0 13h0m0 28h0m0-27h0m0-35h0m0-37h0m0 33h0m1 19h0m0-14h0m0-48h0m0 78h0m0-34h0m0-4h0m0 52h0m0-22h0m0-10h0m0 18h0m0-6h0m0-23h0m1-3h0m0 15h0m0-16h0m0 15h0m0 32h0m0-101h0m0 68h0m0-6h0m0-5h0m0 27h0m0-120h0m0 171h0m0-75h0m1-25h0m0 32h0m0-62h0m0 91h0m1-95h0m0 88h0m0 51h0m0-30h0m0-45h0m1-72h0m0 136h0m0-106h0m1 45h0m1-41h0m0 116h0m0-82h0m0 33h0m1-27h0m0-19h0m0 21h0m0-28h0m0 19h0m0 39h0m1-48h0m1-34h0m0-10h0m0 84h0m0-19h0m0-7h0m0-12h0m0 77h0m0-78h0m0 21h0m1-2h0m0-11h0m0-32h0m0-23h0m1 9h0m0-24h0m0 103h0m0-51h0m0-1h0m0 44h0m0 61h0m0-62h0m0-22h0m0-66h0m0 33h0m0 11h0m1 2h0m0-1h0m1-15h0m0 74h0m1 16h0m0-5h0m0-84h0m0-23h0m0 116h0m0-56h0m0 9h0m0 62h0m0-55h0m1-19h0m0-24h0m0 12h0m1 52h0m0-11h0m0 4h0m0 5h0m0-48h0m0-65h0m1 103h0m0 27h0m0-78h0m0-48h0m0 51h0m1 31h0m0 90h0m0-96h0m0-55h0m0 37h0m1 21h0m0-19h0m0-1h0m0 48h0m0 53h0m0-93h0m0 17h0m0-63h0m1 70h0m0-107h0m0 101h0m0 1h0m0 34h0m1-116h0m0-17h0m0 145h0m0-84h0m0 57h0m0-59h0m0 40h0m1 30h0m0-49h0m0 25h0m0 15h0m1-25h0m0-5h0m1 13h0m0 65h0m0-9h0m0-87h0m0-35h0m1-46h0m0 141h0m0-106h0m0 135h0m1-49h0m0-58h0m0 43h0m0 19h0m0-8h0m1-3h0m0-66h0m0 60h0m0-10h0m0 31h0m0-30h0m0 14h0m2 23h0m0-56h0m0 41h0m0-48h0m1 60h0m0-142h0m0 82h0m0 23h0m0 79h0m0-118h0m0 54h0m1-52h0m0 63h0m0-26h0m0 34h0m0-78h0m0 46h0m1-6h0m0 11h0m0 29h0m0-25h0m0-55h0m1 77h0m0-11h0m0-141h0m0 134h0m0-54h0m0 96h0m0-53h0m0 46h0m0-22h0m1 0h0m0-16h0m1 24h0m0-53h0m0 17h0m0-16h0m0 2h0m0-83h0m0 52h0m1 119h0m0-61h0m1-1h0m0 57h0m0-53h0m0 12h0m1-26h0m0 39h0m0-25h0m0 7h0m0-24h0m0-16h0m0-34h0m1 118h0m0-57h0m0 38h0m0 8h0m1 20h0m0-59h0m0 2h0m0-51h0m0 46h0m0-11h0m0 3h0m1-17h0m0 22h0m0 5h0m1 21h0m0 28h0m0 4h0m0-60h0m0 46h0m0-53h0m1 7h0m0-2h0m0 25h0m0-12h0m1-54h0m0 3h0m0 28h0m0 16h0m0-5h0m0 20h0m0 13h0m1-34h0m0 7h0m0-85h0m0 76h0m0-14h0m0 29h0m0-34h0m1 44h0m0-22h0m0-27h0m0-31h0m1 119h0m0-16h0m0-83h0m0 147h0m0-212h0m0 56h0m0 37h0m0-12h0m0 40h0m1 16h0m0-15h0m0-13h0m1-23h0m0-36h0m0 68h0m0-37h0m0 80h0m0-47h0m1 50h0m0-100h0m0 50h0m0 35h0m0-53h0m1-22h0m0 77h0m0-51h0m0 17h0m0 32h0m0-83h0m0-11h0m1 79h0m0-23h0m0-19h0m1 4h0m0-4h0m0 60h0m0-37h0m0 45h0m0-40h0m0-21h0m1-11h0m0 9h0m0 10h0m0 53h0m0-61h0m0 3h0m1 7h0m0-115h0m0 106h0m0 39h0m0-32h0m0-4h0m1 64h0m0-44h0m0-92h0m0 117h0m0-42h0m1-2h0m0-7h0m0 21h0m0 8h0m0-31h0m0-7h0m1-5h0m0 54h0m0-43h0m1-17h0m0 8h0m0 26h0m0-62h0m0-47h0m0 81h0m0 37h0m1-58h0m0-25h0m0 53h0m0 33h0m1-85h0m0 56h0m0 20h0m0-6h0m0 22h0m0 2h0m0-140h0m1 118h0m0 9h0m0-26h0m1 28h0m0-12h0m1-11h0m0 50h0m1-65h0m0-79h0m0 119h0m0-57h0m1 15h0m0 90h0m1-58h0m0 15h0m0-87h0m0 24h0m1 24h0m0 14h0m0-25h0m0 5h0m0 35h0m0 5h0m1-32h0m0-6h0m0-31h0m1 54h0m0-17h0m0-64h0m0 72h0m0-30h0m0 81h0m0-11h0m0-1h0m1-39h0m0 25h0m0-98h0m0 7h0m0 48h0m0 42h0m0-47h0m1 46h0m0-30h0m0-55h0m0 130h0m0-154h0m0 90h0m0 0h0m1-5h0m0 50h0m0-152h0m0 98h0m1-63h0m0 113h0m0-46h0m0-23h0m0 21h0m1-8h0m0 42h0m0 34h0m0-43h0m0-16h0m0-29h0m0-32h0m1 89h0m0 9h0m0-77h0m0 61h0m0 52h0m1-24h0m0-15h0m0-8h0m0-59h0m0 10h0m0 31h0m0-54h0m0 69h0m0-72h0m1 57h0m0-31h0m0 1h0m0 20h0m1-58h0m0 81h0m1-2h0m0-138h0m0-9h0m0 101h0m0 30h0m0 42h0m1-18h0m0-81h0m0-14h0m1 31h0m0 41h0m0 4h0m1 2h0m0 34h0m0-144h0m0 84h0m0 31h0m0-38h0m1 14h0m1 2h0m0-11h0m0 40h0m0-22h0m0-10h0m0 60h0m0-134h0m0 129h0m0-50h0m1 29h0m0 17h0m0-4h0m1-121h0m0 73h0m0-9h0m0 35h0m0 26h0m0-4h0m0-86h0m1 144h0m0-70h0m0-22h0m0 52h0m1-80h0m0 59h0m1-24h0m0-52h0m0 19h0m1 39h0m0-4h0m0-52h0m0-14h0m1-54h0m0 173h0m0-68h0m0-24h0m1 57h0m0-67h0m0 36h0m0 21h0m0-45h0m0 10h0m0-111h0m1 65h0m0 112h0m0-76h0m1 2h0m0-51h0m0 138h0m1-91h0m0 12h0m1 14h0m0 31h0m0-37h0m0 59h0m1-92h0m0-30h0m0 82h0m1-40h0m0 61h0m0-55h0m0 34h0m0-59h0m0 63h0m1-17h0m0-28h0m0-11h0m0 10h0m0 74h0m0-180h0m0 130h0m0-3h0m1-16h0m0 23h0m0-15h0m0 1h0m0 12h0m0 2h0m0-37h0m0 53h0m0 0h0m1 33h0m0-17h0m0-14h0m0-11h0m0 0h0m0-39h0m0 0h0m1-72h0m0 18h0m0 81h0m0-16h0m0 16h0m0 44h0m0-52h0m1 8h0m0-58h0m0 15h0m1 30h0m0 30h0m0 26h0m0-26h0m0-43h0m0 49h0m1-66h0m0 89h0m0-69h0m1-19h0m0-61h0m0-14h0m0 123h0m0 30h0m0-35h0m0 29h0m0-32h0m0 28h0m0-16h0m1 30h0m1-48h0m0-47h0m0 67h0m0 70h0m0-82h0m0 34h0m0-72h0m1 65h0m0 7h0m0 13h0m1-61h0m0 23h0m0 15h0m0 4h0m0 12h0m1-58h0m0 57h0m0-89h0m0 93h0m0 20h0m1-103h0m0 43h0m0 76h0m0-80h0m0 40h0m0-38h0m1-36h0m0-79h0m0 139h0m0-26h0m0-30h0m1-75h0m0 66h0m0 77h0m1-44h0m0-19h0m0 54h0m0-4h0m0-40h0m0 57h0m1-35h0m0 5h0m0 13h0m0 23h0m0 44h0m0-66h0m0 32h0m1-46h0m1-50h0m0 72h0m0-61h0m0 33h0m0-29h0m0 16h0m0 39h0m1 28h0m0-55h0m0 3h0m0 1h0m1-22h0m0-3h0m0-25h0m0 63h0m1-105h0m0 41h0m0 69h0m0 59h0m0-152h0m0 72h0m0 63h0m1 20h0m0-58h0m0-18h0m0 11h0m1-50h0m0-30h0m0 74h0m0 9h0m0 8h0m0-166h0m1 151h0m0-22h0m0-7h0m1-5h0m0 20h0m0-48h0m0-57h0m0 113h0m0 39h0m1-23h0m0-78h0m1 25h0m0-58h0m1 93h0m0-65h0m0 3h0m0 61h0m0-48h0m1 101h0m0-57h0m0-20h0m1 46h0m0-10h0m0-35h0m0 32h0m1-54h0m0-31h0m0 51h0m0 8h0m1 10h0m0-32h0m0 30h0m0-9h0m0 12h0m0 60h0m0-115h0m1 61h0m0 58h0m0-78h0m0 13h0m0-10h0m0 29h0m0 8h0m0 17h0m0-60h0m0-36h0m1 55h0m0 5h0m0 1h0m1-99h0m0 45h0m0 41h0m0 10h0m0-6h0m1-21h0m0 24h0m1 44h0m1-74h0m0 47h0m0-16h0m0 32h0m0-19h0m0-48h0m1 42h0m0 60h0m0-95h0m0 32h0m0-17h0m0 28h0m0-21h0m1-4h0m0 49h0m0-15h0m0-43h0m0 3h0m1 38h0m0-4h0m0 19h0m0-44h0m0-18h0m0 14h0m1-15h0m0 26h0m0 3h0m0 60h0m1-24h0m0-69h0m0 26h0m1-60h0m0 93h0m0-46h0m1 74h0m0-21h0m0 7h0m1-8h0m0-37h0m0-38h0m0 42h0m0-16h0m1-23h0m0 33h0m0-27h0m0 4h0m0 33h0m1-5h0m0 26h0m0-3h0m0-30h0m0 64h0m0-52h0m0-29h0m1 16h0m0 17h0m0 11h0m1 0h0m0-64h0m0 41h0m0 3h0m1 36h0m1-144h0m0 89h0m1 98h0m0-129h0m1 29h0m0 34h0m0-133h0m1 43h0m0 80h0m0 20h0m0 30h0m0-75h0m1 87h0m0-57h0m0 9h0m1-82h0m0 96h0m0-1h0m0-53h0m1-20h0m0 11h0m0 72h0m1-77h0m0 32h0m0-67h0m1 39h0m0 24h0m0 47h0m0-70h0m1 36h0m0 23h0m0-15h0m0-68h0m1 124h0m0-62h0m0 38h0m0-31h0m0-9h0m1-75h0m0-57h0m0 180h0m1-61h0m1 56h0m0-4h0m0-9h0m1-166h0m0 88h0m0 30h0m0-15h0m1 34h0m0-23h0m0 109h0m1-70h0m0-99h0m1 132h0m0-12h0m0-43h0m0-38h0m0 15h0m0 6h0m0-15h0m0 62h0m1 40h0m0-80h0m0 5h0m0-8h0m0 3h0m0-19h0m0-104h0m1 127h0m0 53h0m0-106h0m1 66h0m0 21h0m0-55h0m0-93h0m0 31h0m0 127h0m1-26h0m0 47h0m0-29h0m1-123h0m0 121h0m0 10h0m0-61h0m0-11h0m0 79h0m0-46h0m0-9h0m0 46h0m1-4h0m0-133h0m0 58h0m0 52h0m0 0h0m1 84h0m0-98h0m0-21h0m0 69h0m1-56h0m0 8h0m0 0h0m1 10h0m0-80h0m0-4h0m0 23h0m0 27h0m0 90h0m1-67h0m0-2h0m0 11h0m1 9h0m0-55h0m1-76h0m0 82h0m0 17h0m0 11h0m1 0h0m0 41h0m0-83h0m1 25h0m0 5h0m0 13h0m0 63h0m0-28h0m1-149h0m0-8h0m0 188h0m0-90h0m1 65h0m0-20h0m0 70h0m0-35h0m0-38h0m0-20h0m0 64h0m1-62h0m0-66h0m0 93h0m0 20h0m0 35h0m1-7h0m1-35h0m0-8h0m1-28h0m1-44h0m0 90h0m1-37h0m1-43h0m0 30h0m1 12h0m0 1h0m0-1h0m0 51h0m0-71h0m0 14h0m0-47h0m1 23h0m0-96h0m0 80h0m0 63h0m1-21h0m0 81h0m0-108h0m0 30h0m1 2h0m0-31h0m0-53h0m1 82h0m0 33h0m0-81h0m0 94h0m0-22h0m0-33h0m1-43h0m0-50h0m1 153h0m0-64h0m0-19h0m0 19h0m0 58h0m0-78h0m1 67h0m0-44h0m0-8h0m0 63h0m1 0h0m0-32h0m1 70h0m0-64h0m0 26h0m0-146h0m0 138h0m0-78h0m1 16h0m0-24h0m0 36h0m1-79h0m0 86h0m0-61h0m0 70h0m0-7h0m0-90h0m1 90h0m0 1h0m2 6h0m0-2h0m0-5h0m0-31h0m1 51h0m0 5h0m0-82h0m1 69h0m1-1h0m0 25h0m0-39h0m0 83h0m0-212h0m1 150h0m0-11h0m0-4h0m0-31h0m1 26h0m0 25h0m1 64h0m0-114h0m0-4h0m1-76h0m0 99h0m0-9h0m0 1h0m0 74h0m0-33h0m1 4h0m0-37h0m1-17h0m0 36h0m0-9h0m0 15h0m1-75h0m1 88h0m0 47h0m0-100h0m0 52h0m1-47h0m0 16h0m0-3h0m1 70h0m0-40h0m0-18h0m0-41h0m0 79h0m0 1h0m0-72h0m1 84h0m0-52h0m0 42h0m0-140h0m0 121h0m0-4h0m1 18h0m1-112h0m0 23h0m0 61h0m0-80h0m2 56h0m0 53h0m0-85h0m0 35h0m0 16h0m1-126h0m0 36h0m0 64h0m0-12h0m0-11h0m1 48h0m0 14h0m0 0h0m0-27h0m0-30h0m0-10h0m0 175h0m1-124h0m0 22h0m0-9h0m1 49h0m0-52h0m0 62h0m1-87h0m0-11h0m0-10h0m0 96h0m0-15h0m0-18h0m1-94h0m0 81h0m0-61h0m0 48h0m0-17h0m0 69h0m0-160h0m0 139h0m1 14h0m0 9h0m0-74h0m0-28h0m0 78h0m1-75h0m0 4h0m0 44h0m0-24h0m1 2h0m0-18h0m0 2h0m0 29h0m0-58h0m0 30h0m0 73h0m1-40h0m0-85h0m1-12h0m0 76h0m0 8h0m0 27h0m0-6h0m0 44h0m0 23h0m1-67h0m0-47h0m0 57h0m0-6h0m0 0h0m1-70h0m0 82h0m0-87h0m0 89h0m1-16h0m0-20h0m0-8h0m0-30h0m0 15h0m0-4h0m0 28h0m1 11h0m0-10h0m0 47h0m0-43h0m0-110h0m1 139h0m0-79h0m1 66h0m0 25h0m0-70h0m0-5h0m0-10h0m0 6h0m1-87h0m0 119h0m0 2h0m0 19h0m0-41h0m0-110h0m1 116h0m0 28h0m0-18h0m0 27h0m1-16h0m0-16h0m0 18h0m0-33h0m0 28h0m1 5h0m0 110h0m1-69h0m0-25h0m0 10h0m1-27h0m0-77h0m1 82h0m0-123h0m0 92h0m0 63h0m0-11h0m0-40h0m0-4h0m1-63h0m0 84h0m0-14h0m0-99h0m1 20h0m0 40h0m0 51h0m1-4h0m0-53h0m0 16h0m1 28h0m0 25h0m0-26h0m1 54h0m0-75h0m0 58h0m0-117h0m0 135h0m1-109h0m0 127h0m0-22h0m1-4h0m0-47h0m0-43h0m1 113h0m0-112h0m0 65h0m0-18h0m0 32h0m0-47h0m0 97h0m0-101h0m1 28h0m0 32h0m0-32h0m0 0h0m0 16h0m1-62h0m0 139h0m0-162h0m0 51h0m1-41h0m0 67h0m0-7h0m1-37h0m0 100h0m0-65h0m0 17h0m0-92h0m2 86h0m0-23h0m0 31h0m0 92h0m0-112h0m2-31h0m0 1h0m0 46h0m0-52h0m0-52h0m0 119h0m1-59h0m0 5h0m0 9h0m0 14h0m1-11h0m0-3h0m0-20h0m0 74h0m0-39h0m1 17h0m0-32h0m0-85h0m1 77h0m0-30h0m0 34h0m1 33h0m0-22h0m0-93h0m0 107h0m0-54h0m0 30h0m0 11h0m1 77h0m0-50h0m0-33h0m0 0h0m1 8h0m0-12h0m0-18h0m0-4h0m1 64h0m0-29h0m0-70h0m0 93h0m0-114h0m1 105h0m0-10h0m0-37h0m0-84h0m0 149h0m0-15h0m0-43h0m1 88h0m0-70h0m0-7h0m0 31h0m0 6h0m0-26h0m0-2h0m0 14h0m1-27h0m0 3h0m0 32h0m0 34h0m1-8h0m0-77h0m0-18h0m0 22h0m1 18h0m0-19h0m0 23h0m1-39h0m0 53h0m0 12h0m0 28h0m1-95h0m0-38h0m0 61h0m1 41h0m0-23h0m0-22h0m1 73h0m0-90h0m0 76h0m0-63h0m1-37h0m0 38h0m0 30h0m1 45h0m0-79h0m1 66h0m0 24h0m0 1h0m0-62h0m1 31h0m0-65h0m0-34h0m0 16h0m0 69h0m0-40h0m1-55h0m0 50h0m1 57h0m0-64h0m0 16h0m0-23h0m1 27h0m0 12h0m1-9h0m0 75h0m1-21h0m0 12h0m0-17h0m0-29h0m0 36h0m1-33h0m0-62h0m0 48h0m0-33h0m1 8h0m0-49h0m0 80h0m0-3h0m0-44h0m1 106h0m0-17h0m0-67h0m0-4h0m0-62h0m0 37h0m1 5h0m0 25h0m0 28h0m0-40h0m0 43h0m0 6h0m1-42h0m0 44h0m0-131h0m0 104h0m0-7h0m0-45h0m0 124h0m1-40h0m0-42h0m0 87h0m0-49h0m1 64h0m0-136h0m1 97h0m0-32h0m0-9h0m0 11h0m0-5h0m0 60h0m0-73h0m1-31h0m0 125h0m1-72h0m0 44h0m0-89h0m0 23h0m0-12h0m0 10h0m0 75h0m1-11h0m0-133h0m1 47h0m0 70h0m0-13h0m0-29h0m0 11h0m1-33h0m0 74h0m0-53h0m0 13h0m0-42h0m0 51h0m0 12h0m1-65h0m0 67h0m0-60h0m0 36h0m1-78h0m1 38h0m0 33h0m0-44h0m0 80h0m0-46h0m0 2h0m0-14h0m1 55h0m0-33h0m1 51h0m0-52h0m0-28h0m0-13h0m0 123h0m1-58h0m0-26h0m0 71h0m1-144h0m0 75h0m0 66h0m0-164h0m1-21h0m0 193h0m0-34h0m0-5h0m1-28h0m0-54h0m0 7h0m0 68h0m1-18h0m0-19h0m0 16h0m0 46h0m1-73h0m0 59h0m0-41h0m0-73h0m0 143h0m1-56h0m0 33h0m0-59h0m0 10h0m0 45h0m1-82h0m0-59h0m0 93h0m0 73h0m0-67h0m1 2h0m0 9h0m1 15h0m0-41h0m0 6h0m0 12h0m1 5h0m0-21h0m0 1h0m0 23h0m0-16h0m0-38h0m0 78h0m0-5h0m0-12h0m0-55h0m0 45h0m1-69h0m0 43h0m0 50h0m0-32h0m0 71h0m1-31h0m0-50h0m1 34h0m0-1h0m0-66h0m0-3h0m0 52h0m0 33h0m1 13h0m0-40h0m1 36h0m0-34h0m0-19h0m1 23h0m0 7h0m0-54h0m0 47h0m0-151h0m0 118h0m0-28h0m1 87h0m0-41h0m0-99h0m0 143h0m0-106h0m0 67h0m0 36h0m1 19h0m0-69h0m0-32h0m0 47h0m0 26h0m0-5h0m1 25h0m0-160h0m0 132h0m0-35h0m0-27h0m1 86h0m0 29h0m0-127h0m0 59h0m0 29h0m1-33h0m0 35h0m0-11h0m1 65h0m0-66h0m0-68h0m0 28h0m0 36h0m0-14h0m0-18h0m0-92h0m1 142h0m0-18h0m1-14h0m0-25h0m0 42h0m0-28h0m0-11h0m0 26h0m0-17h0m0 13h0m1 43h0m0-102h0m1 38h0m0-24h0m0 110h0m0-37h0m0 23h0m0-52h0m1-3h0m0 40h0m0-28h0m0-4h0m1 8h0m1-37h0m0 17h0m0 8h0m0 18h0m0-24h0m0 28h0m0-34h0m0 3h0m2 29h0m0-6h0m0-59h0m0 38h0m0 29h0m0 4h0m1-57h0m0 33h0m1-118h0m0 139h0m0 13h0m0-57h0m1 56h0m0-72h0m0-49h0m0 51h0m0-33h0m1 80h0m0-33h0m0 11h0m0-71h0m1-3h0m0 111h0m0-144h0m0 80h0m0-15h0m1 33h0m0 52h0m1-6h0m0-25h0m0 39h0m0-55h0m0 6h0m1-47h0m0 88h0m0-182h0m1 133h0m0 2h0m0-61h0m0 70h0m0 23h0m0 8h0m0-74h0m0 117h0m0-108h0m0 21h0m1 5h0m0-29h0m0-34h0m0 62h0m1-15h0m0 1h0m0-11h0m0 26h0m0 11h0m0-18h0m0 44h0m0-39h0m0-35h0m0 92h0m0-120h0m0 55h0m1 49h0m0 12h0m0-131h0m0 4h0m0 116h0m0-42h0m1 42h0m0-35h0m0-8h0m2 1h0m0 5h0m0 39h0m0-78h0m0 7h0m0-21h0m0 77h0m1-19h0m0 43h0m0-53h0m1 56h0m0-47h0m0-55h0m1 33h0m0 67h0m0-112h0m0 109h0m0-28h0m1 7h0m0-4h0m0-143h0m0 22h0m0 73h0m1 40h0m0 30h0m0-44h0m1-40h0m0 83h0m1-56h0m0 26h0m0-6h0m0 21h0m0-19h0m0-20h0m1-29h0m0 76h0m0-28h0m0-5h0m0 63h0m0-35h0m0 18h0m1-50h0m0 14h0m0-6h0m1-8h0m0 29h0m0-38h0m0-2h0m0 38h0m0 6h0m0-76h0m1 103h0m0-76h0m0-17h0m1 57h0m0 8h0m0-32h0m0 39h0m1 38h0m0-102h0m0-17h0m0 98h0m0-67h0m0 17h0m0 8h0m1-27h0m0-66h0m0 101h0m0-15h0m0-6h0m0-77h0m0 47h0m1 21h0m0-18h0m0 43h0m0 28h0m0-52h0m0 0h0m1-15h0m0 10h0m0 52h0m1-33h0m0 12h0m0-21h0m0 14h0m0 17h0m1-22h0m0 64h0m0-55h0m1-29h0m0-33h0m0 116h0m0-121h0m0 32h0m0-6h0m0 8h0m1-25h0m0 51h0m0-22h0m0 59h0m1-27h0m0-41h0m0-15h0m1-37h0m0 123h0m0-98h0m1 58h0m0 27h0m0-16h0m0-8h0m1-69h0m1 57h0m0-2h0m0 2h0m0 4h0m0 5h0m0-10h0m0-1h0m0-40h0m0-4h0m0 77h0m1-83h0m0 32h0m1 20h0m0 11h0m1-11h0m0-2h0m0 11h0m0-25h0m0-14h0m0 67h0m0-56h0m0 15h0m0 66h0m1-66h0m0 10h0m0-3h0m0 11h0m0-2h0m1 33h0m0-93h0m0 5h0m0 38h0m1-10h0m0-25h0m0 16h0m0 127h0m0-140h0m0 37h0m0 11h0m1-136h0m0 162h0m0-51h0m0 20h0m0 67h0m0-78h0m1 58h0m0-5h0m0-45h0m0 27h0m0-18h0m0-36h0m0 45h0m1-18h0m0-70h0m0 25h0m1 29h0m1-8h0m0 44h0m0-89h0m0 111h0m0 24h0m0-194h0m1 95h0m0-25h0m0 12h0m0 43h0m1-10h0m0 5h0m0-39h0m0 89h0m0-33h0m0-10h0m2-78h0m0 86h0m0 7h0m1-58h0m0 6h0m0 18h0m0-12h0m0-57h0m0 78h0m0 78h0m1-152h0m1 91h0m0-103h0m0 112h0m0 11h0m0-4h0m1-32h0m0 60h0m0-59h0m0 1h0m1-15h0m0 29h0m0-55h0m0 42h0m0 2h0m0-49h0m1 31h0m0 30h0m0-29h0m1 2h0m0 63h0m0-66h0m0 41h0m0-83h0m1 119h0m0-96h0m1 22h0m0 34h0m0 30h0m0-27h0m0-30h0m1 54h0m0-38h0m0-14h0m1-2h0m0 35h0m0-34h0m1-35h0m0-12h0m0 108h0m0 8h0m0-22h0m0-50h0m0-2h0m0 24h0m0 21h0m1-126h0m0 161h0m0-79h0m0 3h0m0 33h0m0-25h0m1-13h0m0-4h0m0 59h0m0-8h0m1 36h0m0-82h0m0 29h0m0-123h0m0 131h0m1-15h0m0-48h0m1 73h0m0-33h0m0-117h0m1 112h0m0-45h0m0 32h0m0-9h0m0 97h0m0-29h0m0 57h0m1-107h0m1-24h0m0 14h0m1-50h0m0 74h0m0-39h0m0 51h0m0-33h0m0 66h0m0-34h0m1-68h0m0 108h0m1-75h0m0-48h0m0 116h0m1-61h0m0 11h0m0-15h0m0 7h0m0-52h0m0 44h0m0 22h0m1 30h0m0-79h0m0 41h0m0-79h0m0 113h0m1-13h0m0 91h0m0-70h0m1-100h0m0 61h0m0-18h0m0 60h0m0-112h0m1 66h0m0 23h0m0-22h0m1-39h0m0 79h0m0-97h0m0 36h0m0 19h0m0-33h0m1 64h0m0-49h0m0 30h0m0-12h0m0-5h0m0-12h0m1 74h0m0-73h0m0-71h0m0 98h0m0-36h0m0 89h0m0-71h0m0 3h0m1 40h0m0-45h0m0-55h0m1 18h0m0 81h0m0-70h0m0 6h0m1 35h0m0 35h0m0-56h0m1 75h0m0-66h0m0 44h0m0-54h0m0 80h0m0-60h0m0-54h0m1 36h0m0 13h0m0-27h0m0 39h0m0-48h0m0 73h0m1-8h0m0-94h0m1 117h0m0 8h0m0-47h0m0-21h0m0 12h0m0-12h0m1 42h0m0-28h0m0 39h0m0-47h0m0 4h0m0 1h0m1-58h0m0 77h0m0-15h0m0 37h0m0-14h0m1-26h0m0 14h0m0-40h0m1 88h0m0-24h0m0-25h0m1 42h0m0-8h0m0-99h0m0 50h0m0 9h0m1 43h0m0-50h0m0-10h0m0-33h0m1 59h0m0 11h0m0-87h0m0 95h0m0-31h0m1 40h0m0-84h0m0 36h0m1 30h0m0-84h0m0 71h0m1 77h0m0-110h0m0 4h0m0 13h0m0-42h0m1 81h0m0 19h0m1-145h0m0 22h0m0 105h0m1-64h0m0-17h0m0 84h0m0-20h0m1 12h0m0-31h0m0-1h0m0-3h0m1 28h0m1-147h0m0 118h0m0-2h0m0-44h0m0 43h0m0-3h0m1-84h0m0 154h0m0-144h0m0 127h0m0-89h0m0 59h0m1-11h0m0 6h0m0-50h0m0 12h0m0-20h0m1 53h0m0 1h0m0 50h0m0-20h0m0-18h0m0-15h0m0 29h0m1-56h0m0 70h0m0-52h0m0 55h0m0-20h0m1-18h0m0-20h0m0-49h0m0 43h0m0-13h0m0 36h0m1-40h0m0 25h0m0-9h0m0-12h0m0 39h0m0-40h0m0 11h0m0-8h0m1 71h0m0-4h0m0-28h0m1 37h0m0-28h0m0-78h0m0 60h0m0 3h0m1 41h0m0-79h0m0 20h0m0 24h0m0-4h0m0 5h0m0 19h0m1-38h0m0-90h0m0 121h0m0-44h0m1-90h0m0 52h0m0 91h0m1-61h0m0 55h0m1-36h0m0 19h0m0-56h0m1 57h0m0-90h0m0 65h0m1-2h0m0 85h0m0-24h0m1-16h0m0-39h0m0 35h0m0-43h0m0 40h0m0-22h0m1-20h0m0 28h0m1 58h0m0-91h0m0 45h0m0-34h0m0 115h0m0-87h0m0 2h0m0-82h0m1 84h0m0 28h0m0-89h0m0 42h0m1 23h0m0-32h0m0 12h0m0 35h0m0-23h0m2 11h0m0-50h0m1-17h0m0 55h0m1 17h0m0-81h0m0 74h0m0 14h0m0-11h0m0 56h0m1-119h0m0 14h0m1 13h0m0 6h0m0 24h0m1 11h0m0 8h0m0-49h0m0-7h0m0 5h0m1 59h0m0-97h0m0 64h0m0 0h0m0-76h0m1 92h0m0 56h0m0-32h0m0-21h0m0-155h0m0 127h0m1-1h0m0 49h0m0-26h0m1-52h0m1 41h0m0-43h0m0 23h0m0 15h0m1 9h0m0-28h0m0-10h0m0 55h0m1 14h0m0-142h0m0 126h0m0-22h0m0-61h0m0 56h0m1 22h0m0 3h0m0-40h0m0 43h0m1 56h0m0-37h0m0-31h0m0-63h0m0 67h0m1 26h0m0-20h0m0-53h0m0 23h0m0 1h0m1-8h0m0-32h0m0 91h0m1-85h0m0-12h0m0 86h0m0-51h0m0 18h0m0 10h0m0-42h0m0 101h0m0-19h0m0-64h0m1-74h0m0 68h0m0 5h0m0-80h0m0 70h0m0 72h0m0-84h0m1-98h0m0 101h0m0 40h0m0-60h0m0 77h0m1-36h0m0-36h0m0-9h0m1 77h0m0-9h0m0-45h0m0-3h0m0 5h0m0-2h0m1-73h0m0 92h0m0-52h0m0 13h0m1 41h0m0-5h0m0 38h0m0-61h0m1 39h0m0-35h0m1 10h0m0 61h0m1-2h0m0-27h0m0 7h0m0-23h0m1-29h0m0 79h0m0-53h0m0 44h0m0-29h0m1 3h0m0 30h0m0-43h0m0 22h0m1 26h0m0-43h0m0 2h0m0-28h0m0 14h0m0-6h0m0 23h0m0 29h0m1-65h0m0 29h0m0 30h0m0-33h0m0-22h0m1-3h0m0 50h0m0-105h0m0 106h0m0-81h0m0 16h0m1 42h0m0-9h0m0 39h0m0-68h0m0 19h0m1-9h0m0 64h0m0-2h0m0-29h0m0-19h0m0 46h0m1-32h0m0-47h0m0 9h0m2 84h0m0-33h0m0-23h0m0 17h0m1-18h0m0-31h0m0 63h0m0 11h0m0-148h0m0 68h0m0-77h0m1 86h0m0 34h0m0 28h0m0-24h0m2 24h0m0-85h0m0 46h0m0 18h0m0-45h0m1 30h0m0-17h0m0 4h0m0 56h0m0-16h0m0 25h0m0 10h0m0-65h0m1 38h0m0-11h0m0-32h0m0 32h0m0-10h0m0-76h0m1 57h0m0-61h0m0 32h0m0 66h0m0-53h0m0-81h0m1 92h0m0 1h0m0 31h0m0-5h0m0-34h0m1 11h0m0 26h0m1-19h0m0 11h0m0-79h0m0 30h0m0 60h0m1-26h0m0 82h0m0-89h0m0 46h0m0-95h0m1 43h0m0 7h0m0 1h0m0-9h0m1 47h0m0 38h0m0-61h0m0 54h0m1 3h0m0 3h0m0-82h0m0 96h0m0-130h0m0 94h0m1-40h0m0 4h0m1-4h0m0 17h0m1-117h0m0 110h0m0-25h0m0 10h0m0 13h0m0-7h0m1-109h0m0 120h0m0 2h0m0-49h0m0 68h0m0-30h0m0 29h0m1-110h0m0 2h0m0 71h0m0 12h0m0 81h0m0-133h0m0 25h0m1-1h0m0-12h0m0-58h0m0 152h0m0-30h0m0-20h0m1-53h0m0 72h0m0-99h0m0 97h0m0-44h0m0 0h0m1 5h0m0 9h0m0 67h0m0-78h0m0 60h0m2-3h0m0-6h0m0-16h0m0-12h0m0-12h0m1 63h0m0-44h0m0-50h0m0 16h0m1 25h0m0 30h0m0-44h0m0 28h0m0-25h0m1 96h0m0-96h0m1-23h0m0-26h0m0 19h0m0 32h0m0 4h0m0 5h0m0-57h0m1-80h0m0 139h0m0-54h0m0 35h0m1 3h0m0-87h0m0 39h0m1 70h0m0-18h0m0 45h0m1-82h0m0 56h0m1 16h0m0 3h0m0-33h0m0-26h0m0 58h0m0-37h0m1-1h0m0 37h0m0 1h0m0 12h0m0-35h0m1-15h0m0 29h0m0-37h0m0-4h0m1 37h0m0 9h0m0-51h0m0 64h0m0-16h0m1-15h0m0-45h0m0-77h0m1 120h0m0 65h0m0-36h0m0-12h0m0 32h0m0-175h0m1 105h0m0 53h0m0-39h0m0-29h0m0 53h0m0-2h0m1-53h0m0 74h0m1-47h0m0-20h0m0-21h0m0 39h0m0-11h0m0 65h0m0 1h0m1-55h0m0 18h0m0-50h0m0 0h0m0 48h0m1-19h0m0 89h0m0-115h0m0 46h0m0-7h0m1 28h0m0-4h0m0-19h0m0 31h0m0-72h0m0 63h0m0-34h0m1 27h0m0-11h0m0-33h0m0-85h0m0 136h0m1-52h0m0-35h0m0 75h0m0 2h0m0-100h0m1 134h0m0-19h0m0-36h0m0 33h0m0-52h0m1 26h0m0-15h0m0-50h0m0 73h0m1 41h0m0-50h0m0-35h0m0-17h0m0-60h0m0 141h0m0 8h0m1-66h0m1 44h0m0-132h0m1 84h0m0 41h0m0-20h0m0 18h0m1-36h0m0 81h0m1-16h0m0-81h0m1 101h0m0-197h0m0 134h0m0 47h0m1-17h0m0-53h0m0-10h0m0 16h0m0-21h0m1 1h0m0 104h0m0-113h0m0 120h0m1-89h0m0 3h0m0-7h0m0 17h0m1-32h0m0 35h0m0-30h0m0 57h0m0-14h0m1 26h0m0-13h0m0-3h0m0-87h0m0 65h0m0-64h0m1 22h0m0 53h0m0 26h0m0-26h0m1 25h0m0-44h0m0-2h0m1-11h0m0 75h0m0-47h0m0 49h0m1-103h0m0 20h0m0-25h0m0 75h0m0-43h0m0 61h0m1-16h0m0-91h0m0 123h0m1-62h0m0-17h0m0-34h0m0 35h0m0 94h0m0-47h0m1-77h0m0 31h0m0 37h0m0-45h0m0 0h0m1 17h0m0 27h0m1-25h0m0 70h0m0 27h0m1-125h0m0 49h0m0 4h0m1 20h0m0-31h0m0 47h0m0 2h0m0 8h0m0 2h0m1-55h0m0 58h0m0-113h0m0-25h0m1 105h0m0-84h0m0 15h0m1 128h0m0-75h0m0-60h0m1 44h0m0 6h0m0-21h0m0-49h0m0 95h0m0-80h0m1 37h0m0-23h0m0 51h0m0 15h0m0 64h0m0-136h0m0-27h0m1 89h0m0-23h0m0 19h0m0 0h0m0-9h0m1 4h0m0 4h0m0-12h0m0-2h0m0-3h0m0 66h0m0-21h0m0-157h0m0 2h0m0 75h0m1 25h0m1 42h0m0-84h0m0 42h0m0 49h0m0-38h0m0-51h0m1 34h0m0 9h0m0 16h0m0-32h0m0 32h0m0-10h0m0 81h0m1-58h0m0-41h0m0 12h0m0 24h0m0-14h0m1 7h0m0-40h0m0 27h0m0-9h0m0 49h0m1-162h0m0 12h0m0 92h0m1 6h0m0-22h0m1 21h0m0 26h0m0-7h0m1-10h0m0 10h0m0-71h0m0 121h0m0-75h0m0 63h0m0-57h0m1 59h0m0 23h0m0-109h0m0-15h0m0 13h0m1 79h0m0 3h0m0-68h0m0-9h0m0 49h0m1 31h0m0-21h0m0 62h0m0-57h0m0-8h0m1-36h0m0-2h0m0 37h0m0-85h0m1 83h0m0-15h0m0-109h0m0 94h0m0-26h0m0-1h0m0 35h0m0 2h0m0 7h0m0 47h0m1-57h0m0-2h0m0 36h0m1-45h0m0 83h0m1-13h0m0-150h0m0 112h0m0-31h0m0-2h0m0 57h0m1-60h0m0-83h0m0 89h0m1 33h0m0 5h0m1 18h0m0 35h0m0-36h0m0-55h0m0 23h0m0 3h0m0-9h0m1 3h0m0-14h0m0 6h0m0 29h0m0-26h0m0-123h0m1 7h0m0 167h0m0-44h0m0-67h0m0 94h0m0-18h0m0 26h0m1-53h0m0 4h0m1-8h0m0 16h0m0 15h0m0 95h0m1-122h0m0 57h0m0-93h0m0 85h0m0-150h0m1 175h0m0-67h0m0 12h0m0-6h0m0-39h0m0 23h0m0-14h0m1-24h0m0-48h0m0 64h0m0 77h0m1-97h0m0 74h0m1-34h0m0 2h0m0-30h0m0 73h0m1 45h0m0-62h0m1 3h0m0-2h0m0-16h0m0-26h0m0-87h0m1 115h0m0 32h0m0-47h0m0-22h0m0-13h0m0 52h0m1 62h0m0-38h0m0-33h0m1-32h0m0 68h0m0-21h0m0-53h0m0 23h0m1-11h0m0 23h0m0 14h0m1 26h0m0-119h0m1 147h0m0-52h0m0 44h0m0-63h0m0-36h0m1 131h0m0-109h0m0 89h0m0-67h0m0 39h0m1 34h0m0-76h0m0-20h0m0-4h0m0 2h0m0 22h0m0-4h0m1-53h0m0 73h0m0 3h0m0-48h0m0 41h0m1 42h0m0-84h0m0 44h0m1-69h0m0 25h0m1 66h0m0-45h0m0 13h0m0 60h0m1-9h0m0-36h0m0 0h0m0-91h0m0 99h0m0-27h0m0 47h0m0 3h0m0-20h0m0 30h0m1-7h0m0-14h0m0 50h0m0-44h0m1-26h0m0 41h0m0-73h0m0 28h0m0-51h0m1 27h0m0 13h0m0 24h0m0-12h0m0-10h0m1-29h0m0-38h0m0 119h0m0-33h0m0-79h0m0 62h0m1-17h0m0-4h0m0 20h0m0-2h0m1-18h0m0 5h0m0-83h0m0 92h0m0 14h0m1-39h0m0 92h0m0-70h0m0-41h0m0 49h0m0-12h0m0-41h0m0 80h0m2 22h0m0 16h0m0-24h0m0-38h0m0 64h0m0-136h0m0 90h0m0-65h0m1 61h0m0-36h0m0 24h0m0 38h0m0-27h0m0-37h0m0 13h0m1 90h0m0-91h0m0 27h0m0 24h0m0 38h0m0-36h0m1-28h0m0 9h0m0 1h0m0 92h0m0-76h0m1-35h0m0 16h0m0-42h0m0 65h0m0-63h0m1-9h0m0 13h0m0 51h0m1-139h0m0 136h0m0-6h0m0 41h0m0-73h0m1 54h0m0-77h0m0 35h0m1-82h0m0 106h0m0-24h0m0 44h0m0-20h0m0-58h0m0-5h0m0-19h0m0-20h0m1 49h0m0-55h0m1 97h0m0-36h0m0-33h0m1 18h0m0 14h0m0 28h0m0-47h0m0 72h0m0 50h0m0-40h0m0-59h0m0-21h0m1 96h0m0-179h0m0 116h0m0 0h0m0-12h0m1-37h0m0 55h0m0 25h0m0-29h0m1-53h0m0 59h0m0-44h0m0 18h0m1 1h0m0 21h0m0 14h0m0 19h0m0 11h0m1-22h0m0-55h0m0 44h0m1 43h0m0-15h0m1-41h0m0-46h0m0 48h0m0 89h0m0-35h0m0-104h0m0 148h0m0-110h0m1-13h0m0-43h0m0 62h0m0 54h0m1-9h0m0-30h0m0 0h0m0-13h0m0 10h0m1 9h0m0 4h0m0-50h0m0 16h0m0-22h0m1 36h0m0 48h0m0-60h0m0 40h0m0-27h0m0-34h0m0 24h0m1 79h0m0-33h0m0-96h0m0 68h0m0-3h0m0-23h0m0-107h0m1 183h0m1 5h0m0-84h0m0 8h0m1-116h0m0 117h0m0-15h0m1 20h0m0 1h0m0-3h0m0 19h0m1-20h0m0 19h0m0 22h0m0 42h0m0-50h0m1 45h0m0 7h0m0-101h0m0 78h0m0-18h0m1-20h0m0 35h0m1-51h0m0 14h0m1 35h0m0-27h0m0 84h0m0-55h0m0-89h0m1 62h0m0 13h0m0-32h0m0 12h0m1-47h0m0 56h0m0 17h0m1-12h0m0 76h0m0-101h0m0-4h0m0 80h0m0 28h0m0-119h0m0 24h0m1-102h0m0 138h0m0-46h0m0 19h0m0-47h0m0-94h0m1 152h0m0-71h0m0 26h0m0-21h0m0-21h0m0 16h0m0 25h0m1 51h0m0-36h0m0-2h0m0-10h0m0 57h0m0-20h0m0 5h0m0-48h0m1 28h0m0 19h0m0-37h0m0 9h0m0 36h0m1-59h0m0 35h0m0 7h0m0 28h0m0-67h0m0 6h0m0 103h0m0-218h0m1 125h0m0 2h0m0 60h0m0-112h0m0-9h0m1 109h0m0-25h0m0-34h0m0 30h0m0-145h0m1 99h0m0 35h0m0 6h0m0-4h0m2-3h0m0-134h0m1 92h0m0 46h0m2-53h0m0 60h0m0-11h0m1 26h0m1-9h0m0 28h0m0-61h0m0 27h0m1 40h0m0-27h0m0-22h0m0 3h0m3-81h0m0 52h0m0 33h0m0 31h0m0-53h0m1 53h0m0-45h0m0 39h0m0 6h0m1-1h0m0-98h0m0 108h0m1-73h0m0 30h0m0-20h0m0 35h0m0-66h0m0 18h0m0-2h0m0-71h0m0 128h0m0 1h0m1 3h0m0-22h0m0 26h0m0-88h0m0 65h0m0 4h0m1-108h0m1 19h0m0 70h0m0-20h0m0 9h0m0 35h0m0-31h0m1-22h0m0 27h0m0-15h0m1 89h0m0-179h0m0 160h0m0-56h0m1-92h0m0 164h0m0-42h0m0-53h0m0 22h0m0-39h0m0 11h0m0 40h0m0-96h0m1 48h0m0 11h0m0-59h0m0 115h0m1-12h0m0 31h0m0-100h0m1 34h0m0 0h0m0-83h0m0 85h0m0-31h0m0 46h0m0 50h0m0 46h0m1-97h0m1 5h0m0 29h0m0 20h0m0-103h0m0 64h0m0-6h0m0 5h0m0-5h0m0 2h0m0-46h0m1 116h0m0-54h0m0-61h0m0 39h0m0-83h0m0 96h0m0 21h0m1-114h0m0 7h0m0 51h0m1 26h0m0-80h0m0 117h0m0-53h0m1 39h0m0-42h0m0 5h0m0-80h0m1 137h0m0-40h0m0-23h0m0 12h0m0 61h0m0-15h0m1-66h0m1-100h0m0 155h0m0 1h0m0-5h0m1-140h0m0 108h0m1-12h0m0-5h0m0 41h0m0-51h0m0 2h0m0-22h0m0 3h0m1 9h0m1 21h0m0 43h0m0-25h0m1 30h0m0-44h0m0 36h0m0 28h0m0 1h0m1-62h0m0 55h0m1-88h0m0 30h0m0 22h0m0 17h0m0-3h0m0-139h0m1 158h0m1-57h0m0 49h0m0-69h0m1 83h0m0 8h0m0-52h0m0 2h0m1 7h0m0-76h0m0 26h0m0 44h0m0 19h0m1 28h0m0-65h0m0 41h0m1-43h0m0 39h0m0-49h0m0 10h0m0 66h0m0-101h0m1 8h0m0 53h0m0-70h0m0 59h0m0-5h0m0-57h0m0 74h0m1-7h0m0 7h0m0-56h0m0-36h0m1 105h0m0-54h0m1 73h0m0-21h0m0-30h0m0 71h0m1-63h0m1 17h0m0-34h0m0 4h0m0 67h0m0 7h0m1-21h0m0-17h0m0-3h0m0 3h0m0-28h0m0-57h0m0 96h0m1-137h0m0 118h0m0-2h0m0-26h0m1 68h0m0-55h0m0 16h0m0 21h0m1-33h0m0-23h0m0 20h0m1 15h0m0-25h0m1 0h0m0-62h0m0 35h0m0 41h0m1 25h0m0-10h0m0-50h0m0 82h0m1-119h0m0 30h0m0 32h0m0-53h0m0-21h0m0 164h0m0-55h0m1-3h0m0-45h0m1 33h0m0-9h0m0 12h0m0-54h0m1 65h0m0-10h0m0-15h0m0-92h0m0 206h0m1-31h0m0-111h0m0-43h0m0 84h0m0-30h0m1 3h0m0 31h0m1 16h0m0-18h0m0 19h0m1-75h0m1-6h0m1-29h0m0 58h0m0 2h0m0 24h0m0-7h0m1 44h0m0-141h0m0 123h0m0-56h0m0 70h0m0-15h0m0-47h0m1-97h0m0 104h0m0 8h0m0 60h0m0-29h0m1-25h0m0 7h0m1-5h0m0-39h0m0 1h0m0 58h0m0 10h0m0 27h0m1-60h0m0-23h0m0 19h0m0-46h0m0 71h0m1 12h0m0-108h0m0 20h0m1-81h0m0 132h0m0 34h0m0-61h0m0-44h0m0 89h0m0-2h0m1-19h0m0 57h0m0 9h0m0 15h0m0-106h0m0-79h0m0 136h0m1-53h0m0 70h0m0-21h0m0 11h0m0-41h0m0 23h0m0 49h0m0-94h0m1-11h0m0 2h0m0 55h0m0-6h0m1 36h0m0-154h0m0 77h0m1 28h0m0 56h0m0 0h0m0-82h0m0-89h0m0 95h0m1-72h0m0 10h0m0 117h0m0-38h0m0 24h0m0 27h0m1-58h0m0 63h0m1-59h0m0-21h0m0 13h0m0-22h0m0-5h0m0 22h0m0 37h0m1 0h0m0-1h0m0-9h0m0 0h0m0-10h0m1-42h0m0 99h0m0-105h0m1 95h0m0-7h0m0-131h0m0 104h0m0-119h0m0 58h0m0-3h0m0 4h0m0 73h0m0-33h0m0 77h0m1-20h0m0-115h0m0 79h0m0-26h0m0-8h0m0 2h0m0 76h0m1-136h0m0 8h0m0 44h0m1 51h0m0-14h0m0 17h0m1-23h0m0 3h0m0-100h0m0 77h0m0-81h0m0 96h0m0 3h0m0-10h0m1-22h0m0-105h0m0 102h0m0 48h0m1-41h0m0 11h0m0-92h0m0 80h0m0 18h0m0-47h0m0 68h0m0-6h0m0 27h0m1 17h0m0-40h0m0-31h0m1 35h0m0-17h0m0-95h0m1 47h0m0 50h0m0 19h0m0-34h0m0 12h0m0-4h0m0-20h0m0-1h0m1 16h0m0 27h0m0-80h0m0 61h0m0-22h0m0-21h0m1 76h0m0-68h0m0 28h0m0 46h0m1-58h0m0 12h0m0-15h0m0 54h0m0 62h0m0-66h0m0-19h0m1-53h0m0 15h0m0-33h0m0 53h0m0-29h0m0 65h0m0-79h0m0 9h0m1 46h0m0-44h0m0 28h0m0 38h0m0 9h0m0-3h0m1-39h0m0 38h0m0-18h0m1-42h0m0 33h0m0-84h0m1 133h0m0-36h0m0-18h0m0-7h0m0 32h0m1-42h0m0 56h0m0-5h0m0-73h0m0 96h0m1-37h0m0-83h0m0 116h0m0-96h0m1 13h0m0 16h0m0 11h0m0 76h0m0-54h0m0 4h0m0-51h0m0-1h0m0 84h0m0 42h0m1-55h0m0-95h0m0 65h0m0 3h0m0-24h0m0 34h0m0-21h0m1-20h0m0 58h0m0-45h0m0-11h0m0 4h0m1 0h0m1-62h0m0 72h0m0 3h0m0-27h0m0 35h0m0 43h0m0-11h0m1-19h0m0-46h0m0 56h0m0-9h0m0-55h0m2-8h0m0 36h0m0 55h0m1-44h0m0 2h0m1 23h0m0-87h0m0-9h0m0 64h0m0-110h0m0 94h0m1 7h0m0-29h0m0 38h0m0-32h0m0 38h0m1 31h0m0 16h0m0-43h0m0-21h0m1-24h0m0 40h0m0 65h0m0-46h0m1-115h0m0 127h0m1 17h0m0-65h0m0-52h0m1 74h0m1-133h0m0 123h0m0 24h0m1 11h0m0-79h0m0 58h0m0 50h0m1-84h0m0 114h0m0-132h0m1 34h0m0 14h0m0-70h0m0 29h0m0 27h0m1 99h0m0-154h0m0 29h0m0 108h0m0-140h0m0 89h0m0-19h0m1-52h0m0 92h0m1-112h0m0 58h0m0 51h0m0 0h0m0-32h0m0-25h0m0 47h0m1-13h0m0-37h0m0 83h0m0-54h0m1-51h0m0 89h0m0-40h0m0-6h0m0 2h0m0 29h0m0-80h0m1 55h0m0 35h0m0-38h0m1-57h0m0 34h0m1 92h0m0-111h0m0 87h0m0-91h0m0 80h0m0-87h0m1 14h0m0 45h0m0-6h0m0-94h0m0 24h0m1 7h0m0 81h0m0-22h0m0 31h0m0-35h0m1-14h0m0 43h0m0-56h0m1 5h0m0 43h0m0-27h0m0-64h0m0 70h0m2 35h0m0 20h0m0-144h0m0 80h0m1-25h0m0 20h0m1 14h0m0-58h0m0 83h0m0-21h0m0 14h0m1 3h0m0 23h0m0-57h0m0 34h0m0 15h0m1-60h0m0-8h0m0 69h0m0-36h0m0-26h0m0-20h0m0-5h0m0 66h0m1 22h0m0 16h0m0-48h0m1-15h0m0 96h0m0-60h0m0 15h0m0-41h0m1 32h0m0 26h0m0-93h0m0 54h0m0-52h0m0 39h0m0 37h0m1 16h0m0 2h0m0-38h0m1-14h0m0-96h0m1 56h0m0 42h0m1-24h0m0-21h0m0 14h0m0 12h0m1-7h0m0 70h0m2-45h0m0 43h0m0-114h0m1 39h0m0 40h0m0 5h0m0-1h0m0-30h0m0 30h0m1-5h0m0 24h0m0-48h0m0-4h0m0 56h0m1-55h0m0 27h0m0-36h0m1-4h0m0 51h0m0-140h0m0 76h0m1 87h0m0-73h0m0-17h0m0 30h0m1 75h0m0-85h0m0 42h0m0-34h0m0-49h0m1 73h0m0 30h0m0 6h0m0-62h0m1 67h0m0 6h0m0-60h0m1-33h0m0 34h0m0-55h0m0 23h0m0 19h0m0 8h0m1-15h0m0-43h0m0 38h0m0-13h0m0-74h0m1 179h0m0-22h0m0-34h0m0 50h0m0-75h0m1-108h0m0 79h0m0 85h0m0-99h0m0 32h0m1 77h0m0-26h0m0-65h0m0 156h0m0-134h0m0 22h0m1-39h0m0 3h0m1-54h0m0 154h0m0-74h0m0 31h0m0-102h0m0 37h0m1 70h0m0 20h0m0-34h0m0-31h0m1-21h0m0-64h0m0 140h0m0-29h0m0-8h0m1-26h0m0-25h0m0 35h0m1 10h0m0-75h0m0 74h0m0-33h0m0 42h0m0 9h0m0 12h0m0 3h0m1-18h0m0-17h0m0-30h0m1 0h0m0 55h0m0 0h0m0-41h0m0 8h0m1 39h0m0-17h0m0 60h0m1-182h0m0 162h0m0-49h0m0 104h0m0-94h0m0-117h0m1 136h0m0-21h0m1 25h0m0-78h0m0 22h0m0 47h0m1-72h0m0 61h0m0-9h0m0-64h0m1 5h0m0 65h0m0-24h0m0 28h0m0-39h0m0 43h0m1-48h0m0-39h0m0 77h0m0-39h0m1 34h0m0-8h0m0-82h0m1 133h0m0-52h0m0 14h0m0-58h0m1 53h0m0 47h0m0-99h0m0 71h0m0-19h0m0 18h0m1 1h0m0-53h0m1 114h0m0-41h0m0-53h0m1 21h0m1 9h0m0-70h0m0 42h0m0 43h0m0-66h0m1 122h0m0-85h0m0-8h0m0-21h0m0 31h0m0 30h0m0-141h0m1 132h0m0-16h0m1 69h0m0-151h0m0 81h0m0-70h0m1 74h0m0-124h0m0 56h0m1 7h0m0 57h0m1-17h0m0 14h0m0 17h0m0 5h0m0-14h0m0-49h0m1-1h0m0 4h0m0 8h0m0 52h0m1-29h0m0 12h0m0 19h0m0-57h0m1-13h0m0 15h0m0 73h0m1-21h0m0-42h0m1-2h0m0-4h0m0 44h0m1 4h0m0-67h0m0 12h0m0-61h0m0 74h0m1-10h0m1 28h0m0 2h0m1 67h0m0-100h0m0 75h0m0-45h0m0-133h0m0 114h0m0-72h0m1 122h0m0-45h0m1-4h0m0 83h0m1-74h0m0 13h0m0 57h0m0-64h0m0-20h0m0-3h0m1 43h0m0-43h0m0-10h0m0 14h0m0 68h0m0-77h0m1 49h0m0 0h0m0-38h0m1-31h0m0-3h0m0 147h0m0-142h0m0 118h0m0-154h0m1 126h0m0-51h0m0-26h0m0 39h0m0 9h0m0 76h0m0-66h0m0-33h0m0 13h0m0-32h0m0 58h0m1-70h0m0 73h0m0-9h0m0-33h0m0-76h0m1 56h0m0 51h0m0-42h0m0 59h0m0-145h0m1 85h0m0 20h0m1 4h0m0-55h0m0 48h0m0 30h0m0-87h0m0 94h0m0-7h0m0-59h0m1 32h0m0 17h0m0 17h0m0-50h0m0 51h0m1-20h0m0-59h0m0 58h0m0-30h0m0 11h0m1-47h0m1-35h0m0 99h0m0-32h0m1 48h0m0-142h0m1 62h0m0 25h0m0 67h0m0-145h0m1-8h0m0 122h0m0-22h0m0 56h0m0-43h0m0-44h0m1 5h0m0 66h0m0-30h0m0-28h0m0 39h0m0-59h0m1 78h0m0-72h0m0-6h0m0 71h0m0-64h0m0-47h0m0 169h0m0-51h0m0 5h0m2-109h0m0 70h0m0-25h0m0 65h0m0-19h0m1 73h0m0-99h0m0-29h0m0 48h0m0 48h0m0-110h0m0 92h0m1-6h0m0-78h0m0 66h0m1-30h0m0-43h0m0 111h0m1-106h0m1 34h0m0 17h0m0-51h0m0 106h0m0-81h0m0 29h0m1 4h0m0 28h0m0-23h0m0-53h0m0 74h0m1-38h0m0-17h0m0 70h0m0-24h0m0-26h0m0-33h0m0 33h0m1 30h0m0-18h0m0 56h0m0-74h0m1 20h0m0-65h0m0 60h0m0-4h0m0 39h0m0-78h0m1-10h0m0 52h0m0 3h0m0 54h0m1-44h0m0 24h0m0 12h0m0 15h0m0-160h0m1 69h0m0 6h0m0-12h0m0-10h0m1 120h0m0-82h0m0 29h0m0-40h0m1-3h0m0 14h0m0 19h0m0 1h0m0-70h0m1 73h0m0-24h0m0-18h0m0-28h0m0 48h0m1 6h0m0 42h0m0-26h0m0-28h0m1 73h0m0-62h0m0-124h0m1-22h0m0 151h0m0-113h0m0 87h0m1-13h0m0 14h0m0 15h0m0 112h0m1-122h0m0 41h0m0-43h0m0 18h0m0-16h0m1-38h0m1-7h0m0 70h0m0 43h0m0-62h0m0-17h0m0-123h0m1 121h0m0-106h0m1 122h0m0 7h0m1 10h0m0 26h0m0-43h0m1-24h0m0 59h0m0-36h0m0 54h0m0-50h0m0-119h0m0 159h0m0-99h0m0 67h0m1 36h0m0-33h0m0-2h0m1-8h0m0-34h0m0 58h0m0-21h0m1-41h0m0 49h0m0-31h0m0 44h0m0-39h0m1-53h0m0 48h0m0 27h0m1 13h0m0-8h0m0 15h0m1 33h0m0-127h0m0 99h0m0 20h0m0-85h0m0 50h0m0-52h0m0 40h0m1 44h0m0-13h0m0 4h0m0-18h0m0-63h0m0 37h0m1 79h0m0-90h0m0 32h0m1 12h0m0-29h0m0 31h0m0-72h0m0 58h0m1-1h0m0 12h0m0-25h0m2-66h0m0 66h0m0 18h0m0 22h0m0-80h0m0 8h0m1 77h0m0-19h0m0-28h0m0 55h0m0-17h0m1-40h0m0-16h0m0 23h0m1 70h0m0-99h0m1 34h0m0-20h0m1-39h0m0 30h0m0 80h0m0-75h0m1-33h0m0-82h0m1 44h0m0 47h0m0 51h0m0-29h0m0-6h0m0 19h0m1 78h0m0-119h0m0 65h0m0 37h0m0-58h0m1 1h0m0 23h0m0-11h0m0-19h0m0-79h0m1 63h0m0 26h0m0-71h0m0 74h0m0-80h0m1 70h0m0 66h0m0-148h0m0-44h0m1 113h0m0 28h0m0-22h0m0-3h0m0 24h0m1 39h0m0-55h0m0-20h0m0 44h0m0-23h0m1-10h0m0 80h0m0-65h0m0 34h0m0-32h0m1 56h0m0-90h0m0 4h0m0 20h0m0 32h0m1-64h0m0 60h0m1 14h0m0 8h0m0-60h0m0 40h0m0-66h0m1 100h0m0-30h0m0-7h0m0-82h0m0 62h0m1 5h0m0-5h0m0 49h0m0-23h0m1-43h0m0 13h0m0-38h0m0-22h0m1 10h0m0 83h0m1 1h0m0-10h0m0-57h0m0 35h0m0 21h0m0-66h0m0 59h0m1 6h0m0-52h0m0-43h0m1 131h0m0 6h0m0-131h0m0 56h0m0-19h0m0 31h0m0-1h0m1 48h0m0-61h0m0-56h0m1 74h0m0-39h0m0 79h0m0-63h0m0 3h0m0-28h0m0 82h0m1-40h0m0 63h0m0-122h0m0 24h0m0-19h0m1 44h0m0 56h0m0 20h0m0-67h0m1 35h0m0-36h0m1 13h0m0 1h0m0-11h0m0 59h0m0-78h0m0 2h0m1-26h0m0-26h0m0 122h0m0-23h0m0 41h0m0-18h0m0-90h0m0 79h0m0-50h0m1 36h0m0-62h0m0 75h0m0-27h0m1-36h0m0 11h0m1 34h0m0-51h0m0-14h0m0 37h0m0 83h0m0-97h0m1 43h0m0-104h0m0 64h0m1 53h0m1-1h0m0-5h0m1-76h0m0-13h0m0 88h0m0-20h0m0 43h0m1-104h0m0 99h0m0-61h0m0 76h0m0-132h0m0 78h0m1-67h0m0 45h0m0 18h0m2 42h0m0-116h0m0 35h0m0 33h0m1 10h0m0-49h0m0 93h0m0 2h0m1-11h0m0-79h0m0 96h0m0-25h0m0-29h0m1 78h0m0-56h0m0-124h0m1 98h0m0 35h0m0 1h0m1-96h0m0 48h0m0-1h0m0 19h0m1 9h0m0-67h0m1 75h0m0 63h0m0-89h0m1-14h0m0 23h0m0-13h0m0 4h0m0 3h0m1-60h0m0 19h0m0 31h0m0-44h0m0 79h0m1 23h0m0 5h0m1-3h0m0-111h0m0 23h0m0 26h0m1 19h0m0-70h0m0 131h0m0-34h0m0-110h0m1 102h0m0-34h0m0 11h0m0 25h0m0-41h0m1-77h0m0 136h0m0 18h0m0-65h0m0-60h0m2 88h0m0 23h0m0 0h0m1-37h0m0 6h0m0-52h0m1 68h0m0 1h0m0-63h0m0 24h0m1-113h0m0 158h0m0-74h0m0-69h0m0 144h0m0-61h0m0 35h0m1-74h0m0 58h0m1-1h0m1 31h0m0-27h0m0-121h0m1 36h0m0 89h0m0 26h0m0-20h0m1 14h0m0-32h0m0 8h0m0-3h0m1 4h0m0-51h0m0 80h0m0-3h0m0-51h0m0 6h0m0 24h0m1-132h0m0 61h0m0 44h0m1-7h0m0-28h0m1 96h0m0 6h0m0-8h0m0-93h0m1 63h0m0-46h0m0 65h0m0-73h0m0 36h0m1-32h0m0 23h0m0 14h0m1-35h0m0 28h0m0 24h0m0-39h0m0 28h0m0 28h0m0-74h0m1 43h0m0 13h0m0-22h0m0 42h0m0-28h0m1-55h0m0 31h0m1 22h0m0 11h0m0-38h0m1 15h0m1-10h0m0-12h0m0 68h0m0-80h0m0 15h0m0 46h0m0 10h0m0-94h0m1-16h0m0-22h0m0 128h0m0-93h0m1-2h0m0 53h0m0 18h0m0 21h0m1-5h0m0-76h0m0 134h0m0-48h0m0 5h0m1 19h0m0-86h0m0 57h0m1-50h0m0-9h0m0 72h0m1-71h0m0 27h0m0 18h0m1-28h0m0 11h0m0 15h0m0 40h0m0-79h0m0 41h0m0-51h0m1 3h0m0 6h0m0 28h0m0-18h0m0-31h0m1 55h0m0 8h0m0 1h0m2 29h0m0 25h0m0-84h0m0 24h0m1-7h0m0-28h0m1 54h0m0-67h0m0 24h0m0 13h0m0 5h0m1-38h0m0-66h0m0 83h0m0 58h0m1-47h0m0 49h0m0-61h0m0-33h0m0 1h0m0 51h0m0 44h0m1-15h0m0-39h0m0 37h0m0-54h0m0 33h0m1 36h0m1-89h0m0 60h0m0 12h0m0 6h0m0-19h0m0-61h0m1 50h0m0-19h0m0-47h0m0 97h0m0-56h0m1 37h0m0-18h0m0 86h0m0-188h0m0 137h0m1-33h0m0 51h0m0-32h0m0-54h0m0-62h0m0 98h0m0-15h0m1-32h0m0 80h0m1-15h0m1 59h0m0-126h0m0 54h0m1-25h0m0 40h0m0-52h0m0-47h0m0 95h0m1-28h0m0 1h0m0-25h0m0 116h0m0-81h0m1 31h0m0 24h0m1-1h0m1-27h0m1-28h0m0 35h0m0 30h0m0-42h0m0-53h0m0-30h0m0 54h0m1-20h0m0-3h0m0 69h0m1 6h0m0-75h0m0 23h0m1 24h0m0-10h0m0 7h0m0 7h0m1-61h0m0 11h0m0 0h0m0 20h0m2 41h0m0-27h0m0 47h0m0 40h0m0-73h0m0-21h0m1 39h0m0-60h0m0 51h0m1-1h0m0 20h0m1-4h0m0-71h0m0 66h0m0-44h0m0 58h0m0-59h0m0 69h0m0-97h0m0 43h0m1 58h0m0-78h0m0 59h0m0-37h0m0-26h0m1 4h0m0 13h0m1-18h0m0-48h0m0 61h0m0 0h0m0-60h0m0 118h0m0-56h0m0-31h0m1 70h0m0-71h0m0 20h0m0 51h0m0-63h0m1-52h0m0 97h0m0-65h0m1-22h0m0 3h0m0 74h0m0 20h0m1-20h0m0-119h0m0 90h0m0-70h0m0 119h0m0-14h0m0-1h0m0 27h0m1-36h0m0 39h0m1-62h0m0 10h0m0 27h0m1 49h0m0-126h0m0 44h0m0-81h0m0 149h0m1-77h0m0 60h0m0-32h0m0 8h0m0-56h0m0 105h0m0-46h0m1-23h0m0-40h0m0 26h0m1-57h0m0 47h0m0 60h0m1-63h0m0 16h0m0 10h0m0 35h0m1-19h0m0-122h0m0 121h0m1-52h0m0 37h0m2 4h0m0 4h0m0 36h0m0-52h0m0-11h0m0 66h0m1-15h0m0 5h0m1-59h0m0 46h0m0-2h0m0-36h0m1-96h0m0 177h0m0-47h0m0 11h0m1 25h0m0-114h0m1-43h0m0 141h0m0-1h0m0-27h0m0-33h0m0 6h0m1 16h0m0 57h0m0 17h0m0-50h0m0-24h0m1-9h0m0-21h0m0 52h0m0 1h0m2-43h0m0 45h0m0-50h0m0 121h0m1-88h0m0 2h0m0-2h0m0-19h0m0 29h0m1-3h0m0 20h0m0-49h0m0 40h0m0-5h0m1 17h0m0-132h0m0 135h0m0-103h0m0 84h0m1-41h0m0 77h0m0-112h0m0-14h0m1 78h0m0 5h0m0-53h0m0 76h0m1-31h0m0 15h0m1 22h0m0-32h0m0-35h0m1-16h0m1 61h0m0-58h0m0 36h0m0 25h0m0-37h0m0 47h0m0-102h0m1-57h0m0 118h0m0 9h0m0-7h0m0 42h0m1 3h0m0-22h0m0-15h0m0 33h0m0-3h0m1 36h0m0-58h0m0-16h0m0-7h0m0 36h0m1-22h0m0-32h0m1 23h0m0 21h0m0 4h0m0-16h0m1 5h0m0 19h0m0-40h0m0 34h0m0-34h0m0 45h0m1-54h0m0 35h0m0-72h0m0 100h0m0-82h0m0 43h0m1-26h0m0-25h0m1 74h0m0-6h0m0-14h0m0-22h0m0 25h0m0-52h0m1-11h0m0 109h0m0-186h0m0 139h0m0-34h0m1 28h0m0-21h0m0-49h0m0 122h0m0-89h0m1 49h0m0-44h0m1 56h0m0-5h0m0-7h0m1 8h0m0-66h0m0 29h0m0 67h0m1-47h0m0 5h0m0 10h0m0-51h0m0 34h0m0 2h0m1-30h0m0 109h0m0-79h0m0-31h0m0-1h0m0-59h0m1 110h0m1-47h0m0 19h0m1 37h0m0-40h0m0-1h0m0 101h0m0-169h0m1 81h0m0-47h0m0 46h0m1 67h0m0-93h0m0 76h0m0-78h0m1 5h0m0-36h0m1 65h0m0-46h0m0 5h0m1 20h0m0-70h0m0 86h0m0 1h0m0 19h0m0-38h0m1 7h0m0 2h0m0 53h0m0 47h0m1-70h0m0 24h0m1-18h0m0-34h0m1 60h0m0-39h0m1 39h0m0-4h0m0-92h0m0 89h0m0-43h0m1 48h0m0-29h0m0 1h0m0 5h0m0-36h0m1-12h0m0 15h0m0-20h0m0 41h0m0-40h0m0 12h0m0 26h0m1-66h0m0 96h0m0 4h0m1-51h0m0 2h0m0 58h0m0-69h0m0 69h0m1-28h0m0-11h0m0-18h0m0-84h0m0 81h0m1-8h0m0 30h0m0 55h0m0-102h0m0 58h0m1-75h0m0 59h0m0 68h0m1-93h0m0-2h0m0 17h0m0 12h0m0 27h0m0-39h0m1 2h0m0 18h0m0-9h0m0-7h0m1 30h0m0 11h0m0-82h0m0 104h0m0-19h0m0-54h0m0-1h0m1 27h0m1-25h0m0 26h0m0 18h0m0-43h0m1 20h0m0-1h0m1-47h0m0-1h0m0 29h0m0-2h0m0-53h0m0 56h0m0-113h0m0 141h0m0-5h0m1-41h0m0-21h0m0-7h0m0 33h0m1 4h0m0 22h0m0-65h0m0 75h0m0 47h0m0-90h0m0 8h0m1 78h0m0-69h0m0 51h0m0-27h0m0-46h0m0 73h0m1-24h0m0-50h0m0 45h0m0-53h0m0 23h0m1-9h0m0 2h0m0-44h0m0 131h0m0-148h0m0 114h0m0-43h0m0 53h0m1 14h0m0-63h0m0-26h0m1 68h0m0-94h0m0 17h0m0 80h0m0-13h0m0-3h0m0-27h0m0-1h0m0 18h0m1-129h0m0 112h0m0-2h0m0 42h0m0-23h0m1 30h0m0-28h0m0-17h0m0 14h0m0 60h0m0-13h0m0-100h0m0 46h0m1 10h0m0-16h0m0-56h0m0 32h0m0-24h0m0 87h0m0-95h0m1 105h0m0-66h0m0-18h0m0-15h0m0-38h0m0-4h0m1 11h0m0 99h0m0 3h0m0-4h0m0-131h0m1 54h0m0 67h0m0-12h0m0-31h0m0 56h0m1-107h0m0 83h0m0 15h0m1 38h0m0-30h0m0-20h0m0-15h0m0 79h0m0-116h0m0 30h0m1 14h0m0-13h0m0 124h0m1-90h0m0 11h0m1-9h0m0-17h0m0 47h0m0 57h0m0-98h0m0-68h0m1 82h0m0-14h0m0-75h0m0 68h0m1-8h0m0 2h0m1 53h0m0-84h0m1 48h0m0 31h0m0-22h0m0-55h0m1 70h0m0-92h0m0 29h0m0-9h0m0 51h0m0-9h0m0-8h0m0 34h0m0-39h0m1 37h0m0-27h0m0 31h0m0-21h0m0-53h0m0 67h0m1 17h0m0-23h0m0 5h0m0-30h0m0-14h0m1 28h0m0-66h0m0-62h0m0 111h0m1 76h0m0 5h0m0-43h0m0-12h0m0 36h0m0-16h0m1 28h0m0-107h0m1 55h0m0 8h0m0 20h0m0-43h0m0 106h0m0-60h0m0-35h0m0 32h0m1-19h0m0-20h0m0-29h0m0 37h0m0-8h0m1 22h0m0-12h0m0-34h0m0 73h0m1-115h0m0 91h0m0-12h0m1-11h0m0 43h0m0-96h0m0 54h0m0 57h0m0-98h0m1 86h0m0-75h0m0 0h0m0 87h0m1 26h0m0-39h0m0-62h0m1 31h0m0-31h0m0-11h0m1 42h0m0-16h0m0-29h0m0 43h0m0-32h0m0-4h0m1 44h0m0-44h0m0 84h0m0-61h0m0 6h0m0-1h0m0 14h0m0-49h0m0 19h0m1 15h0m0 9h0m0-2h0m0 5h0m0 8h0m0 3h0m0-16h0m0 2h0m1 6h0m1-39h0m0 21h0m0 2h0m0-44h0m0 97h0m1-151h0m0 131h0m0-10h0m1-29h0m1 38h0m0 2h0m0-51h0m1-107h0m0 195h0m0-65h0m0-1h0m0 9h0m1-53h0m0 35h0m0 41h0m0-14h0m0 19h0m0-64h0m1 13h0m0 20h0m0-17h0m0-63h0m0 73h0m0-8h0m1-33h0m0-45h0m0 56h0m0 23h0m0-67h0m0-26h0m1 154h0m0-64h0m0 49h0m0-24h0m0 3h0m0-70h0m1 41h0m0 17h0m1-53h0m0-61h0m0 96h0m1 8h0m0 5h0m0-95h0m0 128h0m1-81h0m0 39h0m0-2h0m0 5h0m0 6h0m0 4h0m0 3h0m0 28h0m0-15h0m0 78h0m0-106h0m0-19h0m1 39h0m0-62h0m0 36h0m1-46h0m0 96h0m0-62h0m1 4h0m0 6h0m0-15h0m0 7h0m0-12h0m1 56h0m0 68h0m0-97h0m1 33h0m0-63h0m0 63h0m0-25h0m0 86h0m1-89h0m0 6h0m0-45h0m0 37h0m2-5h0m0 5h0m0 73h0m0-94h0m0 27h0m0-2h0m1-26h0m0 51h0m0-10h0m0-75h0m1 55h0m0-28h0m0-22h0m0 45h0m0 44h0m1-29h0m0-41h0m0 16h0m0 66h0m0-58h0m1 58h0m0-56h0m0 40h0m0 15h0m0-45h0m0-51h0m1 80h0m0-53h0m0 33h0m0 8h0m1-17h0m0-53h0m0 86h0m0 16h0m0-19h0m0-26h0m1 103h0m0-71h0m0-30h0m0 14h0m1 7h0m0-83h0m0 95h0m0-22h0m0-4h0m0 8h0m0-13h0m0-22h0m0 67h0m0-42h0m1-8h0m0 44h0m0-13h0m0-51h0m0-35h0m1 27h0m0 37h0m0-26h0m0 18h0m0-86h0m0 107h0m0 5h0m0-27h0m1-107h0m0 72h0m0-39h0m0 54h0m0-26h0m0 14h0m0 63h0m1-43h0m0-10h0m0 29h0m1-6h0m0-18h0m0 36h0m0-53h0m0 65h0m0-31h0m1 18h0m0-45h0m0-22h0m0-30h0m0 112h0m0-41h0m0-64h0m0 57h0m1 3h0m0 59h0m0 3h0m1-39h0m0-11h0m0 37h0m0-41h0m0-37h0m1 41h0m0-121h0m0 149h0m0-100h0m0 50h0m0 23h0m0-1h0m1 15h0m0-11h0m0-7h0m0-101h0m1 85h0m0 6h0m0 30h0m0 26h0m1-26h0m0 21h0m0-96h0m0 58h0m0-130h0m0 138h0m1-37h0m0 11h0m0-40h0m1 54h0m0-11h0m0-6h0m1-43h0m0 131h0m0-27h0m0-5h0m1-18h0m0-1h0m0-44h0m0 39h0m0-9h0m0-7h0m1 58h0m0-89h0m0 81h0m0-60h0m1-94h0m0 150h0m0-72h0m0 17h0m1 5h0m0 7h0m0-2h0m0-13h0m0-17h0m0 106h0m1-132h0m0 54h0m0-5h0m0 32h0m0-3h0m0-33h0m1 48h0m0 12h0m0-106h0m0 57h0m0 22h0m0-74h0m1 51h0m0-35h0m0 46h0m0-5h0m0 27h0m0-73h0m0 97h0m2-29h0m0 41h0m0-49h0m0-16h0m0 3h0m0-20h0m0 41h0m0-35h0m0-116h0m0 159h0m1-24h0m0-33h0m0-8h0m0 67h0m1-1h0m1-131h0m0 118h0m0-24h0m0-31h0m0 30h0m0 14h0m0 22h0m1-61h0m0 11h0m0-29h0m0 89h0m0-32h0m1 29h0m1-46h0m0-21h0m0 76h0m0-48h0m0 16h0m1 8h0m0 17h0m0-152h0m0 76h0m0 27h0m0 4h0m0 11h0m0-2h0m1 21h0m0-47h0m1-10h0m0 48h0m0-2h0m0-41h0m0-18h0m1 15h0m0 38h0m0-58h0m1 68h0m0-68h0m1-41h0m0 107h0m0-39h0m0-28h0m0 55h0m0-12h0m1-20h0m0 69h0m1 1h0m0-60h0m0 25h0m0-34h0m1-15h0m0 146h0m0-140h0m0 20h0m0 74h0m0-22h0m0 22h0m1-56h0m0-8h0m0 43h0m0-81h0m0 64h0m0-34h0m1 6h0m0 5h0m0-3h0m0 21h0m1-97h0m0 126h0m0-26h0m0-33h0m1-35h0m0 49h0m0 15h0m1-79h0m0 59h0m0-36h0m0 84h0m1-168h0m0 100h0m1-13h0m0 27h0m0-9h0m0-34h0m0-30h0m0 100h0m0-72h0m1 23h0m0-3h0m0 53h0m0-9h0m1-107h0m0 105h0m0 2h0m0-10h0m0-35h0m0-17h0m0 87h0m1 41h0m0-93h0m0-25h0m0 88h0m1-162h0m0 81h0m0-94h0m0 121h0m0-15h0m0 31h0m0 40h0m1-30h0m0 95h0m0-68h0m0-59h0m0 38h0m1-1h0m0-151h0m0 155h0m0 10h0m0-17h0m1 38h0m0-150h0m1 109h0m0-58h0m0 23h0m0-26h0m1 58h0m0 15h0m0-47h0m0-19h0m1-1h0m0 22h0m1 64h0m0-81h0m0 33h0m0-12h0m1 2h0m0 55h0m0-107h0m1 144h0m0-103h0m0 61h0m1 45h0m0-81h0m0-23h0m1 16h0m0-16h0m0 9h0m0 103h0m1-181h0m0 82h0m0 29h0m0 18h0m1-9h0m0-66h0m1 34h0m0 88h0m0-77h0m0 53h0m0-43h0m0 16h0m0-19h0m1-77h0m0 39h0m0 13h0m0 13h0m0-2h0m0-56h0m0 80h0m0-11h0m1-73h0m0 82h0m1 28h0m0 41h0m0-92h0m0 3h0m0 3h0m0 8h0m1 23h0m0-73h0m0-72h0m0 52h0m1 44h0m0 17h0m0-32h0m0-10h0m0-44h0m0 112h0m1 41h0m0 15h0m0-193h0m0 122h0m0 3h0m1-32h0m0 25h0m0-11h0m1-50h0m0 87h0m0-57h0m0-3h0m1-6h0m0 23h0m0-18h0m1 22h0m0-3h0m0 37h0m1-43h0m0-80h0m1 126h0m0-72h0m0 21h0m1 41h0m0-41h0m0 68h0m1-109h0m0 40h0m0 26h0m1-37h0m1 56h0m1-71h0m0 47h0m1-66h0m0 66h0m1 23h0m0-34h0m0-20h0m0 35h0m0 12h0m0-126h0m1 177h0m0-107h0m0 37h0m1 52h0m0-35h0m0-17h0m0-24h0m0 39h0m1-2h0m0-39h0m0 33h0m0-29h0m1-3h0m1 24h0m0-2h0m0 18h0m0-40h0m1-29h0m0 44h0m0-7h0m0-17h0m1-20h0m1 34h0m0 25h0m0-9h0m0-32h0m0 36h0m0-60h0m1 38h0m1-44h0m0 107h0m0-75h0m0 31h0m0 19h0m1 17h0m0-30h0m0-33h0m0 50h0m1-16h0m0-76h0m0 106h0m0-28h0m1 8h0m0-21h0m0-13h0m1-62h0m0 27h0m0 49h0m0 33h0m1-55h0m0-28h0m0 68h0m0-62h0m0 33h0m1 23h0m0 48h0m0-109h0m0 84h0m0-50h0m0 52h0m1-52h0m0-30h0m0 62h0m0-14h0m0 33h0m0-154h0m0 137h0m0-4h0m0 8h0m1-10h0m0-60h0m0 59h0m0 21h0m1 4h0m0-41h0m0 28h0m0-19h0m0-94h0m0 121h0m1 40h0m0-67h0m0 74h0m0-95h0m1-90h0m0 135h0m0-10h0m0 24h0m0-64h0m0 59h0m0-65h0m0 28h0m1-38h0m0 50h0m1-42h0m0 21h0m0 81h0m0-76h0m0 27h0m1-64h0m0 49h0m0-43h0m0-42h0m1 74h0m0 21h0m0-137h0m0 140h0m1-19h0m0 5h0m0 5h0m0-107h0m0 98h0m1 13h0m0 31h0m0-94h0m0 104h0m0-48h0m0 26h0m0-100h0m1 58h0m0 47h0m0-128h0m0 124h0m0-58h0m0 84h0m0-108h0m0 25h0m0 17h0m0-76h0m1 120h0m0-15h0m1-30h0m1-13h0m0 3h0m0 26h0m1 14h0m0-45h0m0 68h0m1-39h0m0 39h0m0-79h0m0 58h0m0-46h0m1-23h0m0 45h0m0 43h0m0 34h0m0-21h0m0 1h0m1-18h0m0-73h0m0 8h0m0 22h0m0-54h0m0 62h0m1 11h0m0-39h0m0-58h0m0 125h0m0 37h0m1-45h0m0-25h0m0-24h0m0 4h0m0-23h0m0-7h0m0 131h0m1-67h0m0 18h0m0-64h0m0 29h0m0 2h0m1 4h0m0 9h0m0 25h0m0-37h0m1-57h0m0 67h0m0-51h0m0-64h0m0 76h0m1 18h0m1 35h0m0-50h0m2-13h0m0 20h0m0 16h0m1-41h0m0 20h0m0 21h0m0 21h0m0-96h0m0 71h0m0-5h0m0 4h0m0 13h0m0 31h0m0-27h0m1 17h0m0-66h0m0-42h0m0 98h0m1-57h0m0 22h0m0 44h0m0-9h0m0-37h0m1-34h0m0 30h0m0 49h0m1-30h0m0 1h0m0 0h0m0 63h0m1-59h0m0-10h0m1-15h0m0 17h0m0-96h0m0 14h0m0 59h0m0 26h0m1 28h0m0-76h0m0 11h0m0 44h0m1-33h0m0 11h0m0 34h0m0 5h0m1-70h0m0 23h0m0 59h0m0-66h0m1-1h0m0 25h0m0-9h0m0 13h0m1-18h0m0-19h0m0-16h0m0 26h0m1-2h0m0 42h0m0-21h0m0-56h0m0 50h0m0 9h0m0-17h0m1-42h0m0 30h0m0 71h0m1-90h0m0-9h0m0 110h0m0 0h0m0-135h0m0 86h0m1 5h0m0-16h0m0-5h0m0 6h0m1 61h0m0 12h0m1-10h0m0-42h0m0-15h0m0-19h0m1 29h0m0-59h0m0 36h0m0 20h0m1 57h0m0-26h0m0-33h0m0 55h0m0-39h0m0 32h0m0-59h0m0-122h0m1 138h0m0-14h0m0-18h0m0 34h0m1-9h0m0-22h0m0-18h0m1 47h0m0 8h0m0 9h0m0-59h0m0 26h0m0 10h0m1-35h0m0 7h0m0-5h0m0 37h0m1 31h0m0-40h0m1 12h0m0-20h0m0 19h0m0-34h0m1 71h0m0-34h0m0 8h0m0-88h0m0 101h0m1 1h0m0 21h0m1-44h0m0-59h0m0 2h0m0 22h0m0 13h0m1 24h0m0 51h0m0-75h0m1-24h0m0 51h0m0 54h0m1-11h0m0-66h0m0 31h0m0-8h0m1-26h0m0-4h0m1 37h0m0 0h0m1 48h0m0-101h0m1-2h0m0 59h0m0-27h0m0 39h0m0-49h0m0-116h0m1 154h0m1-27h0m0-26h0m0 37h0m0-18h0m0 44h0m0-118h0m1 79h0m0 53h0m0-86h0m0 82h0m0-77h0m0 5h0m0-30h0m0 74h0m0 40h0m0-76h0m1-2h0m0 19h0m0 6h0m0-55h0m0 21h0m0 65h0m0-40h0m1-37h0m0 59h0m0 48h0m0-124h0m0 104h0m0 23h0m0-108h0m0 42h0m1 27h0m0 30h0m0-101h0m0 26h0m0 41h0m1 4h0m0-51h0m0 69h0m0-39h0m1 47h0m0-78h0m0 64h0m0 4h0m1-50h0m0 3h0m0-109h0m1 103h0m0-43h0m0 92h0m0-43h0m1-9h0m0 6h0m0-29h0m0 2h0m0 31h0m0-30h0m1 62h0m0-46h0m0-29h0m0 5h0m0 8h0m1 17h0m0 18h0m0-59h0m0 107h0m0-38h0m0-41h0m0 41h0m1 43h0m0-98h0m0 94h0m0-44h0m1-22h0m0-18h0m0 2h0m0 72h0m1-114h0m0 75h0m0-18h0m1 25h0m0 39h0m1 6h0m0-57h0m0 8h0m0 7h0m0-144h0m1 144h0m0-88h0m0 19h0m0 69h0m1 23h0m0-58h0m0 37h0m0-8h0m0 61h0m0-27h0m1-41h0m0 5h0m0 22h0m0-44h0m0-6h0m0 51h0m1-20h0m0 53h0m1-8h0m0-69h0m0 55h0m0-94h0m0 51h0m1 3h0m0 26h0m0-14h0m0 10h0m0-54h0m2 77h0m0-4h0m0-40h0m1 8h0m0 105h0m0-90h0m0-3h0m0 2h0m1 2h0m1 53h0m0-85h0m0-40h0m0 115h0m0-29h0m1 17h0m0-13h0m0-25h0m0 29h0m0-117h0m1 89h0m0-13h0m0 12h0m0 74h0m0-59h0m0 14h0m0-42h0m1 121h0m1-82h0m0-4h0m1-12h0m0 15h0m0 14h0m0-64h0m0 18h0m0 30h0m0-31h0m1 65h0m0-59h0m0-38h0m0 54h0m0-26h0m0 25h0m1 3h0m0 39h0m0-3h0m0-72h0m1-2h0m0 24h0m0 14h0m0-61h0m0 101h0m0-64h0m0 59h0m0-8h0m1-73h0m0 3h0m0 26h0m0-19h0m0 32h0m0 22h0m0-38h0m1 81h0m0 1h0m1-53h0m0 39h0m0-14h0m0-16h0m1 3h0m0-22h0m0 23h0m0-44h0m0 106h0m0-130h0m1 31h0m0 50h0m0-66h0m0 61h0m0-86h0m0 30h0m0 33h0m1-72h0m0 69h0m0 10h0m1 9h0m0-11h0m0-33h0m0 52h0m0 25h0m0-29h0m0-9h0m0-15h0m1 27h0m0 18h0m0-56h0m0-8h0m0 59h0m0 9h0m1-68h0m0 32h0m0 29h0m0-51h0m1 27h0m0 42h0m0-28h0m0-8h0m0-2h0m0 25h0m1-42h0m0 59h0m0-51h0m0 20h0m1 33h0m0-8h0m0 32h0m0 1h0m1-165h0m0 100h0m0 14h0m0-20h0m0 41h0m0 18h0m1-72h0m0 63h0m0-34h0m1-11h0m0-7h0m0-17h0m0 48h0m0-27h0m1 0h0m0-3h0m0 26h0m0-14h0m1-2h0m0 15h0m0 52h0m0-17h0m0 9h0m0-100h0m0 15h0m0 55h0m0 20h0m0-75h0m0 36h0m0 13h0m0 35h0m1-7h0m0-77h0m0 30h0m1 35h0m0-38h0m0 22h0m0 4h0m0 4h0m1-12h0m0-66h0m0 46h0m0 49h0m1-70h0m0 59h0m1-92h0m0 56h0m0-4h0m0 17h0m0 17h0m1-2h0m0-38h0m0 21h0m1 28h0m0-24h0m0 4h0m0-8h0m0 30h0m0-10h0m1-49h0m0 39h0m0-37h0m0 47h0m1-44h0m0-12h0m0 39h0m1 38h0m0-26h0m1 22h0m0-36h0m1 0h0m0-41h0m0 30h0m0-24h0m0 35h0m1-25h0m0 31h0m0-5h0m1 25h0m1-24h0m0 30h0m0-1h0m0-13h0m1 3h0m0-9h0m1 4h0m0 9h0m0-52h0m0 44h0m0-8h0m0 13h0m0-6h0m1-32h0m0-30h0m0 65h0m0 18h0m0 2h0m1-5h0m0-51h0m0 69h0m0-11h0m0-10h0m1 14h0m0-5h0m0-7h0m0 0h0m1 13h0m0-97h0m0 68h0m0 11h0m0 11h0m0-6h0m0-45h0m1 46h0m0 12h0m0-51h0m0 21h0m1-5h0m0-20h0m0 13h0m0 1h0m0 12h0m1 39h0m0-42h0m0 4h0m0 19h0m1-54h0m0 39h0m0-40h0m0 55h0m1-41h0m0 32h0m1-19h0m0-4h0m0 9h0m1 43h0m0-23h0m1-47h0m0 32h0m0-54h0m0 16h0m1 36h0m0 39h0m0-44h0m1 33h0m0-30h0m0 12h0m1 15h0m0-38h0m1 41h0m0 0h0m0-27h0m1 7h0m0 14h0m0 11h0m0-7h0m1-43h0m0 3h0m0-21h0m0 28h0m1 27h0m0 10h0m0-4h0m1 15h0m0-13h0m0-13h0m0 12h0m0 7h0m1-37h0m0 41h0m1-23h0m0-14h0m0 33h0m0 6h0m1-6h0m0-25h0m0 29h0m0-38h0m1 18h0m0-9h0m1-28h0m0 32h0m0 12h0m0 0h0m1-20h0m0 14h0m0 12h0m1-12h0m0-58h0m1 69h0m0-54h0m0 35h0m1 28h0m0-14h0m1 7h0m0 5h0m1-39h0m0 43h0m0-2h0m1 2h0m0-20h0m0 13h0m1-45h0m0-7h0m2 56h0m1-9h0m1-3h0m1-10h0m0-42h0m2 56h0m1-14h0m0 26h0m0-8h0m2 4h0m0-6h0m0-13h0m1 21h0m0-1h0m0-40h0m1 24h0m0 10h0m1 5h0m2-15h0m0 2h0m1-22h0m5 38h0m1-21h0m2 19h0m6-1h0m2-12h0m5 15h0m15-26h0m2 19h0m10 1h0m69-17h0m1 3h0m0 18h0m1-42h0m8 37h0m7-2h0m0-10h0m5-38h0m0 39h0m0-15h0m0 11h0m1 21h0m1-7h0m3 6h0m1 1h0m1-6h0m0-27h0m1-11h0m0 30h0m1 12h0m0-5h0m3 9h0m1 0h0m1-29h0m0-4h0m1 20h0m2 13h0m0-53h0m1 39h0m0-6h0m0-2h0m1-57h0m0 43h0m1 18h0m1-16h0m0 27h0m0-17h0m1-15h0m0 35h0m1 3h0m0-2h0m0-1h0m2-44h0m1-32h0m0 57h0m0-19h0m2 23h0m1-4h0m0 21h0m1-14h0m2-3h0m0 6h0m0-40h0m0 35h0m1 15h0m0-16h0m1-14h0m0-18h0m0 14h0m0-10h0m0 23h0m0 12h0m1-22h0m1 27h0m0-22h0m0-9h0m1-2h0m0 1h0m0 12h0m1 22h0m0-28h0m0 12h0m1-29h0m0 30h0m0 19h0m1-12h0m0 3h0m1-75h0m0 75h0m1-51h0m0 29h0m0-20h0m1 13h0m1-26h0m0 54h0m0-41h0m1 38h0m0-63h0m0-1h0m0 46h0m0-2h0m0-48h0m0 40h0m1 37h0m0-19h0m0 13h0m0-58h0m1 12h0m0 27h0m0 5h0m0-29h0m0 33h0m1 5h0m0 8h0m0-12h0m0 7h0m0 5h0m1-54h0m0 14h0m0 44h0m1-59h0m0 55h0m0 4h0m0-5h0m1-53h0m0 34h0m0 15h0m0-19h0m1-5h0m0-35h0m0 31h0m0-10h0m0 28h0m1-64h0m0 56h0m1 3h0m0-49h0m1 24h0m0 31h0m0-7h0m0-15h0m0 39h0m1-18h0m0-30h0m0 24h0m0-23h0m1-19h0m1-16h0m0 79h0m0-20h0m0 3h0m0-27h0m0 7h0m0 9h0m0 14h0m1-57h0m1 79h0m1-41h0m0 7h0m1-43h0m1-27h0m0 74h0m0-8h0m0 16h0m0-29h0m0-78h0m1 88h0m0 2h0m0 23h0m1 10h0m0-60h0m0-8h0m1 72h0m0-23h0m0 7h0m0 11h0m0-26h0m0 31h0m0-126h0m1 110h0m0-33h0m0 49h0m1-42h0m0-8h0m0-20h0m1 42h0m0-33h0m0-40h0m0 33h0m1 26h0m0 11h0m0-141h0m0 107h0m0-30h0m0-80h0m0 105h0m1 43h0m0 15h0m0 0h0m1-4h0m0-48h0m0 5h0m1 17h0m0-25h0m0 4h0m0-9h0m1 38h0m0-28h0m0 25h0m0 32h0m1-21h0m0-30h0m0 25h0m0-30h0m0-12h0m0-1h0m0 51h0m0-59h0m0 27h0m0-39h0m1-4h0m0 99h0m0-91h0m0-36h0m0 24h0m0 34h0m0 55h0m0-86h0m1 32h0m0 39h0m0-7h0m0-7h0m0-136h0m0 128h0m0 8h0m0 25h0m0-74h0m1 19h0m0-17h0m1 55h0m0 10h0m0 25h0m0-106h0m0 13h0m0 88h0m1-47h0m0 32h0m0-54h0m0-56h0m1 79h0m0 41h0m0-54h0m0-28h0m0 14h0m0 14h0m0 14h0m0-21h0m1 4h0m0 8h0m0-18h0m1 9h0m0-62h0m0 100h0m1-40h0m0 42h0m0-39h0m1 29h0m0-26h0m0-5h0m0-16h0m0 11h0m0 72h0m0-37h0m0-53h0m0 18h0m1-26h0m0 25h0m0 6h0m0-16h0m0 75h0m0-56h0m0 64h0m0-61h0m0-7h0m1-6h0m0 8h0m0 8h0m0-17h0m0 45h0m0-108h0m1 51h0m0 0h0m0-5h0m0 47h0m0-58h0m0 15h0m1 37h0m0-9h0m0 4h0m0 23h0m1-27h0m0-113h0m0 58h0m0 31h0m0-46h0m0 18h0m0 42h0m1-5h0m0 16h0m0-51h0m0 71h0m1-62h0m0 20h0m0 13h0m0-96h0m0 72h0m1 30h0m0-57h0m0 40h0m1-43h0m0 68h0m0 43h0m0-137h0m1 5h0m0 79h0m0 25h0m0-16h0m0-7h0m1-9h0m0 71h0m0-54h0m0-72h0m0-9h0m0 51h0m0-11h0m1 37h0m0-68h0m0 63h0m0-24h0m1-3h0m0 4h0m0 66h0m0-113h0m0 81h0m1-43h0m0 40h0m0-27h0m0-26h0m0 0h0m0 84h0m0-87h0m1-86h0m0 74h0m0-1h0m0 20h0m0 18h0m0-30h0m0 49h0m0-43h0m1-38h0m0 41h0m0 29h0m0-45h0m0-11h0m1-15h0m0 78h0m0 1h0m0-116h0m0 99h0m0-72h0m0 61h0m1 10h0m0 43h0m0-63h0m0 38h0m1-64h0m0 25h0m0-3h0m1 16h0m0 43h0m0-39h0m0 24h0m0-43h0m0 36h0m0-57h0m1 2h0m0 44h0m0-13h0m0 15h0m0-21h0m1-81h0m0 96h0m0-36h0m0-65h0m0 123h0m0 10h0m0-57h0m0 52h0m1-139h0m0 102h0m0 44h0m0-122h0m0 59h0m0 48h0m1 32h0m0-55h0m0-81h0m0 69h0m0 33h0m1 15h0m0-82h0m0 53h0m0-7h0m0-16h0m0 3h0m1 72h0m0-84h0m0 66h0m1 14h0m0-40h0m1-104h0m0 97h0m0 22h0m0 1h0m0-44h0m1 28h0m0-94h0m0 63h0m0 34h0m0 0h0m1 63h0m0-70h0m0-28h0m0-22h0m0 14h0m0 50h0m0-114h0m0 77h0m0 53h0m0-4h0m0-111h0m1 58h0m0 21h0m0 53h0m0-56h0m0 39h0m1-47h0m0-12h0m0 4h0m0-29h0m0-15h0m0 107h0m0-17h0m0-72h0m0 36h0m0-11h0m1 12h0m0-23h0m0 39h0m0-56h0m0-28h0m0 6h0m0 104h0m1-2h0m0-29h0m1 43h0m0-54h0m0 24h0m1 7h0m1-96h0m0 101h0m0-40h0m0 25h0m0 20h0m1-47h0m0-28h0m0-8h0m0 54h0m0-123h0m0 96h0m1 25h0m0-39h0m0 51h0m1-71h0m0 93h0m0-4h0m0 40h0m0-90h0m1 39h0m1-7h0m0-25h0m0-122h0m0 126h0m0 50h0m0-109h0m1 94h0m0-152h0m0 95h0m0-18h0m0 33h0m1-36h0m0 13h0m0 13h0m0-18h0m0 21h0m1 37h0m0 0h0m0-42h0m0-59h0m0 59h0m1 11h0"/><path transform="scale(0.5)" stroke="#ffa500" stroke-width="7.4" fill="none" stroke-linecap="round" d="M2256 1204h0m13-6h0m2-7h0m3 1h0m1 25h0m1-22h0m2 1h0m1 25h0m2 10h0m1-38h0m1 0h0m0 12h0m1-14h0m0 10h0m1 10h0m1 2h0m0-19h0m3 21h0m0 56h0m1-75h0m1 11h0m1-8h0m0-4h0m0 50h0m1-52h0m0 37h0m0-4h0m1 61h0m1-54h0m1-20h0m1 13h0m1-7h0m0 32h0m1-37h0m0 7h0m0 31h0m1-2h0m0-2h0m0-26h0m1-19h0m0-3h0m1 39h0m0-7h0m0-26h0m0 12h0m1-22h0m0-2h0m0-1h0m0 21h0m1-3h0m0 24h0m1-40h0m0 4h0m0-1h0m0-1h0m1-1h0m1 47h0m1-43h0m0 10h0m0 3h0m0-15h0m0 46h0m2-11h0m1-6h0m0 49h0m1-42h0m0-1h0m0 3h0m0-35h0m1 4h0m1-8h0m0 20h0m0 83h0m1-82h0m0 36h0m0-16h0m0 16h0m1-51h0m0 4h0m0 0h0m0 25h0m1-30h0m0 58h0m0 20h0m0-51h0m1-1h0m2-26h0m1 64h0m0-40h0m0-16h0m0 4h0m1 7h0m0 40h0m0-37h0m0 39h0m1-53h0m0-9h0m0 46h0m0-31h0m1-13h0m0 12h0m2 12h0m0-19h0m0 15h0m0 33h0m0-33h0m1-9h0m0-4h0m0-17h0m0 55h0m1-4h0m0-49h0m0 27h0m1-4h0m0 110h0m0-24h0m1-66h0m0-9h0m0 54h0m0-25h0m0-32h0m0 45h0m0 2h0m0-54h0m0 50h0m2-54h0m0 6h0m0 62h0m0-25h0m1-3h0m0-18h0m0-38h0m0 75h0m0-66h0m0-3h0m0-7h0m1 80h0m1 9h0m0-85h0m0 34h0m0-1h0m0 27h0m0 35h0m0-35h0m0-23h0m1-32h0m0 2h0m0 54h0m0-50h0m0 4h0m1 22h0m0-18h0m1 87h0m0-95h0m0 78h0m0-98h0m0 42h0m0 73h0m1-54h0m1-48h0m0 67h0m0 61h0m0-89h0m0-9h0m0 4h0m1-14h0m0-29h0m0-5h0m1 53h0m0 64h0m0-7h0m0-12h0m0-42h0m1-18h0m0 56h0m0-47h0m0-34h0m0 17h0m1 4h0m0-25h0m0 78h0m1-29h0m0 67h0m0-35h0m0 2h0m0-20h0m1 61h0m0-69h0m0-12h0m0 58h0m1-30h0m0-55h0m0 3h0m0 70h0m1-18h0m0-15h0m0-32h0m1-12h0m0 58h0m0-2h0m0-30h0m1 38h0m0-41h0m0 82h0m0-31h0m1-40h0m0 55h0m0-89h0m1 36h0m0 4h0m0-7h0m0 27h0m1 25h0m0-69h0m0-4h0m0 73h0m1-26h0m0-80h0m0 33h0m0-28h0m0 70h0m1-16h0m0 57h0m0-89h0m0 92h0m1-52h0m0 40h0m0-38h0m0 27h0m1-31h0m0 31h0m0-27h0m0-23h0m1 61h0m0-81h0m0 101h0m0-111h0m0 91h0m1-78h0m0 17h0m0 51h0m0-61h0m0 79h0m1-82h0m0-21h0m0-5h0m0 114h0m0-107h0m0 2h0m0 43h0m1-1h0m0-6h0m0 41h0m0-8h0m0-36h0m1-14h0m0 35h0m0-21h0m1-25h0m0 20h0m0 77h0m0-83h0m0 1h0m0 57h0m1-65h0m0 34h0m0 32h0m0-57h0m1 69h0m0-78h0m0-21h0m0 97h0m0-4h0m0-59h0m1 26h0m0-39h0m0 66h0m0-69h0m0 114h0m0-83h0m0-4h0m0-3h0m1 67h0m1-72h0m0-14h0m0 34h0m0-13h0m1 56h0m0 17h0m0-101h0m1-12h0m0-14h0m0 57h0m0 62h0m0-59h0m0-31h0m0 18h0m0-1h0m1 83h0m0-102h0m0-10h0m1 3h0m0-11h0m0 136h0m1-5h0m0-102h0m0 33h0m0 53h0m1-6h0m0-68h0m0 5h0m0 0h0m0 15h0m1-52h0m1 47h0m1 11h0m0 30h0m0-42h0m0 45h0m1-14h0m0 3h0m0-70h0m0 17h0m0 93h0m0-66h0m0 27h0m0-34h0m1-11h0m0 32h0m0-60h0m0 1h0m0 96h0m1-49h0m0 55h0m0 6h0m0-5h0m0-72h0m0 6h0m1 49h0m1 14h0m0-58h0m1-11h0m0-32h0m0 44h0m0-10h0m0 37h0m1-37h0m0 56h0m0 5h0m0-80h0m0 39h0m0-39h0m1 27h0m0 46h0m0-26h0m1 4h0m0-49h0m0 49h0m0-7h0m0 59h0m0-2h0m0-49h0m1-3h0m1-30h0m0 2h0m0 12h0m1 63h0m0-74h0m1 13h0m0-14h0m0-34h0m0 79h0m0-30h0m0 7h0m1-35h0m0 59h0m0-51h0m1 8h0m0-8h0m0 26h0m0-81h0m0 71h0m0-22h0m1 2h0m0 89h0m0-12h0m0-20h0m0-94h0m0 81h0m0-15h0m0 36h0m0-25h0m1-18h0m0 0h0m0 54h0m0-45h0m0 57h0m1-68h0m0-13h0m0-17h0m1 23h0m0-1h0m0 0h0m1-34h0m0-9h0m0 50h0m0 0h0m0 13h0m0 11h0m1-60h0m0 12h0m0 27h0m0-58h0m0 4h0m1 10h0m0 41h0m0-6h0m0-61h0m1 20h0m0 25h0m0 53h0m1-14h0m0-16h0m0 6h0m1-43h0m0 9h0m1 23h0m0-14h0m0 76h0m1-49h0m0 3h0m0-62h0m0 54h0m0-37h0m1-17h0m0 8h0m0 72h0m0-29h0m0 28h0m0 22h0m1-83h0m0 106h0m0-6h0m0-3h0m0-57h0m0 7h0m0-24h0m0-3h0m1 78h0m0-49h0m0-30h0m0-2h0m0 55h0m1-55h0m0 33h0m1-24h0m0 24h0m0 44h0m0-115h0m0 19h0m1 104h0m0-77h0m0-33h0m0 1h0m0 23h0m0 14h0m0-34h0m0 32h0m1-11h0m0 34h0m1 8h0m0-75h0m1 48h0m0-65h0m1 94h0m0 28h0m0-36h0m0 22h0m1-8h0m0-27h0m0-57h0m0 33h0m0 69h0m1-39h0m0 6h0m0-75h0m1 104h0m0-55h0m0 49h0m1-76h0m0 79h0m0-37h0m0-35h0m0-36h0m0 20h0m0 68h0m0-63h0m1 88h0m0-29h0m1-60h0m0-4h0m0 104h0m1-85h0m0 24h0m1-17h0m0 7h0m0 14h0m0-28h0m0 39h0m0-41h0m1 65h0m0-87h0m0 44h0m0 4h0m1-8h0m0-36h0m1 82h0m0-66h0m0 31h0m0 3h0m0 46h0m0-104h0m0 41h0m0 37h0m1-13h0m0 25h0m0-71h0m1 63h0m0-18h0m0-14h0m0 48h0m0 2h0m0-76h0m1-31h0m0 106h0m1-25h0m0 4h0m0 16h0m1-67h0m0 51h0m0-30h0m0-6h0m0-9h0m0 0h0m0 36h0m1-4h0m0-27h0m0-25h0m0 1h0m0 55h0m0 9h0m0-75h0m0 24h0m1-31h0m0 55h0m0 15h0m1-36h0m0-8h0m0 54h0m0 4h0m1-28h0m0 60h0m0-32h0m0-82h0m0 115h0m1-66h0m1 55h0m0-94h0m0-26h0m0 55h0m1 3h0m0-20h0m0-9h0m0 22h0m1-11h0m0 59h0m0-102h0m0 44h0m0 76h0m0-40h0m0-6h0m0 55h0m1-27h0m0 12h0m0-79h0m0-31h0m0 54h0m0-42h0m1 106h0m0-56h0m0 21h0m1-47h0m0 65h0m0-30h0m0 0h0m0 17h0m0 32h0m1-81h0m0 77h0m0-56h0m0 76h0m1 5h0m0-21h0m0-7h0m0-81h0m0 77h0m1-14h0m0 4h0m0-46h0m0-22h0m0 67h0m0-17h0m0-59h0m0-6h0m0 45h0m1 8h0m0 27h0m0-76h0m0 67h0m1-8h0m0 15h0m0-53h0m0 27h0m0-11h0m0-51h0m0 77h0m0 21h0m1-43h0m0-9h0m0 69h0m0-80h0m0 71h0m1-67h0m0-32h0m0 64h0m0-47h0m0 42h0m0 38h0m0-28h0m1-42h0m0 2h0m0-37h0m0 43h0m0-35h0m0-5h0m1 104h0m1 4h0m0-44h0m0-52h0m0-8h0m1 80h0m0-12h0m0 28h0m1-19h0m0-29h0m0 54h0m0-11h0m1-77h0m0 34h0m0 44h0m0 18h0m1-1h0m0-102h0m0 52h0m1 9h0m0-14h0m0 29h0m1 45h0m0-54h0m0 34h0m0-60h0m1 11h0m0 5h0m0-38h0m0 83h0m0-106h0m1 12h0m0-5h0m0 66h0m0-35h0m0-43h0m0 30h0m0 88h0m0-90h0m1 35h0m0-7h0m0-7h0m0 67h0m0-35h0m0 17h0m0-12h0m1-59h0m0-17h0m0 16h0m0-12h0m0 34h0m1 8h0m0 25h0m0-69h0m1 30h0m0-16h0m0 6h0m0 48h0m0-25h0m1 38h0m0-23h0m0-55h0m0 34h0m1 35h0m0-52h0m0 6h0m0 24h0m0-44h0m0 29h0m1-9h0m0-26h0m0 3h0m0 101h0m0-64h0m1-61h0m0 39h0m0-35h0m0 62h0m0-48h0m0 29h0m1 7h0m0-15h0m0-32h0m0 68h0m0-25h0m0 22h0m1-13h0m0-12h0m0 7h0m0-12h0m0-42h0m0 85h0m1 16h0m1-38h0m0-53h0m1 38h0m0 18h0m0 18h0m0 38h0m1-127h0m0 50h0m0 77h0m0-101h0m0-17h0m0 30h0m1-9h0m0 80h0m0-85h0m0 31h0m0 10h0m1 15h0m0-45h0m0 17h0m0-12h0m0 6h0m0-2h0m0-37h0m1 106h0m0-74h0m0 68h0m0-9h0m0-53h0m1-40h0m0 23h0m0 44h0m0-31h0m0-18h0m0-7h0m1 36h0m1 68h0m0-44h0m0-61h0m0 22h0m0-28h0m0 2h0m1 57h0m0-49h0m0 53h0m0-5h0m1-15h0m0-22h0m0 10h0m0-5h0m0 4h0m1-16h0m0 7h0m0-14h0m0 27h0m0 27h0m0 15h0m0-29h0m0 16h0m0-70h0m0-2h0m1 3h0m0-1h0m0 72h0m0-39h0m0 4h0m1 95h0m0-67h0m0-24h0m1 22h0m1-39h0m0 11h0m0-8h0m1 112h0m0-116h0m0 73h0m1-96h0m0 63h0m0 35h0m0-93h0m1 49h0m0-11h0m0 2h0m0-25h0m0 10h0m0 22h0m0-17h0m1-35h0m0 45h0m0 8h0m0-4h0m0 27h0m0 7h0m1-62h0m0-12h0m0 99h0m0-106h0m0 63h0m1-19h0m0 27h0m0 17h0m0-18h0m0-59h0m1 53h0m0-36h0m1 1h0m0-26h0m0 57h0m1-56h0m0-3h0m1 28h0m1-18h0m0 18h0m0-28h0m1 39h0m0-39h0m1-6h0m0 17h0m0-17h0m0 23h0m1 4h0m0 99h0m1-42h0m0-73h0m0 19h0m1 9h0m0-13h0m0 47h0m0-39h0m1 9h0m1 23h0m0-14h0m1-29h0m1 18h0m0 2h0m0-28h0m1-9h0m0-4h0m0 80h0m0-63h0m1-11h0m0 32h0m0 13h0m0-6h0m0-13h0m1-34h0m0 7h0m1-8h0m1 20h0m0-14h0m0 25h0m1-29h0m0 75h0m0-67h0m1-3h0m0 78h0m0-84h0m0 47h0m0-41h0m0 10h0m1 21h0m0-3h0m1-6h0m0-15h0m1 23h0m1 9h0m0 4h0m0 12h0m1-60h0m0 36h0m0-10h0m0 25h0m0-48h0m0 9h0m1 0h0m0 37h0m0-24h0m0-20h0m0-2h0m0 13h0m2-7h0m0 4h0m1-11h0m1 48h0m0-18h0m1-9h0m0-17h0m1 44h0m0-31h0m1-3h0m1 6h0m0-22h0m0 24h0m0 34h0m0-40h0m1 11h0m0-29h0m2 48h0m0 7h0m0-29h0m0-15h0m2 10h0m0 8h0m2 25h0m0-29h0m0-13h0m0 35h0m0-46h0m1 19h0m0-4h0m1 15h0m1-23h0m4-5h0m1 53h0m1-42h0m1 20h0m1-31h0m3 53h0m1-29h0m0-8h0m1-1h0m0 16h0m1-11h0m4-5h0m2-15h0m0 23h0m2-21h0m5-1h0m18-5h0m-1894-292h0m62-8h0m174 18h0m114 0h0m44-12h0m27-2h0m259 8h0m10 4h0m272-16h0m271 16h0m-1579 372h0m68-54h0m660 30h0m37 0h0m195 10h0m168-12h0m248-36h0m372 42h0m112-24h0m354 6h0"/><path d="M1161.6 666.2l-2.9-5.4h5.8zM1162.5 666.2l-2.9-5.4h5.8zM1169.8 666.2l-2.9-5.4h5.8zM1177.5 666.2l-2.9-5.4h5.8zM1178.6 666.2l-2.9-5.4h5.8zM1178.9 666.2l-2.9-5.4h5.8zM1180.8 666.2l-2.9-5.4h5.8zM1181.5 666.2l-2.9-5.4h5.8zM1181.7 666.2l-2.9-5.4h5.8zM1182.8 666.2l-2.9-5.4h5.8zM1183.0 666.2l-2.9-5.4h5.8zM1183.7 666.2l-2.9-5.4h5.8zM1185.0 666.2l-2.9-5.4h5.8zM1186.2 666.2l-2.9-5.4h5.8zM1186.2 666.2l-2.9-5.4h5.8zM1187.0 666.2l-2.9-5.4h5.8zM1187.2 666.2l-2.9-5.4h5.8zM1190.0 666.2l-2.9-5.4h5.8zM1190.0 666.2l-2.9-5.4h5.8zM1191.5 666.2l-2.9-5.4h5.8zM1192.9 666.2l-2.9-5.4h5.8zM1193.2 666.2l-2.9-5.4h5.8zM1194.5 666.2l-2.9-5.4h5.8zM1195.2 666.2l-2.9-5.4h5.8zM1195.6 666.2l-2.9-5.4h5.8zM1196.2 666.2l-2.9-5.4h5.8zM1196.3 666.2l-2.9-5.4h5.8zM1196.3 666.2l-2.9-5.4h5.8zM1196.8 666.2l-2.9-5.4h5.8zM1196.9 666.2l-2.9-5.4h5.8zM1196.9 666.2l-2.9-5.4h5.8zM1197.3 666.2l-2.9-5.4h5.8zM1197.4 666.2l-2.9-5.4h5.8zM1197.7 666.2l-2.9-5.4h5.8zM1201.2 666.2l-2.9-5.4h5.8zM1201.8 666.2l-2.9-5.4h5.8zM1202.9 666.2l-2.9-5.4h5.8zM1203.4 666.2l-2.9-5.4h5.8zM1203.7 666.2l-2.9-5.4h5.8zM1203.9 666.2l-2.9-5.4h5.8zM1204.6 666.2l-2.9-5.4h5.8zM1204.7 666.2l-2.9-5.4h5.8zM1204.7 666.2l-2.9-5.4h5.8zM1204.8 666.2l-2.9-5.4h5.8zM1206.1 666.2l-2.9-5.4h5.8zM1206.9 666.2l-2.9-5.4h5.8zM1206.9 666.2l-2.9-5.4h5.8zM1208.4 666.2l-2.9-5.4h5.8zM1209.9 666.2l-2.9-5.4h5.8zM1211.0 666.2l-2.9-5.4h5.8zM1211.2 666.2l-2.9-5.4h5.8zM1213.1 666.2l-2.9-5.4h5.8zM1214.9 666.2l-2.9-5.4h5.8zM1214.9 666.2l-2.9-5.4h5.8zM1216.5 666.2l-2.9-5.4h5.8zM1218.1 666.2l-2.9-5.4h5.8zM1221.4 666.2l-2.9-5.4h5.8zM1222.4 666.2l-2.9-5.4h5.8zM1222.7 666.2l-2.9-5.4h5.8zM1223.6 666.2l-2.9-5.4h5.8zM1226.7 666.2l-2.9-5.4h5.8zM1228.3 666.2l-2.9-5.4h5.8zM1232.3 666.2l-2.9-5.4h5.8zM1234.7 666.2l-2.9-5.4h5.8zM1243.4 666.2l-2.9-5.4h5.8zM241.2 666.2l-2.9-5.4h5.8zM298.5 666.2l-2.9-5.4h5.8zM315.3 666.2l-2.9-5.4h5.8zM393.2 666.2l-2.9-5.4h5.8zM497.3 666.2l-2.9-5.4h5.8zM530.4 666.2l-2.9-5.4h5.8zM717.3 666.2l-2.9-5.4h5.8zM852.4 666.2l-2.9-5.4h5.8zM861.2 666.2l-2.9-5.4h5.8zM896.4 666.2l-2.9-5.4h5.8zM1004.4 666.2l-2.9-5.4h5.8zM1033.3 666.2l-2.9-5.4h5.8zM1062.1 666.2l-2.9-5.4h5.8zM1111.2 666.2l-2.9-5.4h5.8zM1160.3 666.2l-2.9-5.4h5.8zM1265.3 666.2l-2.9-5.4h5.8z" fill="#ffa500"/><rect x="162.5" y="495.7" width="1141.8" height="69.1" fill="#ffa500" fill-opacity="0.1"/><rect x="105.5" y="499.1" width="1255.8" height="48.7" fill="#ff0000" fill-opacity="0.1"/><line x1="162.5" y1="530.4" x2="1304.6" y2="530.4" stroke="#ffa500" stroke-width="2.9"/><line x1="105.5" y1="523.0" x2="1361.3" y2="523.0" stroke="#ff0000" stroke-width="2.08"/><line x1="162.0" y1="666.0" x2="162.0" y2="380.5" stroke="#800080" stroke-width="2" stroke-dasharray="2.08 3.44"/><line x1="1303.0" y1="666.0" x2="1303.0" y2="380.5" stroke="#800080" stroke-width="2" stroke-dasharray="2.08 3.44"/><text x="732.20" y="657.00" font-size="13.89" text-anchor="middle" textLength="44.19" lengthAdjust="spacingAndGlyphs">60166</text></g><rect x="105.5" y="380.5" width="1380.0" height="286.0" fill="none" stroke="#000" stroke-width="1.11"/><line x1="162.5" y1="666.5" x2="162.5" y2="671.36" stroke="#000" stroke-width="1.11"/><text x="163.40" y="687.10" font-size="13.89" text-anchor="middle" textLength="8.84" lengthAdjust="spacingAndGlyphs">0</text><line x1="384.1" y1="666.5" x2="384.1" y2="671.36" stroke="#000" stroke-width="1.11"/><text x="385.00" y="687.10" font-size="13.89" text-anchor="middle" textLength="35.35" lengthAdjust="spacingAndGlyphs">2000</text><line x1="605.7" y1="666.5" x2="605.7" y2="671.36" stroke="#000" stroke-width="1.11"/><text x="606.60" y="687.10" font-size="13.89" text-anchor="middle" textLength="35.35" lengthAdjust="spacingAndGlyphs">4000</text><line x1="827.3" y1="666.5" x2="827.3" y2="671.36" stroke="#000" stroke-width="1.11"/><text x="828.20" y="687.10" font-size="13.89" text-anchor="middle" textLength="35.35" lengthAdjust="spacingAndGlyphs">6000</text><line x1="1048.9" y1="666.5" x2="1048.9" y2="671.36" stroke="#000" stroke-width="1.11"/><text x="1049.80" y="687.10" font-size="13.89" text-anchor="middle" textLength="35.35" lengthAdjust="spacingAndGlyphs">8000</text><line x1="1270.5" y1="666.5" x2="1270.5" y2="671.36" stroke="#000" stroke-width="1.11"/><text x="1271.40" y="687.10" font-size="13.89" text-anchor="middle" textLength="44.19" lengthAdjust="spacingAndGlyphs">10000</text><line x1="100.64" y1="609.5" x2="105.5" y2="609.5" stroke="#000" stroke-width="1.11"/><text x="95.50" y="614.70" font-size="13.89" text-anchor="end" textLength="30.93" lengthAdjust="spacingAndGlyphs">8.24</text><line x1="100.64" y1="547.8" x2="105.5" y2="547.8" stroke="#000" stroke-width="1.11"/><text x="95.50" y="553.03" font-size="13.89" text-anchor="end" textLength="30.93" lengthAdjust="spacingAndGlyphs">8.26</text><line x1="100.64" y1="486.2" x2="105.5" y2="486.2" stroke="#000" stroke-width="1.11"/><text x="95.50" y="491.37" font-size="13.89" text-anchor="end" textLength="30.93" lengthAdjust="spacingAndGlyphs">8.28</text><line x1="100.64" y1="424.5" x2="105.5" y2="424.5" stroke="#000" stroke-width="1.11"/><text x="95.50" y="429.70" font-size="13.89" text-anchor="end" textLength="30.93" lengthAdjust="spacingAndGlyphs">8.30</text><rect x="1365.4" y="387.5" width="113.3" height="48.1" rx="2.8" fill="#fff" fill-opacity="0.8" stroke="#cccccc" stroke-width="1.11"/><line x1="1369.1" y1="399.4" x2="1400" y2="399.4" stroke="#ffa500" stroke-width="3.2"/><text x="1410.70" y="403.80" font-size="13.89" text-anchor="start" textLength="30.86" lengthAdjust="spacingAndGlyphs">mag</text><text x="1439.60" y="405.80" font-size="10.8" text-anchor="start" textLength="30.84" lengthAdjust="spacingAndGlyphs" font-style="italic">OBSID</text><line x1="1369.1" y1="422" x2="1399" y2="422" stroke="#ff0000" stroke-width="2.08"/><text x="1409.80" y="426.40" font-size="13.89" text-anchor="start" textLength="30.86" lengthAdjust="spacingAndGlyphs">mag</text><rect x="1348.5" y="613.5" width="130.0" height="45.5" rx="2.8" fill="#fff" fill-opacity="0.8" stroke="#cccccc" stroke-width="1.11"/><circle cx="1367.5" cy="626.5" r="1.9" fill="#ffa500"/><text x="1392.50" y="631.40" font-size="13.89" text-anchor="start" textLength="80.07" lengthAdjust="spacingAndGlyphs">Highlighted</text><circle cx="1367.5" cy="647.5" r="1.9" fill="#000"/><text x="1392.50" y="652.40" font-size="13.89" text-anchor="start" textLength="20.04" lengthAdjust="spacingAndGlyphs">OK</text><g clip-path="url(#c3)"><path d="M105.5 758.5H1485.5M105.5 791.5H1485.5M105.5 823.5H1485.5M105.5 856.5H1485.5M105.5 889.5H1485.5M105.5 921.5H1485.5M105.5 1009.5H1485.5M105.5 983.5H1485.5M105.5 957.5H1485.5" stroke="#a0a0a0" stroke-width="1" stroke-dasharray="1.11 1.83"/><path d="M163.2 1008.8h0M164.9 1008.6h0M165.3 1007.0h0M165.6 1007.9h0M165.7 1008.3h0M166.2 1007.2h0M166.2 1008.4h0M166.2 1008.3h0M166.8 1008.5h0M166.8 1009.2h0M167.4 1007.4h0M168.4 1009.0h0M168.5 1008.5h0M169.0 1008.7h0M169.0 1007.5h0M169.0 1008.1h0M169.2 1008.1h0M170.2 1009.4h0M170.2 1008.2h0M171.7 1009.3h0M171.8 1007.9h0M171.8 1007.8h0M171.9 1008.1h0M172.7 1006.5h0M173.1 1007.7h0M173.3 1007.6h0M174.2 1008.0h0M174.6 1008.2h0M175.8 1007.3h0M175.9 1007.2h0M176.7 1009.1h0M177.0 1007.3h0M177.0 1007.7h0M177.6 1007.3h0M178.0 1007.7h0M178.1 1009.1h0M178.3 1009.0h0M178.5 1006.7h0M178.8 1007.9h0M179.7 1009.2h0M179.7 1007.8h0M179.8 1008.4h0M180.1 1009.3h0M180.6 1008.9h0M181.4 1009.3h0M181.9 1007.9h0M181.9 1008.1h0M182.4 1008.3h0M182.5 1007.9h0M183.0 1007.6h0M183.4 1009.1h0M183.6 1008.3h0M183.8 1008.7h0M184.2 1009.1h0M184.2 1008.5h0M184.5 1008.2h0M185.0 1008.3h0M185.2 1009.2h0M185.6 1008.5h0M185.8 1006.5h0M186.0 1008.9h0M186.5 1009.4h0M186.9 1007.9h0M187.1 1007.6h0M187.9 1007.7h0M187.9 1009.0h0M188.3 1007.3h0M189.2 1008.7h0M189.4 1009.0h0M189.7 1008.6h0M190.4 1008.2h0M191.0 1007.5h0M191.1 1007.6h0M191.2 1008.1h0M191.5 1007.4h0M191.9 1008.0h0M192.7 1007.4h0M193.0 1009.2h0M193.8 1009.3h0M194.4 1007.5h0M195.7 1009.2h0M196.8 1008.3h0M196.9 1008.2h0M197.0 1008.5h0M197.1 1008.5h0M197.7 1007.0h0M198.1 1008.7h0M198.8 1007.4h0M199.5 1006.3h0M199.6 1008.1h0M200.0 1008.1h0M200.2 1007.5h0M200.2 1006.7h0M200.2 1009.0h0M200.5 1008.0h0M201.2 1008.2h0M201.4 1007.7h0M201.7 1008.0h0M202.6 1007.6h0M202.7 1008.4h0M202.7 1008.1h0M202.8 1008.6h0M203.2 1008.6h0M203.5 1008.2h0M204.1 1008.2h0M205.2 1009.0h0M205.9 1006.9h0M206.1 1008.2h0M206.6 1009.2h0M207.0 1007.2h0M207.0 1008.7h0M207.2 1007.7h0M207.4 1008.1h0M207.7 1007.9h0M207.8 1008.0h0M207.9 1008.5h0M208.7 1008.1h0M208.8 1006.5h0M209.8 1009.0h0M210.1 1008.0h0M210.8 1007.8h0M211.1 1008.9h0M211.8 1009.2h0M211.9 1006.4h0M212.4 1008.4h0M212.6 1006.5h0M212.6 1007.7h0M213.0 1008.0h0M213.2 1007.7h0M214.8 1007.6h0M214.8 1007.2h0M215.0 1007.8h0M215.4 1008.0h0M215.5 1008.0h0M215.7 1007.0h0M216.2 1007.5h0M218.5 1008.9h0M218.9 1008.6h0M218.9 1007.8h0M219.1 1008.6h0M219.1 1008.4h0M219.3 1008.8h0M219.6 1008.3h0M219.6 1007.8h0M219.8 1007.3h0M220.3 1008.1h0M220.3 1006.5h0M220.4 1008.2h0M221.0 1005.6h0M221.1 1007.3h0M221.3 1007.7h0M222.2 1008.5h0M223.3 1008.5h0M223.4 1008.2h0M224.4 1008.0h0M224.6 1006.6h0M225.0 1009.2h0M225.5 1006.6h0M227.2 1008.3h0M227.2 1007.5h0M227.2 1008.7h0M227.4 1008.0h0M227.5 1008.4h0M227.7 1007.6h0M227.8 1008.0h0M228.0 1009.0h0M228.4 1007.4h0M229.8 1007.6h0M230.0 1007.6h0M230.1 1007.3h0M230.5 1007.2h0M231.2 1008.1h0M232.1 1009.2h0M232.1 1009.2h0M232.2 1007.0h0M233.0 1007.5h0M233.7 1008.0h0M233.8 1008.4h0M234.4 1008.1h0M234.4 1008.1h0M234.5 1008.4h0M234.7 1008.6h0M235.3 1006.4h0M235.4 1007.9h0M235.7 1008.6h0M236.6 1009.1h0M237.0 1008.7h0M237.0 1007.5h0M237.7 1007.5h0M237.8 1008.3h0M237.8 1008.1h0M237.9 1008.3h0M237.9 1009.0h0M238.2 1007.1h0M238.4 1007.8h0M238.5 1006.2h0M238.6 1008.7h0M238.7 1008.2h0M238.7 1007.4h0M239.0 1008.3h0M239.4 1009.2h0M239.6 1008.8h0M240.0 1008.0h0M240.6 1007.8h0M240.8 1008.2h0M240.9 1007.3h0M241.3 1007.3h0M241.7 1007.8h0M241.7 1008.1h0M241.8 1008.3h0M242.2 1007.7h0M242.5 1007.4h0M242.5 1008.0h0M242.9 1007.7h0M243.2 1008.3h0M244.8 1009.2h0M246.0 1008.9h0M246.1 1007.5h0M246.6 1007.7h0M246.7 1006.8h0M246.7 1008.1h0M247.1 1007.4h0M247.3 1007.1h0M248.0 1007.3h0M248.2 1008.6h0M248.4 1008.2h0M248.7 1008.0h0M248.8 1008.9h0M249.0 1007.7h0M249.2 1007.3h0M249.2 1008.5h0M250.3 1006.6h0M250.9 1008.3h0M250.9 1008.3h0M252.1 1008.3h0M252.9 1008.6h0M253.8 1007.8h0M254.5 1008.1h0M255.2 1006.8h0M255.4 1007.6h0M255.5 1007.7h0M255.5 1008.3h0M255.9 1009.2h0M256.4 1008.2h0M256.9 1008.8h0M257.8 1007.3h0M258.1 1008.1h0M258.2 1006.8h0M258.2 1007.5h0M258.7 1007.4h0M259.2 1007.9h0M259.2 1007.9h0M260.4 1007.6h0M260.5 1007.4h0M260.9 1008.7h0M261.0 1007.7h0M261.2 1006.0h0M261.5 1008.2h0M261.6 1008.3h0M261.7 1008.6h0M261.7 1009.2h0M261.8 1007.2h0M261.8 1008.0h0M262.6 1007.9h0M262.7 1006.7h0M263.5 1006.1h0M263.9 1008.8h0M264.2 1007.3h0M265.2 1007.6h0M265.6 1007.8h0M265.7 1007.7h0M266.3 1008.1h0M266.8 1006.8h0M266.9 1007.6h0M267.2 1007.8h0M267.2 1007.1h0M268.0 1007.4h0M268.2 1007.7h0M268.2 1007.8h0M268.4 1006.7h0M268.8 1007.7h0M269.2 1008.2h0M270.1 1008.8h0M270.8 1008.4h0M271.5 1008.9h0M271.7 1008.0h0M271.7 1007.9h0M272.3 1009.1h0M272.5 1008.1h0M272.6 1007.6h0M272.8 1008.0h0M272.9 1008.8h0M273.4 1007.1h0M273.6 1008.6h0M273.8 1009.1h0M274.8 1008.9h0M275.3 1008.1h0M275.4 1007.3h0M275.4 1007.2h0M276.3 1007.9h0M277.0 1009.0h0M277.0 1008.6h0M277.1 1008.8h0M277.8 1008.2h0M278.0 1009.3h0M278.6 1008.0h0M278.7 1007.6h0M279.3 1008.2h0M279.7 1007.7h0M280.0 1008.8h0M280.1 1009.2h0M280.1 1008.6h0M280.4 1007.2h0M280.7 1007.3h0M281.1 1008.5h0M281.9 1007.2h0M282.3 1008.3h0M282.5 1006.9h0M282.7 1007.7h0M283.3 1008.4h0M283.4 1007.5h0M283.6 1008.7h0M283.9 1008.8h0M284.5 1009.2h0M284.6 1007.9h0M286.1 1008.1h0M286.4 1008.2h0M288.5 1008.4h0M288.8 1007.0h0M288.8 1008.4h0M289.2 1008.7h0M289.4 1007.1h0M289.5 1007.0h0M290.7 1007.8h0M291.0 1009.3h0M291.1 1008.6h0M291.6 1007.6h0M291.6 1008.1h0M292.5 1006.9h0M292.6 1009.2h0M292.7 1007.6h0M292.9 1008.6h0M293.0 1007.1h0M293.6 1008.2h0M294.7 1007.3h0M295.2 1008.6h0M295.6 1009.2h0M296.6 1009.0h0M296.9 1008.6h0M297.5 1008.9h0M298.0 1007.2h0M298.2 1007.0h0M298.8 1007.9h0M299.5 1008.9h0M300.4 1008.2h0M300.7 1008.6h0M301.1 1007.0h0M301.6 1007.8h0M301.7 1007.7h0M302.1 1008.4h0M302.1 1009.1h0M302.6 1008.7h0M302.9 1009.0h0M303.0 1007.8h0M303.2 1008.0h0M303.7 1008.7h0M304.8 1008.4h0M304.9 1006.9h0M304.9 1008.8h0M304.9 1008.8h0M305.0 1008.3h0M305.8 1008.6h0M305.9 1008.4h0M306.0 1007.7h0M306.4 1006.7h0M306.5 1009.3h0M306.8 1008.1h0M307.4 1008.1h0M307.8 1008.2h0M308.0 1008.2h0M308.3 1008.4h0M308.7 1007.3h0M309.4 1008.5h0M309.4 1008.2h0M309.7 1008.1h0M309.8 1008.0h0M310.2 1008.2h0M310.9 1007.3h0M310.9 1008.1h0M311.5 1008.0h0M312.0 1008.1h0M312.6 1008.9h0M312.7 1008.7h0M313.3 1008.9h0M314.4 1007.9h0M314.4 1008.7h0M315.0 1008.9h0M315.3 1007.9h0M315.8 1007.7h0M316.1 1009.3h0M316.5 1006.8h0M317.3 1008.1h0M317.8 1008.2h0M317.9 1007.3h0M318.1 1008.0h0M318.5 1008.6h0M318.5 1006.4h0M318.6 1008.9h0M318.7 1008.2h0M319.3 1007.4h0M319.6 1008.9h0M319.7 1008.2h0M319.9 1007.8h0M319.9 1006.2h0M320.5 1008.8h0M320.6 1008.1h0M321.1 1007.6h0M321.6 1008.0h0M321.9 1009.0h0M322.5 1007.8h0M323.4 1008.0h0M323.5 1007.7h0M324.1 1007.2h0M324.3 1007.3h0M324.3 1007.8h0M324.9 1007.9h0M325.0 1009.0h0M325.6 1008.2h0M325.8 1007.9h0M328.1 1008.4h0M328.4 1008.0h0M328.7 1008.7h0M328.9 1006.9h0M329.3 1006.4h0M329.4 1008.4h0M330.7 1007.8h0M331.3 1008.3h0M331.8 1007.1h0M332.2 1007.8h0M333.7 1008.0h0M333.8 1008.3h0M334.1 1008.0h0M334.5 1008.9h0M334.8 1007.6h0M335.1 1008.7h0M335.5 1007.7h0M335.5 1008.0h0M336.7 1007.2h0M337.3 1008.1h0M337.4 1007.3h0M337.5 1008.8h0M338.3 1007.6h0M338.6 1008.3h0M339.3 1007.9h0M339.4 1008.0h0M339.8 1007.4h0M340.1 1009.1h0M341.2 1007.8h0M341.7 1009.3h0M342.2 1007.2h0M344.2 1009.2h0M344.9 1008.9h0M345.2 1009.4h0M345.6 1006.8h0M345.9 1009.1h0M346.0 1008.0h0M346.0 1008.5h0M346.1 1009.3h0M346.1 1008.4h0M346.6 1007.6h0M346.7 1008.2h0M346.8 1007.4h0M347.0 1008.4h0M347.2 1008.1h0M347.6 1008.4h0M348.3 1007.8h0M349.5 1006.6h0M350.0 1007.8h0M350.7 1007.9h0M351.1 1008.6h0M351.6 1008.7h0M351.7 1006.9h0M351.8 1009.0h0M352.0 1008.8h0M353.2 1008.2h0M353.7 1008.4h0M356.0 1006.6h0M356.4 1008.9h0M357.1 1007.8h0M357.8 1007.5h0M358.1 1009.0h0M358.8 1008.6h0M359.7 1007.8h0M359.9 1006.8h0M359.9 1008.8h0M360.6 1009.3h0M360.6 1007.3h0M361.3 1006.9h0M361.8 1008.4h0M362.8 1009.0h0M362.9 1007.0h0M363.4 1008.3h0M363.5 1007.2h0M363.6 1008.1h0M363.8 1008.4h0M364.1 1008.4h0M364.2 1006.9h0M364.4 1007.0h0M364.6 1009.0h0M365.4 1008.8h0M366.1 1006.7h0M366.9 1008.4h0M367.0 1009.2h0M367.1 1008.1h0M367.2 1008.2h0M368.4 1008.2h0M368.6 1008.5h0M369.1 1008.3h0M369.9 1008.5h0M370.1 1007.8h0M371.1 1008.7h0M371.7 1008.3h0M371.9 1008.2h0M372.0 1007.1h0M372.0 1007.8h0M372.2 1008.2h0M372.2 1007.7h0M372.4 1007.8h0M372.6 1007.2h0M372.6 1007.7h0M372.8 1006.7h0M373.3 1007.0h0M374.0 1008.1h0M374.4 1008.4h0M375.1 1007.4h0M375.3 1007.7h0M375.8 1008.2h0M375.9 1009.3h0M376.3 1009.3h0M377.1 1007.8h0M377.6 1007.5h0M377.6 1007.5h0M378.2 1009.1h0M378.7 1007.3h0M378.9 1008.5h0M379.8 1007.8h0M379.8 1007.8h0M380.0 1008.7h0M380.1 1008.6h0M380.1 1009.1h0M380.6 1008.8h0M381.1 1009.3h0M381.5 1007.8h0M381.9 1008.0h0M382.0 1007.4h0M382.0 1007.8h0M382.1 1008.6h0M383.0 1007.8h0M383.1 1008.4h0M384.1 1007.6h0M384.4 1007.8h0M384.4 1008.9h0M384.6 1008.1h0M384.6 1008.1h0M385.1 1008.3h0M385.5 1007.4h0M385.5 1006.8h0M385.8 1008.4h0M386.3 1008.4h0M386.5 1008.9h0M387.1 1008.2h0M387.4 1008.4h0M387.4 1009.0h0M387.5 1007.9h0M387.8 1007.6h0M388.0 1008.7h0M388.1 1008.4h0M388.3 1008.9h0M388.5 1007.5h0M388.5 1009.3h0M388.9 1008.3h0M389.8 1006.6h0M390.1 1008.1h0M390.8 1007.7h0M390.9 1008.2h0M391.1 1009.0h0M391.3 1008.1h0M391.5 1007.8h0M391.5 1008.9h0M391.6 1007.8h0M391.6 1007.1h0M391.9 1007.3h0M392.1 1009.3h0M392.1 1008.9h0M392.1 1009.4h0M393.3 1007.3h0M393.4 1007.6h0M393.7 1007.5h0M393.9 1008.8h0M394.2 1009.0h0M394.3 1008.0h0M394.7 1008.0h0M394.8 1008.8h0M396.0 1008.0h0M396.1 1007.6h0M396.2 1007.9h0M396.8 1008.9h0M397.0 1009.1h0M398.2 1008.3h0M399.2 1008.0h0M399.5 1008.3h0M400.1 1008.4h0M400.6 1008.6h0M400.9 1007.5h0M402.0 1008.1h0M402.0 1008.0h0M402.2 1008.9h0M404.0 1008.6h0M404.6 1008.0h0M404.7 1008.9h0M405.3 1009.1h0M405.8 1008.4h0M406.0 1007.2h0M406.3 1007.9h0M406.6 1007.0h0M407.0 1008.2h0M407.1 1008.3h0M407.3 1009.2h0M407.7 1008.5h0M407.7 1007.0h0M408.0 1007.8h0M408.4 1007.5h0M408.6 1007.5h0M409.1 1008.1h0M409.4 1008.3h0M409.9 1008.0h0M410.1 1007.6h0M410.2 1007.7h0M410.6 1007.7h0M410.6 1008.0h0M410.9 1008.7h0M411.5 1008.3h0M412.5 1008.8h0M412.7 1007.3h0M412.8 1009.1h0M413.0 1008.3h0M413.3 1006.2h0M413.6 1008.4h0M414.4 1009.0h0M414.8 1008.1h0M414.8 1007.1h0M414.9 1008.2h0M415.2 1007.6h0M415.9 1008.0h0M416.2 1008.4h0M416.3 1005.6h0M416.4 1008.0h0M417.2 1008.5h0M417.4 1008.5h0M418.9 1007.8h0M419.3 1007.8h0M419.3 1007.5h0M419.4 1008.0h0M420.7 1009.2h0M421.6 1007.7h0M422.0 1008.3h0M422.9 1008.3h0M423.4 1009.3h0M423.5 1008.5h0M424.3 1008.7h0M424.8 1008.1h0M424.9 1009.2h0M424.9 1008.1h0M425.5 1008.0h0M425.8 1009.0h0M426.6 1008.6h0M426.6 1008.8h0M427.1 1007.4h0M428.5 1008.7h0M428.9 1008.4h0M429.0 1009.4h0M429.1 1008.4h0M429.3 1007.4h0M429.7 1008.6h0M429.9 1008.0h0M430.1 1008.8h0M431.2 1006.6h0M431.8 1007.4h0M432.3 1007.2h0M432.4 1009.1h0M432.4 1009.0h0M432.8 1007.2h0M434.2 1008.2h0M434.3 1008.3h0M434.7 1007.8h0M435.0 1009.1h0M435.6 1007.5h0M435.7 1008.1h0M436.4 1007.7h0M436.5 1008.6h0M437.1 1007.7h0M438.6 1008.6h0M438.8 1007.3h0M439.2 1007.2h0M440.0 1007.4h0M440.7 1007.7h0M440.9 1007.6h0M441.4 1008.6h0M441.9 1007.4h0M442.3 1008.3h0M442.4 1008.0h0M443.2 1008.3h0M443.3 1009.2h0M443.4 1008.5h0M443.4 1007.6h0M443.4 1007.0h0M443.7 1008.6h0M443.8 1008.8h0M444.0 1007.0h0M444.4 1008.8h0M444.6 1006.5h0M444.6 1008.1h0M444.8 1008.8h0M445.1 1007.3h0M445.3 1006.8h0M445.4 1009.2h0M445.5 1006.9h0M445.7 1008.3h0M446.0 1006.9h0M447.0 1008.4h0M447.8 1009.3h0M448.7 1007.7h0M448.9 1007.4h0M450.1 1006.5h0M450.6 1006.7h0M450.7 1007.6h0M450.8 1008.3h0M451.1 1008.5h0M451.5 1008.3h0M451.6 1008.7h0M451.7 1008.3h0M452.3 1008.7h0M452.7 1008.0h0M453.1 1008.1h0M453.2 1006.1h0M453.4 1007.5h0M454.2 1008.5h0M454.6 1007.7h0M454.7 1009.1h0M454.8 1008.6h0M455.2 1009.2h0M455.5 1007.0h0M455.6 1007.6h0M456.0 1009.0h0M456.5 1008.1h0M456.9 1007.4h0M457.1 1007.7h0M457.1 1007.8h0M457.3 1008.8h0M458.7 1008.6h0M458.7 1008.0h0M459.1 1007.4h0M459.1 1008.7h0M459.3 1009.0h0M459.3 1007.2h0M459.8 1008.8h0M460.5 1007.3h0M461.0 1007.9h0M461.6 1007.4h0M461.7 1006.7h0M461.8 1007.6h0M462.0 1007.5h0M462.7 1008.8h0M463.1 1008.6h0M463.3 1007.6h0M463.7 1006.9h0M464.1 1007.0h0M464.6 1006.3h0M464.6 1007.9h0M464.7 1007.9h0M465.6 1007.3h0M465.7 1008.1h0M465.9 1008.1h0M466.1 1008.9h0M466.4 1007.3h0M466.6 1008.9h0M466.9 1007.7h0M466.9 1009.2h0M467.3 1007.2h0M467.4 1008.9h0M467.5 1007.4h0M467.6 1009.3h0M467.7 1008.4h0M467.7 1007.2h0M467.9 1008.7h0M468.7 1008.0h0M468.8 1008.5h0M468.8 1008.9h0M469.3 1007.9h0M469.4 1007.8h0M469.5 1009.0h0M469.5 1007.6h0M470.0 1008.7h0M470.2 1008.9h0M470.4 1008.1h0M470.4 1008.6h0M470.6 1006.3h0M470.8 1009.3h0M471.3 1007.5h0M471.7 1007.3h0M472.1 1009.2h0M472.8 1009.3h0M473.0 1007.7h0M473.8 1008.5h0M474.4 1007.8h0M474.8 1007.2h0M475.2 1008.4h0M475.9 1008.9h0M476.4 1008.6h0M476.7 1007.9h0M477.3 1008.8h0M477.9 1007.8h0M478.7 1007.9h0M479.4 1009.2h0M479.9 1006.7h0M480.0 1007.2h0M480.0 1007.4h0M480.1 1009.0h0M480.3 1008.4h0M480.3 1008.5h0M481.5 1008.4h0M482.2 1009.0h0M482.7 1007.8h0M482.8 1007.9h0M483.1 1007.8h0M483.7 1008.5h0M484.0 1007.1h0M484.6 1007.9h0M485.2 1008.6h0M485.6 1008.6h0M486.4 1008.1h0M486.9 1007.3h0M486.9 1008.3h0M487.0 1008.3h0M487.1 1008.6h0M487.1 1007.6h0M488.8 1008.4h0M489.3 1008.6h0M489.9 1008.7h0M490.1 1007.7h0M490.1 1008.5h0M490.9 1009.4h0M491.1 1007.6h0M491.6 1008.6h0M492.0 1007.8h0M492.2 1007.8h0M492.4 1007.2h0M492.6 1007.3h0M493.0 1008.5h0M493.0 1008.2h0M493.1 1009.1h0M493.9 1006.8h0M494.1 1007.7h0M494.5 1007.0h0M494.8 1008.3h0M495.4 1009.1h0M495.7 1006.9h0M495.9 1008.0h0M496.2 1008.0h0M496.5 1008.1h0M496.6 1007.6h0M496.7 1007.7h0M496.8 1009.3h0M496.9 1007.2h0M497.1 1008.5h0M497.4 1008.5h0M497.6 1006.7h0M497.7 1007.4h0M498.1 1008.4h0M499.0 1009.3h0M499.3 1008.0h0M499.4 1007.7h0M499.7 1008.2h0M499.8 1009.1h0M499.9 1008.7h0M500.2 1009.1h0M500.5 1007.9h0M501.0 1007.5h0M501.0 1007.3h0M501.1 1008.7h0M501.3 1007.9h0M501.3 1007.7h0M501.5 1008.5h0M501.9 1008.2h0M501.9 1006.4h0M502.1 1007.9h0M503.1 1007.4h0M503.2 1008.4h0M504.3 1008.1h0M504.8 1009.4h0M505.1 1008.1h0M505.1 1007.2h0M505.6 1006.5h0M506.2 1007.2h0M506.5 1007.6h0M506.7 1008.1h0M508.0 1008.6h0M508.1 1008.2h0M508.2 1007.6h0M509.0 1008.7h0M509.1 1007.4h0M509.1 1008.9h0M510.0 1009.3h0M510.7 1008.9h0M510.9 1009.4h0M510.9 1009.2h0M511.5 1007.2h0M511.9 1008.3h0M512.2 1007.9h0M512.4 1007.2h0M512.4 1007.1h0M513.1 1008.5h0M513.4 1007.1h0M513.9 1007.8h0M514.8 1008.1h0M515.3 1007.7h0M515.6 1009.2h0M516.6 1008.7h0M516.7 1008.2h0M517.1 1007.6h0M517.5 1008.4h0M518.6 1008.2h0M518.7 1007.3h0M518.9 1007.0h0M519.2 1007.5h0M519.4 1007.1h0M519.4 1008.4h0M520.0 1008.3h0M520.3 1007.8h0M520.3 1008.3h0M520.4 1008.5h0M521.1 1006.8h0M521.9 1008.3h0M522.1 1008.9h0M522.4 1007.7h0M522.5 1006.7h0M523.2 1008.0h0M523.5 1007.1h0M523.7 1008.4h0M525.0 1008.5h0M525.1 1008.6h0M525.2 1008.2h0M525.3 1006.7h0M525.5 1009.0h0M526.0 1006.8h0M526.1 1008.9h0M527.3 1008.3h0M527.5 1007.4h0M528.3 1007.6h0M529.0 1007.9h0M529.0 1009.4h0M529.1 1007.8h0M529.3 1008.9h0M529.5 1006.1h0M529.8 1008.3h0M529.9 1007.9h0M530.1 1009.0h0M530.9 1008.5h0M531.0 1009.1h0M531.0 1007.3h0M531.2 1008.3h0M531.6 1007.7h0M532.1 1008.6h0M532.8 1008.5h0M532.9 1007.1h0M533.7 1008.9h0M534.5 1009.3h0M534.8 1007.8h0M535.1 1009.0h0M535.2 1008.4h0M535.6 1007.4h0M535.7 1008.7h0M536.4 1007.4h0M537.0 1008.6h0M537.1 1006.9h0M537.5 1007.1h0M538.2 1008.5h0M538.6 1008.3h0M539.1 1008.7h0M539.7 1007.9h0M540.1 1007.2h0M540.1 1009.2h0M540.2 1007.4h0M540.6 1009.1h0M540.6 1008.8h0M541.5 1009.3h0M541.6 1006.4h0M541.7 1008.0h0M541.9 1007.9h0M542.0 1008.6h0M542.2 1007.3h0M542.5 1009.1h0M543.4 1008.1h0M543.4 1006.4h0M543.4 1008.4h0M544.6 1008.1h0M544.7 1007.6h0M545.0 1008.7h0M545.0 1008.1h0M545.1 1007.3h0M545.3 1007.9h0M545.6 1007.8h0M546.0 1008.4h0M546.0 1007.8h0M546.3 1008.1h0M546.4 1007.0h0M547.7 1007.5h0M547.7 1008.3h0M547.8 1008.8h0M547.8 1007.5h0M548.0 1007.5h0M548.0 1008.8h0M548.7 1009.1h0M549.5 1009.0h0M549.8 1007.4h0M550.3 1008.9h0M551.0 1008.5h0M551.2 1007.9h0M551.9 1007.1h0M552.6 1008.1h0M552.6 1008.2h0M553.1 1008.5h0M553.3 1006.8h0M554.6 1007.3h0M554.6 1008.2h0M554.7 1009.2h0M555.0 1008.7h0M556.4 1007.6h0M556.6 1008.7h0M557.0 1007.4h0M557.1 1007.8h0M557.4 1007.9h0M558.4 1007.6h0M558.5 1007.7h0M558.6 1008.8h0M559.6 1008.4h0M560.3 1006.3h0M560.6 1009.0h0M561.2 1008.5h0M561.9 1007.3h0M563.7 1008.2h0M564.5 1008.7h0M564.5 1009.1h0M565.4 1007.7h0M565.7 1007.3h0M566.5 1007.0h0M566.9 1008.1h0M567.4 1007.3h0M567.5 1008.9h0M567.8 1008.0h0M568.0 1008.6h0M569.0 1008.0h0M569.0 1007.5h0M570.0 1007.3h0M571.0 1008.9h0M571.1 1007.1h0M572.1 1008.5h0M573.0 1008.9h0M573.0 1008.2h0M573.4 1009.2h0M573.7 1008.1h0M574.5 1007.9h0M575.2 1008.3h0M575.3 1007.7h0M575.9 1008.3h0M576.1 1008.1h0M576.3 1009.2h0M576.6 1008.1h0M577.1 1008.8h0M577.5 1008.4h0M577.8 1008.2h0M578.0 1007.9h0M578.5 1009.4h0M578.7 1009.3h0M579.5 1008.3h0M579.9 1007.7h0M581.0 1007.8h0M581.2 1007.4h0M581.5 1007.1h0M582.1 1007.7h0M583.0 1008.1h0M583.3 1008.9h0M583.4 1008.8h0M583.5 1008.5h0M583.9 1007.9h0M584.4 1007.9h0M584.6 1008.1h0M584.9 1008.2h0M585.2 1007.6h0M585.3 1007.9h0M586.3 1007.9h0M586.4 1007.9h0M586.8 1008.5h0M586.9 1008.9h0M586.9 1007.7h0M587.0 1007.8h0M587.5 1008.3h0M587.7 1008.4h0M588.3 1006.3h0M588.3 1008.7h0M588.5 1008.3h0M588.6 1007.9h0M589.2 1009.0h0M589.2 1008.0h0M589.9 1006.7h0M590.1 1007.4h0M590.5 1007.6h0M590.6 1007.6h0M591.3 1008.0h0M591.6 1007.3h0M591.6 1008.2h0M592.0 1008.4h0M592.2 1008.0h0M592.2 1007.4h0M592.6 1007.8h0M593.8 1007.6h0M593.9 1009.1h0M594.8 1007.2h0M594.8 1006.3h0M595.0 1007.0h0M595.1 1008.3h0M595.2 1008.8h0M595.2 1007.9h0M595.2 1008.9h0M595.8 1007.5h0M595.8 1008.5h0M596.3 1007.3h0M596.5 1007.0h0M596.5 1009.1h0M596.7 1007.9h0M596.9 1008.6h0M597.4 1009.2h0M597.5 1008.6h0M597.5 1008.3h0M598.4 1007.3h0M598.9 1009.3h0M599.6 1007.3h0M600.0 1006.5h0M600.5 1007.6h0M600.6 1007.7h0M600.6 1008.1h0M600.6 1009.0h0M600.7 1007.7h0M601.0 1007.8h0M601.1 1007.5h0M601.3 1006.1h0M602.4 1007.5h0M602.5 1007.8h0M602.8 1006.9h0M602.8 1009.1h0M603.2 1009.0h0M604.3 1008.4h0M604.4 1008.6h0M604.4 1007.6h0M604.5 1008.3h0M604.5 1006.7h0M605.2 1006.9h0M605.9 1007.5h0M607.0 1008.4h0M607.1 1007.6h0M607.2 1007.5h0M607.3 1008.9h0M608.5 1007.8h0M608.6 1007.5h0M609.0 1007.9h0M609.7 1006.9h0M610.0 1007.1h0M610.4 1008.7h0M611.3 1008.0h0M611.9 1008.7h0M611.9 1007.6h0M611.9 1008.8h0M613.0 1007.4h0M613.2 1007.8h0M613.2 1007.3h0M613.6 1008.2h0M614.2 1009.2h0M614.6 1006.7h0M614.7 1008.2h0M615.0 1007.0h0M615.1 1007.8h0M615.5 1007.6h0M616.1 1006.7h0M616.7 1007.8h0M617.3 1007.0h0M617.7 1009.3h0M618.9 1007.4h0M620.3 1008.3h0M620.4 1008.2h0M621.2 1008.1h0M621.3 1007.8h0M621.5 1006.8h0M621.5 1009.3h0M621.9 1008.1h0M622.1 1008.7h0M622.4 1007.2h0M623.6 1008.4h0M623.8 1007.7h0M624.0 1008.4h0M624.4 1007.6h0M624.9 1007.3h0M625.2 1008.4h0M625.2 1008.1h0M625.4 1009.2h0M625.6 1007.9h0M625.8 1007.4h0M625.9 1008.5h0M626.3 1007.2h0M626.4 1009.1h0M626.8 1009.3h0M627.2 1009.2h0M627.6 1008.5h0M627.9 1008.1h0M629.0 1008.2h0M629.1 1008.1h0M629.3 1007.5h0M629.4 1008.5h0M629.4 1009.1h0M630.1 1009.1h0M630.3 1006.4h0M630.6 1008.9h0M631.1 1008.2h0M631.3 1007.0h0M631.5 1007.7h0M631.7 1008.7h0M631.8 1008.1h0M631.9 1007.4h0M633.0 1007.1h0M633.6 1008.8h0M635.0 1007.5h0M635.6 1007.9h0M635.6 1007.2h0M635.8 1007.0h0M635.9 1008.4h0M636.6 1009.2h0M637.4 1007.8h0M638.0 1006.7h0M638.7 1007.6h0M639.2 1007.9h0M640.2 1006.2h0M640.4 1008.9h0M641.2 1007.4h0M641.7 1008.5h0M642.2 1008.1h0M642.3 1008.0h0M642.6 1006.9h0M643.1 1008.8h0M643.1 1008.5h0M643.2 1009.3h0M644.1 1007.7h0M644.5 1008.5h0M644.7 1007.8h0M644.8 1008.9h0M645.7 1008.4h0M645.9 1007.3h0M646.2 1008.2h0M646.4 1007.6h0M649.0 1007.7h0M649.3 1008.4h0M649.4 1009.3h0M650.2 1007.3h0M650.4 1008.0h0M650.8 1007.3h0M650.9 1009.1h0M651.5 1009.4h0M652.0 1009.0h0M652.3 1008.8h0M652.8 1007.3h0M652.8 1007.7h0M652.8 1008.1h0M653.7 1008.0h0M654.3 1007.5h0M654.5 1008.3h0M655.9 1007.8h0M656.0 1008.0h0M656.2 1009.0h0M656.8 1008.4h0M657.6 1007.0h0M658.3 1008.4h0M658.8 1008.2h0M658.9 1008.6h0M659.0 1008.5h0M661.3 1007.2h0M661.5 1008.3h0M661.6 1008.9h0M661.8 1008.3h0M663.0 1008.5h0M663.0 1009.2h0M663.1 1009.3h0M663.5 1007.5h0M664.2 1007.5h0M664.3 1009.2h0M664.5 1007.4h0M664.6 1007.7h0M665.0 1008.7h0M665.4 1007.5h0M665.7 1009.4h0M665.8 1009.0h0M665.8 1009.2h0M666.1 1009.0h0M667.4 1007.4h0M667.7 1009.1h0M668.3 1009.0h0M668.3 1008.8h0M668.8 1007.9h0M669.0 1008.4h0M669.1 1007.4h0M669.3 1008.7h0M669.4 1009.1h0M669.7 1008.5h0M670.0 1008.1h0M670.2 1008.8h0M670.2 1007.9h0M670.2 1006.7h0M671.0 1008.6h0M671.3 1008.1h0M671.4 1007.0h0M672.2 1008.6h0M672.4 1008.8h0M672.6 1009.0h0M672.7 1007.8h0M672.8 1007.7h0M673.3 1008.2h0M673.5 1008.1h0M673.5 1007.1h0M673.6 1007.4h0M674.1 1009.2h0M674.2 1008.1h0M674.7 1008.0h0M674.8 1007.5h0M676.0 1008.3h0M676.6 1008.6h0M677.5 1008.5h0M677.6 1009.3h0M677.6 1008.1h0M677.7 1008.6h0M678.2 1007.8h0M678.4 1008.9h0M678.9 1008.5h0M679.0 1008.9h0M679.3 1009.0h0M680.6 1007.6h0M680.9 1008.5h0M681.0 1007.8h0M681.4 1009.0h0M682.2 1008.0h0M682.6 1009.4h0M683.1 1008.5h0M683.5 1008.5h0M683.9 1007.7h0M684.1 1008.0h0M684.8 1008.3h0M684.9 1007.5h0M685.0 1008.0h0M685.2 1007.7h0M685.7 1007.5h0M686.2 1008.2h0M686.3 1008.4h0M686.5 1007.9h0M686.8 1008.5h0M687.0 1007.8h0M688.4 1007.3h0M688.4 1007.5h0M689.3 1008.4h0M689.3 1009.1h0M689.7 1008.2h0M690.2 1008.2h0M690.3 1007.3h0M690.6 1008.4h0M690.8 1008.3h0M691.0 1007.6h0M691.0 1008.5h0M691.2 1008.3h0M691.8 1006.8h0M692.0 1007.0h0M692.1 1007.6h0M692.5 1007.9h0M692.6 1008.9h0M692.7 1007.7h0M692.8 1008.1h0M692.9 1008.0h0M693.1 1008.5h0M693.2 1008.1h0M693.7 1008.3h0M693.7 1007.9h0M693.7 1007.0h0M694.1 1007.8h0M694.5 1009.4h0M694.6 1008.9h0M694.7 1009.4h0M695.0 1008.8h0M695.3 1007.7h0M695.4 1007.8h0M695.9 1008.6h0M696.1 1007.9h0M696.9 1008.7h0M696.9 1009.2h0M697.0 1009.2h0M697.5 1008.8h0M697.7 1007.0h0M697.9 1009.2h0M698.0 1007.2h0M698.2 1007.1h0M698.3 1008.3h0M698.9 1008.2h0M699.5 1008.6h0M699.7 1008.2h0M699.8 1007.6h0M700.5 1008.1h0M700.7 1007.4h0M700.7 1007.2h0M702.3 1007.9h0M702.7 1007.9h0M703.2 1008.2h0M703.2 1007.9h0M703.3 1009.0h0M703.4 1007.8h0M704.7 1008.0h0M705.7 1008.8h0M705.9 1006.5h0M706.3 1008.9h0M706.4 1008.8h0M706.8 1007.9h0M708.2 1009.2h0M708.8 1008.8h0M708.9 1009.3h0M709.0 1008.9h0M709.0 1008.2h0M709.1 1007.9h0M709.6 1007.3h0M709.7 1007.5h0M709.7 1007.2h0M709.8 1007.7h0M710.9 1008.5h0M711.0 1007.3h0M712.4 1008.5h0M712.9 1008.6h0M713.0 1006.9h0M714.7 1007.5h0M715.5 1008.0h0M715.9 1007.5h0M716.2 1007.5h0M717.9 1009.2h0M718.2 1008.2h0M719.1 1009.1h0M719.3 1008.0h0M719.5 1008.7h0M719.7 1007.1h0M720.3 1007.7h0M720.4 1008.8h0M720.8 1008.2h0M720.9 1009.1h0M720.9 1008.1h0M721.6 1007.7h0M722.3 1007.9h0M723.0 1009.2h0M723.0 1008.4h0M723.2 1007.7h0M723.5 1007.9h0M723.5 1007.2h0M723.9 1009.1h0M724.2 1007.7h0M724.7 1008.6h0M725.2 1008.0h0M725.6 1007.8h0M725.8 1007.6h0M726.4 1008.6h0M726.5 1008.0h0M726.6 1009.1h0M726.7 1009.2h0M728.1 1007.7h0M728.9 1008.2h0M729.1 1009.4h0M729.3 1008.8h0M729.3 1008.1h0M729.3 1006.9h0M729.6 1007.3h0M729.7 1007.5h0M730.1 1009.3h0M730.8 1008.2h0M731.0 1007.8h0M731.3 1007.8h0M731.3 1007.8h0M731.6 1008.3h0M731.6 1006.8h0M732.5 1007.0h0M732.9 1008.2h0M733.6 1008.9h0M734.8 1006.5h0M734.9 1008.6h0M735.0 1007.2h0M735.6 1006.6h0M736.5 1008.9h0M736.8 1007.9h0M736.9 1008.4h0M737.1 1007.7h0M737.2 1007.9h0M737.4 1006.6h0M737.6 1007.7h0M737.9 1008.1h0M738.6 1007.3h0M738.6 1008.4h0M739.2 1008.4h0M739.2 1006.4h0M740.1 1008.8h0M740.3 1008.5h0M740.4 1008.1h0M740.4 1009.0h0M741.2 1009.0h0M741.4 1007.3h0M741.5 1008.8h0M741.7 1008.6h0M741.7 1008.4h0M742.1 1008.9h0M742.5 1009.0h0M742.9 1008.0h0M742.9 1006.3h0M743.1 1007.6h0M743.8 1007.6h0M743.8 1009.3h0M745.0 1008.2h0M745.1 1009.1h0M745.5 1007.5h0M745.7 1008.3h0M746.4 1008.1h0M747.4 1008.2h0M747.4 1008.6h0M747.4 1009.3h0M747.5 1007.7h0M747.7 1009.2h0M748.0 1009.1h0M748.1 1008.4h0M748.8 1008.7h0M749.2 1007.9h0M749.3 1007.3h0M749.7 1007.9h0M749.7 1008.0h0M750.4 1008.1h0M750.4 1007.5h0M751.0 1009.2h0M751.1 1007.9h0M751.3 1008.9h0M751.8 1009.1h0M752.4 1008.1h0M752.7 1008.4h0M752.9 1007.7h0M753.7 1007.3h0M753.9 1008.8h0M754.1 1008.2h0M754.1 1006.6h0M754.2 1007.5h0M754.4 1007.0h0M754.5 1008.1h0M754.5 1009.3h0M754.9 1009.0h0M754.9 1007.6h0M755.8 1007.4h0M756.8 1008.7h0M756.8 1008.4h0M756.9 1007.9h0M757.0 1009.3h0M757.3 1008.4h0M757.3 1006.9h0M757.4 1006.4h0M757.5 1008.2h0M758.5 1006.7h0M759.2 1008.6h0M759.3 1008.8h0M759.7 1008.9h0M760.1 1007.4h0M760.4 1008.4h0M760.8 1006.3h0M761.3 1007.9h0M761.4 1008.0h0M762.8 1009.2h0M763.1 1007.0h0M763.4 1008.4h0M764.1 1008.3h0M764.8 1008.9h0M766.2 1007.4h0M767.3 1007.4h0M767.5 1008.6h0M767.5 1008.1h0M767.7 1007.8h0M768.4 1007.4h0M768.6 1008.1h0M768.7 1006.8h0M768.9 1008.3h0M768.9 1008.6h0M770.1 1008.5h0M770.2 1008.7h0M770.3 1008.8h0M770.6 1007.4h0M770.8 1007.9h0M771.4 1008.8h0M772.4 1007.9h0M773.3 1009.1h0M773.9 1008.4h0M774.0 1007.7h0M774.0 1007.6h0M774.4 1008.7h0M774.5 1007.4h0M774.7 1006.7h0M775.4 1008.5h0M776.1 1007.6h0M776.4 1009.4h0M776.5 1009.1h0M777.0 1007.7h0M777.2 1008.1h0M777.7 1008.0h0M778.2 1008.6h0M778.4 1008.4h0M779.6 1007.5h0M780.2 1006.8h0M780.4 1008.3h0M780.5 1009.4h0M780.9 1007.1h0M781.0 1007.7h0M781.1 1007.6h0M782.6 1008.0h0M782.9 1006.3h0M783.9 1008.1h0M785.0 1007.7h0M785.6 1009.2h0M786.0 1008.6h0M786.4 1008.7h0M786.6 1008.2h0M787.0 1007.9h0M787.4 1008.7h0M787.8 1006.8h0M788.4 1009.0h0M788.9 1008.5h0M789.5 1007.9h0M789.6 1009.1h0M789.8 1007.7h0M789.8 1007.6h0M790.0 1008.4h0M790.2 1006.6h0M790.2 1008.1h0M790.5 1007.9h0M791.3 1008.9h0M791.6 1009.4h0M792.3 1008.6h0M792.7 1008.4h0M792.8 1008.5h0M793.6 1007.5h0M793.7 1008.8h0M793.8 1009.0h0M794.0 1009.2h0M794.3 1007.1h0M795.1 1008.6h0M795.2 1008.5h0M796.0 1009.0h0M796.5 1007.4h0M796.7 1008.5h0M797.7 1008.0h0M798.6 1009.1h0M798.9 1007.2h0M799.2 1007.8h0M799.9 1007.7h0M800.1 1007.2h0M800.2 1008.3h0M800.2 1008.3h0M800.6 1007.6h0M800.7 1007.8h0M800.9 1008.3h0M801.1 1008.1h0M803.2 1008.5h0M803.5 1007.6h0M803.5 1007.4h0M804.3 1008.1h0M804.3 1006.7h0M804.7 1009.3h0M805.1 1008.3h0M805.1 1006.8h0M805.3 1008.5h0M805.6 1009.4h0M805.6 1007.0h0M806.2 1007.7h0M808.5 1009.1h0M809.0 1007.5h0M809.1 1008.9h0M810.0 1009.2h0M810.1 1008.3h0M810.5 1008.5h0M810.7 1009.0h0M810.9 1008.4h0M812.1 1008.9h0M812.2 1008.1h0M812.2 1008.2h0M812.7 1007.5h0M812.9 1008.5h0M813.8 1009.2h0M814.3 1009.2h0M815.1 1008.3h0M815.3 1006.9h0M816.3 1007.5h0M816.3 1008.6h0M816.7 1007.4h0M817.5 1009.0h0M817.5 1007.3h0M818.1 1008.4h0M818.2 1007.5h0M818.6 1007.6h0M819.3 1008.3h0M819.4 1007.9h0M819.4 1009.0h0M819.6 1008.2h0M820.3 1007.3h0M821.6 1004.9h0M821.7 1007.6h0M822.2 1008.1h0M822.4 1008.9h0M822.8 1007.3h0M823.0 1009.4h0M823.2 1008.8h0M823.4 1007.9h0M823.8 1009.1h0M824.3 1006.9h0M824.6 1007.3h0M825.5 1008.6h0M826.0 1008.6h0M826.0 1009.2h0M826.2 1009.2h0M826.7 1007.8h0M827.0 1007.6h0M827.7 1007.9h0M827.9 1007.9h0M828.0 1008.6h0M828.1 1007.8h0M828.7 1009.3h0M830.0 1008.1h0M830.3 1007.0h0M830.9 1007.1h0M831.1 1008.5h0M831.7 1008.4h0M832.0 1007.0h0M832.2 1006.7h0M834.3 1009.3h0M834.5 1008.5h0M834.8 1007.9h0M835.2 1007.2h0M835.3 1008.8h0M835.6 1007.6h0M835.8 1008.4h0M836.8 1006.3h0M838.0 1007.8h0M838.0 1008.2h0M838.1 1008.4h0M839.0 1007.3h0M840.2 1007.6h0M840.5 1009.0h0M840.7 1008.0h0M840.7 1009.2h0M840.8 1008.7h0M840.9 1009.1h0M841.3 1009.2h0M842.3 1008.7h0M842.4 1008.9h0M842.6 1007.7h0M842.7 1007.5h0M842.9 1008.3h0M844.6 1009.0h0M844.6 1007.5h0M844.6 1009.1h0M845.3 1009.2h0M846.2 1007.6h0M846.7 1007.6h0M847.1 1007.4h0M848.1 1008.3h0M848.2 1009.1h0M849.2 1008.5h0M849.3 1007.7h0M849.5 1008.7h0M849.7 1008.7h0M849.9 1009.2h0M851.0 1009.0h0M851.8 1007.5h0M852.3 1007.8h0M852.5 1009.0h0M852.7 1009.0h0M853.1 1008.6h0M853.2 1007.7h0M853.4 1009.0h0M853.6 1008.3h0M854.2 1009.0h0M854.4 1009.1h0M854.7 1007.8h0M855.3 1007.4h0M855.4 1009.0h0M855.7 1008.7h0M855.9 1007.5h0M857.4 1008.4h0M857.4 1008.6h0M857.6 1007.7h0M857.6 1008.0h0M857.9 1007.3h0M859.0 1007.5h0M859.1 1008.6h0M859.9 1008.2h0M860.0 1008.2h0M860.1 1009.2h0M860.3 1008.9h0M861.0 1007.4h0M862.1 1009.4h0M862.4 1007.3h0M862.6 1007.9h0M863.2 1008.2h0M863.2 1007.7h0M864.8 1007.8h0M865.7 1007.2h0M865.9 1008.4h0M866.2 1008.3h0M866.3 1008.3h0M867.1 1006.6h0M868.4 1007.4h0M868.5 1008.9h0M868.6 1008.4h0M868.9 1008.7h0M869.4 1008.1h0M869.4 1008.0h0M869.8 1006.3h0M870.0 1009.2h0M870.6 1007.3h0M871.2 1007.8h0M871.7 1008.7h0M871.9 1008.2h0M872.0 1008.5h0M872.4 1008.1h0M872.7 1007.3h0M872.8 1009.3h0M872.9 1007.1h0M873.0 1008.4h0M873.1 1006.9h0M873.6 1007.8h0M873.8 1007.2h0M874.7 1007.7h0M875.3 1007.3h0M875.7 1008.1h0M876.9 1008.8h0M877.0 1007.6h0M877.1 1007.6h0M877.1 1006.5h0M877.1 1009.1h0M878.5 1008.3h0M878.8 1007.3h0M878.9 1009.1h0M879.2 1008.3h0M879.3 1006.5h0M879.3 1007.0h0M879.6 1008.8h0M879.7 1007.0h0M879.8 1007.2h0M880.0 1007.5h0M880.2 1007.8h0M880.3 1007.9h0M880.4 1008.8h0M880.5 1008.5h0M881.6 1007.5h0M881.9 1008.0h0M882.1 1006.7h0M882.1 1008.4h0M882.4 1008.8h0M882.5 1008.4h0M883.0 1007.9h0M883.2 1007.8h0M884.6 1008.1h0M884.8 1008.8h0M885.2 1006.9h0M885.2 1008.6h0M885.7 1007.6h0M886.0 1008.3h0M886.6 1009.1h0M886.8 1007.0h0M886.9 1008.7h0M887.4 1008.8h0M887.4 1007.8h0M887.7 1008.4h0M887.8 1007.5h0M888.0 1008.2h0M888.1 1008.5h0M889.1 1006.4h0M889.6 1008.3h0M889.9 1008.2h0M890.0 1009.0h0M890.9 1008.7h0M891.9 1007.6h0M892.0 1007.7h0M892.0 1008.1h0M892.1 1008.7h0M892.3 1007.6h0M892.6 1009.4h0M893.2 1008.4h0M893.3 1008.3h0M893.6 1008.8h0M893.7 1008.0h0M894.0 1008.6h0M894.1 1008.7h0M894.4 1006.7h0M894.4 1007.5h0M895.2 1007.2h0M896.2 1008.1h0M896.3 1007.4h0M896.5 1007.5h0M897.5 1007.2h0M897.7 1006.3h0M898.2 1008.3h0M898.8 1007.9h0M899.1 1008.1h0M900.4 1007.9h0M900.4 1009.2h0M900.8 1008.1h0M903.2 1007.6h0M904.0 1008.6h0M904.3 1007.2h0M904.7 1007.1h0M905.0 1008.4h0M905.3 1007.0h0M905.7 1006.7h0M905.8 1007.7h0M906.2 1008.9h0M906.3 1006.9h0M906.6 1008.2h0M907.8 1008.4h0M908.2 1008.0h0M908.4 1008.5h0M909.1 1007.3h0M909.5 1007.5h0M909.6 1007.1h0M910.9 1007.6h0M911.0 1008.7h0M911.5 1008.2h0M911.6 1007.4h0M911.6 1008.4h0M911.7 1005.8h0M911.7 1008.3h0M912.0 1008.6h0M912.2 1007.2h0M912.3 1007.5h0M912.6 1008.1h0M912.9 1008.3h0M913.0 1007.8h0M913.8 1007.4h0M914.1 1007.5h0M914.3 1008.3h0M914.7 1007.8h0M915.4 1007.4h0M915.9 1007.5h0M915.9 1008.3h0M916.5 1008.8h0M916.5 1008.7h0M917.0 1008.3h0M917.0 1008.0h0M917.1 1007.4h0M917.3 1007.6h0M917.4 1008.2h0M917.7 1008.1h0M917.9 1006.7h0M918.0 1008.6h0M918.5 1007.9h0M918.9 1006.9h0M919.6 1007.8h0M920.1 1009.1h0M920.4 1007.8h0M920.5 1008.4h0M920.6 1008.2h0M920.6 1007.3h0M921.6 1007.7h0M921.7 1008.3h0M921.8 1007.4h0M922.0 1007.8h0M922.4 1008.0h0M923.6 1007.9h0M923.9 1007.9h0M924.3 1008.4h0M924.5 1008.5h0M924.6 1008.1h0M925.0 1008.8h0M925.4 1009.1h0M925.9 1007.1h0M926.1 1008.3h0M926.4 1008.1h0M927.2 1008.2h0M927.6 1008.1h0M928.5 1008.1h0M928.6 1008.0h0M928.7 1008.7h0M929.3 1007.4h0M929.4 1008.6h0M929.7 1007.3h0M929.7 1009.2h0M930.1 1008.9h0M930.2 1007.3h0M931.3 1008.2h0M931.5 1008.6h0M931.8 1007.8h0M932.2 1008.9h0M932.5 1008.0h0M933.4 1009.0h0M933.6 1008.4h0M933.8 1008.6h0M933.9 1007.7h0M933.9 1007.4h0M934.4 1008.8h0M934.8 1006.8h0M934.9 1008.6h0M935.3 1009.1h0M935.3 1008.8h0M935.5 1006.9h0M935.8 1008.2h0M935.8 1008.6h0M936.0 1008.7h0M936.1 1009.0h0M936.4 1007.0h0M938.1 1008.2h0M938.2 1006.7h0M938.5 1008.3h0M938.7 1008.9h0M938.8 1007.4h0M939.6 1008.4h0M939.6 1008.3h0M939.7 1006.9h0M940.2 1008.3h0M940.6 1007.2h0M941.3 1008.1h0M941.5 1008.7h0M941.6 1007.7h0M942.1 1008.6h0M944.3 1007.1h0M945.1 1007.3h0M945.2 1008.0h0M945.5 1007.6h0M945.8 1007.7h0M945.9 1008.3h0M946.2 1007.4h0M946.4 1008.3h0M946.6 1007.6h0M946.8 1008.8h0M948.6 1008.0h0M949.0 1007.8h0M951.1 1008.7h0M951.7 1008.4h0M951.8 1008.5h0M952.1 1007.5h0M952.8 1008.7h0M953.0 1007.7h0M953.2 1006.9h0M953.6 1007.8h0M953.8 1009.4h0M953.9 1008.0h0M954.1 1007.3h0M954.2 1008.3h0M954.5 1007.2h0M955.2 1007.6h0M955.4 1007.8h0M955.9 1008.3h0M956.1 1008.5h0M956.1 1008.3h0M956.2 1008.0h0M956.3 1007.7h0M956.5 1007.8h0M957.0 1008.3h0M957.5 1008.0h0M957.6 1007.8h0M957.6 1009.4h0M957.8 1008.7h0M959.0 1008.7h0M959.0 1008.2h0M959.0 1008.3h0M959.4 1008.3h0M959.9 1008.8h0M960.7 1007.6h0M963.5 1007.9h0M963.5 1009.4h0M963.5 1008.1h0M963.7 1009.0h0M964.0 1006.8h0M964.0 1008.4h0M964.3 1008.4h0M964.5 1008.0h0M965.0 1008.2h0M965.6 1008.1h0M965.7 1006.9h0M966.2 1007.9h0M966.4 1007.4h0M966.5 1007.2h0M967.8 1008.8h0M967.9 1006.8h0M968.2 1007.5h0M968.3 1007.3h0M968.6 1008.8h0M968.6 1007.4h0M968.8 1007.8h0M969.1 1008.5h0M969.2 1006.3h0M969.6 1007.6h0M969.7 1008.3h0M969.9 1007.9h0M970.4 1007.4h0M971.7 1007.2h0M971.8 1007.6h0M972.2 1007.1h0M972.2 1006.9h0M972.5 1009.0h0M972.6 1008.5h0M973.2 1008.8h0M973.2 1008.0h0M973.8 1006.9h0M974.3 1007.6h0M974.8 1008.9h0M975.0 1008.3h0M975.2 1007.3h0M975.4 1008.5h0M975.5 1008.2h0M975.8 1007.8h0M975.9 1009.3h0M976.0 1007.5h0M976.3 1007.8h0M976.7 1007.6h0M977.6 1008.8h0M977.7 1008.7h0M977.9 1008.5h0M978.1 1007.9h0M978.4 1008.0h0M978.5 1008.0h0M978.5 1006.7h0M979.0 1007.1h0M979.9 1008.6h0M980.2 1008.6h0M980.5 1006.7h0M981.7 1008.3h0M982.0 1007.0h0M982.0 1006.8h0M982.2 1008.5h0M983.2 1008.3h0M983.3 1008.0h0M983.4 1008.8h0M983.5 1008.8h0M983.5 1008.4h0M983.7 1007.4h0M984.1 1008.4h0M984.6 1008.2h0M984.7 1008.4h0M984.8 1009.1h0M985.0 1006.9h0M985.4 1008.9h0M985.5 1008.6h0M985.8 1007.6h0M985.9 1009.2h0M988.1 1007.6h0M988.2 1007.1h0M988.3 1008.8h0M989.2 1007.9h0M989.2 1008.9h0M990.2 1007.7h0M990.2 1008.0h0M990.3 1007.9h0M990.4 1007.0h0M991.9 1007.7h0M992.1 1007.0h0M992.1 1007.6h0M992.5 1009.0h0M992.8 1007.9h0M993.6 1007.7h0M994.7 1009.2h0M994.8 1007.0h0M994.9 1008.0h0M995.9 1007.8h0M995.9 1008.8h0M996.4 1008.0h0M996.5 1007.8h0M998.2 1008.3h0M998.5 1008.0h0M998.5 1009.1h0M998.8 1007.0h0M999.2 1009.0h0M999.5 1009.0h0M999.6 1008.8h0M1000.0 1008.7h0M1000.2 1007.7h0M1000.2 1008.8h0M1000.2 1007.9h0M1000.7 1008.8h0M1000.8 1006.4h0M1001.4 1007.7h0M1001.8 1006.5h0M1002.2 1008.9h0M1002.2 1007.6h0M1002.2 1008.8h0M1002.3 1007.6h0M1003.2 1007.6h0M1003.2 1009.3h0M1003.7 1009.0h0M1004.8 1009.0h0M1005.0 1009.3h0M1006.0 1008.7h0M1006.9 1008.8h0M1007.0 1009.2h0M1007.9 1008.0h0M1008.0 1007.7h0M1008.0 1009.1h0M1008.4 1008.5h0M1008.6 1008.1h0M1009.3 1008.3h0M1009.5 1008.6h0M1009.7 1007.5h0M1010.6 1007.4h0M1011.3 1007.6h0M1011.8 1008.2h0M1011.9 1006.5h0M1012.0 1006.7h0M1012.1 1008.4h0M1012.5 1008.2h0M1012.6 1007.2h0M1012.8 1008.7h0M1013.0 1007.8h0M1013.7 1008.1h0M1014.2 1008.6h0M1015.4 1008.3h0M1015.6 1009.3h0M1015.7 1008.5h0M1015.9 1009.2h0M1015.9 1006.3h0M1017.7 1006.9h0M1017.7 1007.1h0M1017.8 1007.9h0M1018.1 1007.3h0M1018.1 1007.1h0M1018.2 1007.3h0M1018.6 1007.4h0M1019.3 1008.8h0M1019.8 1007.8h0M1020.2 1008.5h0M1020.3 1009.0h0M1020.7 1009.0h0M1020.9 1007.8h0M1021.2 1007.3h0M1021.6 1009.2h0M1021.7 1006.7h0M1022.3 1006.9h0M1022.6 1008.4h0M1023.4 1008.5h0M1023.7 1008.1h0M1024.0 1007.3h0M1024.1 1008.4h0M1024.1 1009.0h0M1025.1 1007.8h0M1025.2 1009.1h0M1025.3 1008.0h0M1025.3 1007.2h0M1025.7 1007.9h0M1026.3 1007.5h0M1026.5 1007.7h0M1026.6 1007.5h0M1026.6 1008.0h0M1028.5 1008.7h0M1028.6 1008.3h0M1028.8 1008.2h0M1029.2 1007.1h0M1029.4 1006.8h0M1029.4 1007.8h0M1029.6 1008.7h0M1029.7 1008.7h0M1030.0 1008.2h0M1030.0 1007.0h0M1030.3 1007.8h0M1030.4 1008.1h0M1030.6 1008.7h0M1031.8 1007.4h0M1032.2 1007.9h0M1032.3 1008.1h0M1032.8 1008.0h0M1033.4 1006.8h0M1033.8 1008.2h0M1033.9 1006.8h0M1033.9 1007.1h0M1034.0 1008.1h0M1034.4 1007.4h0M1034.5 1008.2h0M1035.2 1008.7h0M1035.2 1008.3h0M1035.5 1008.8h0M1036.4 1007.7h0M1036.5 1008.1h0M1036.6 1007.7h0M1037.0 1007.4h0M1037.3 1008.3h0M1037.8 1007.9h0M1037.9 1009.3h0M1038.2 1008.0h0M1038.6 1008.8h0M1038.8 1008.0h0M1039.6 1007.0h0M1039.6 1009.4h0M1040.1 1007.9h0M1040.1 1008.2h0M1040.5 1009.2h0M1041.2 1007.6h0M1041.9 1008.1h0M1042.7 1008.5h0M1042.7 1008.7h0M1043.0 1005.6h0M1043.1 1008.4h0M1043.8 1009.3h0M1044.6 1008.8h0M1044.9 1008.4h0M1045.1 1008.4h0M1045.2 1008.2h0M1045.9 1008.9h0M1046.9 1007.7h0M1047.1 1008.5h0M1047.4 1009.2h0M1047.5 1008.7h0M1048.0 1008.4h0M1048.7 1007.4h0M1049.9 1007.7h0M1050.2 1008.4h0M1050.3 1008.1h0M1051.0 1007.9h0M1051.2 1006.5h0M1051.9 1008.6h0M1052.4 1007.7h0M1052.4 1007.5h0M1052.6 1008.8h0M1053.0 1007.9h0M1053.5 1008.0h0M1053.5 1008.5h0M1053.6 1007.7h0M1053.8 1007.3h0M1054.1 1007.2h0M1054.3 1008.2h0M1054.3 1007.9h0M1055.1 1006.3h0M1055.2 1009.0h0M1055.7 1007.9h0M1057.7 1007.4h0M1057.9 1008.0h0M1058.0 1007.6h0M1058.8 1008.0h0M1059.2 1007.5h0M1059.4 1007.1h0M1059.9 1008.3h0M1060.1 1007.9h0M1060.3 1008.1h0M1061.2 1008.4h0M1061.6 1008.1h0M1062.1 1009.0h0M1062.5 1007.5h0M1063.2 1006.8h0M1064.2 1006.8h0M1064.3 1007.1h0M1064.5 1008.8h0M1064.6 1006.9h0M1066.2 1008.7h0M1066.4 1008.1h0M1066.8 1006.6h0M1069.4 1008.9h0M1069.9 1007.4h0M1070.1 1007.9h0M1070.1 1008.2h0M1071.2 1008.8h0M1071.4 1007.8h0M1071.5 1008.5h0M1071.6 1007.3h0M1071.9 1007.1h0M1071.9 1009.2h0M1072.1 1008.5h0M1072.2 1008.3h0M1072.4 1009.0h0M1072.9 1009.0h0M1073.5 1008.0h0M1074.2 1008.3h0M1074.3 1009.4h0M1075.0 1008.5h0M1075.4 1007.7h0M1075.4 1009.0h0M1075.8 1008.8h0M1076.1 1006.9h0M1076.7 1007.1h0M1076.8 1009.4h0M1077.1 1009.2h0M1077.1 1007.8h0M1077.4 1009.0h0M1078.0 1008.3h0M1078.2 1008.4h0M1078.3 1007.7h0M1078.8 1008.7h0M1079.0 1009.0h0M1079.6 1009.1h0M1079.9 1007.3h0M1080.0 1008.2h0M1080.5 1009.4h0M1080.5 1007.7h0M1080.8 1007.5h0M1081.4 1008.3h0M1081.7 1008.4h0M1082.3 1007.8h0M1082.3 1007.1h0M1082.4 1008.0h0M1082.8 1007.7h0M1083.1 1008.1h0M1083.3 1008.4h0M1083.6 1008.8h0M1083.7 1007.9h0M1084.1 1008.3h0M1085.0 1008.3h0M1085.0 1007.4h0M1086.4 1007.7h0M1086.8 1007.4h0M1086.9 1009.3h0M1087.3 1007.7h0M1087.6 1008.6h0M1087.6 1008.7h0M1088.0 1008.8h0M1088.2 1007.1h0M1088.6 1007.4h0M1089.2 1008.7h0M1089.4 1009.0h0M1091.0 1008.1h0M1091.4 1008.5h0M1091.4 1006.8h0M1091.9 1009.2h0M1092.1 1009.3h0M1092.1 1008.3h0M1092.2 1008.1h0M1092.6 1008.0h0M1093.0 1007.5h0M1093.4 1006.5h0M1094.0 1008.4h0M1094.0 1008.5h0M1094.0 1009.3h0M1094.1 1007.9h0M1094.1 1007.4h0M1094.2 1008.3h0M1094.3 1007.2h0M1094.4 1008.1h0M1094.5 1006.9h0M1094.7 1007.8h0M1095.0 1008.9h0M1095.2 1008.6h0M1095.3 1009.3h0M1095.4 1009.3h0M1096.4 1007.9h0M1097.0 1007.4h0M1098.2 1006.6h0M1098.4 1008.1h0M1098.9 1008.3h0M1098.9 1009.0h0M1099.0 1007.3h0M1099.5 1007.8h0M1100.3 1008.6h0M1100.4 1007.6h0M1101.0 1007.7h0M1101.1 1009.2h0M1102.0 1007.5h0M1102.2 1008.0h0M1102.8 1008.4h0M1103.1 1008.4h0M1103.3 1006.7h0M1103.4 1006.9h0M1103.7 1006.7h0M1104.2 1009.0h0M1105.2 1008.6h0M1105.4 1007.4h0M1105.7 1009.0h0M1105.8 1008.7h0M1106.1 1009.3h0M1106.2 1006.6h0M1106.2 1007.3h0M1106.7 1007.7h0M1106.8 1007.9h0M1107.8 1008.4h0M1109.0 1008.4h0M1109.0 1007.6h0M1109.4 1008.7h0M1109.6 1007.1h0M1109.7 1008.5h0M1110.1 1008.8h0M1110.2 1007.1h0M1110.7 1008.2h0M1110.9 1007.7h0M1111.7 1008.4h0M1112.1 1008.9h0M1112.2 1007.7h0M1112.4 1009.1h0M1112.7 1007.2h0M1113.3 1009.3h0M1113.6 1009.2h0M1113.8 1007.9h0M1114.0 1007.8h0M1114.2 1008.0h0M1114.2 1009.0h0M1114.8 1007.4h0M1114.8 1009.2h0M1115.0 1008.5h0M1116.4 1008.7h0M1116.9 1008.4h0M1117.3 1007.4h0M1117.5 1008.6h0M1118.5 1007.7h0M1118.9 1007.6h0M1120.0 1009.4h0M1120.1 1009.0h0M1120.5 1008.4h0M1120.6 1008.6h0M1120.8 1007.9h0M1120.9 1009.2h0M1121.1 1007.5h0M1121.2 1007.5h0M1122.2 1008.2h0M1122.3 1009.2h0M1123.0 1008.1h0M1123.2 1008.5h0M1123.8 1007.7h0M1123.9 1008.2h0M1125.2 1007.5h0M1125.3 1008.4h0M1125.8 1007.0h0M1126.0 1008.9h0M1126.1 1008.9h0M1126.2 1007.7h0M1127.9 1009.3h0M1128.1 1007.5h0M1128.6 1009.0h0M1128.6 1008.0h0M1128.8 1008.8h0M1129.4 1008.4h0M1130.7 1008.0h0M1130.8 1008.2h0M1131.5 1008.4h0M1132.1 1006.4h0M1132.2 1008.1h0M1132.7 1008.9h0M1133.2 1007.4h0M1133.4 1007.5h0M1133.4 1007.1h0M1133.5 1006.7h0M1133.5 1008.8h0M1133.6 1007.3h0M1133.7 1007.2h0M1133.7 1008.1h0M1134.5 1007.9h0M1134.8 1008.4h0M1135.2 1008.5h0M1135.6 1006.7h0M1135.8 1009.3h0M1136.4 1008.5h0M1137.2 1007.9h0M1137.4 1007.6h0M1137.9 1006.8h0M1138.9 1009.3h0M1139.6 1008.1h0M1140.1 1007.4h0M1140.2 1009.1h0M1141.1 1008.1h0M1141.3 1006.6h0M1142.8 1007.1h0M1142.8 1007.7h0M1142.9 1008.7h0M1143.1 1008.2h0M1143.6 1007.8h0M1143.6 1008.3h0M1143.7 1008.1h0M1143.8 1005.7h0M1143.8 1008.3h0M1144.1 1008.9h0M1144.7 1007.9h0M1145.2 1008.3h0M1145.9 1008.3h0M1146.1 1008.2h0M1146.4 1007.5h0M1146.6 1007.9h0M1146.6 1009.0h0M1146.6 1008.2h0M1147.0 1007.7h0M1147.6 1008.5h0M1148.0 1007.2h0M1148.7 1007.5h0M1148.9 1008.9h0M1149.2 1007.8h0M1149.3 1006.5h0M1149.4 1006.9h0M1150.1 1008.1h0M1150.4 1007.4h0M1150.7 1008.6h0M1151.3 1009.2h0M1151.5 1007.7h0M1152.1 1007.9h0M1152.4 1007.7h0M1153.3 1008.1h0M1153.5 1007.8h0M1153.7 1008.5h0M1153.8 1007.7h0M1154.4 1007.4h0M1154.7 1008.1h0M1155.0 1007.5h0M1155.3 1009.3h0M1155.3 1008.7h0M1156.1 1007.0h0M1156.1 1006.7h0M1156.5 1007.9h0M1157.8 1008.2h0M1158.2 1009.1h0M1158.2 1007.8h0M1158.3 1007.5h0M1158.5 1009.3h0M1158.6 1007.7h0M1158.6 1007.7h0M1158.7 1007.7h0M1159.3 1009.0h0M1159.8 1007.7h0M1160.4 1009.3h0M1161.7 1006.9h0M1162.5 1008.0h0M1162.6 1009.0h0M1162.8 1007.0h0M1162.8 1007.2h0M1162.9 1008.6h0M1162.9 1006.4h0M1163.4 1008.9h0M1163.6 1007.8h0M1163.9 1007.2h0M1164.2 1008.9h0M1164.5 1007.3h0M1164.6 1008.1h0M1165.4 1008.1h0M1166.0 1008.9h0M1166.1 1007.8h0M1166.2 1009.0h0M1166.4 1008.9h0M1167.0 1008.4h0M1167.4 1009.1h0M1167.8 1006.9h0M1168.0 1009.1h0M1168.9 1008.7h0M1169.0 1008.3h0M1170.5 1008.1h0M1170.6 1007.5h0M1170.9 1007.5h0M1171.0 1008.3h0M1171.5 1008.4h0M1171.6 1008.1h0M1172.4 1007.5h0M1172.5 1007.5h0M1172.6 1008.5h0M1173.0 1009.1h0M1173.1 1006.4h0M1173.3 1007.4h0M1174.0 1007.9h0M1174.1 1007.8h0M1174.5 1008.5h0M1174.8 1008.9h0M1174.9 1008.4h0M1175.4 1008.3h0M1175.9 1008.6h0M1176.4 1009.2h0M1176.5 1008.3h0M1177.5 1007.6h0M1178.2 1008.5h0M1178.4 1008.1h0M1178.5 1009.1h0M1178.8 1008.3h0M1179.3 1008.2h0M1179.3 1009.1h0M1179.4 1009.4h0M1180.3 1007.8h0M1180.7 1008.7h0M1180.8 1007.7h0M1181.4 1008.4h0M1181.4 1007.6h0M1181.6 1008.4h0M1182.2 1009.3h0M1182.5 1008.2h0M1182.9 1008.4h0M1183.0 1007.6h0M1183.5 1008.4h0M1183.6 1008.4h0M1184.1 1007.4h0M1184.8 1007.2h0M1184.9 1007.5h0M1184.9 1007.3h0M1184.9 1007.7h0M1184.9 1007.5h0M1185.0 1007.4h0M1185.2 1007.8h0M1185.6 1008.0h0M1185.8 1008.0h0M1186.0 1006.2h0M1186.0 1008.1h0M1186.1 1008.3h0M1186.2 1008.4h0M1187.2 1008.1h0M1187.6 1007.9h0M1187.9 1009.0h0M1188.1 1009.2h0M1188.7 1007.9h0M1188.7 1009.4h0M1189.0 1007.9h0M1189.4 1008.0h0M1189.5 1007.2h0M1189.8 1006.8h0M1189.8 1007.8h0M1190.1 1008.5h0M1191.0 1009.0h0M1191.4 1008.7h0M1192.0 1008.1h0M1193.3 1009.1h0M1193.4 1008.0h0M1193.8 1008.1h0M1193.9 1007.6h0M1194.3 1008.4h0M1194.5 1008.0h0M1195.4 1008.7h0M1196.1 1008.5h0M1196.2 1009.3h0M1196.4 1008.0h0M1197.4 1006.9h0M1198.8 1008.0h0M1199.3 1007.8h0M1199.8 1008.9h0M1200.4 1007.0h0M1200.5 1008.7h0M1200.7 1007.5h0M1200.8 1008.0h0M1202.4 1008.8h0M1202.5 1007.3h0M1202.8 1008.1h0M1203.5 1008.0h0M1204.0 1007.7h0M1205.2 1008.1h0M1205.3 1008.4h0M1205.9 1007.7h0M1206.0 1008.4h0M1206.2 1008.0h0M1206.3 1008.6h0M1206.5 1009.3h0M1206.6 1008.6h0M1206.7 1008.5h0M1206.9 1008.1h0M1207.2 1007.2h0M1207.2 1009.4h0M1207.4 1008.0h0M1208.0 1009.0h0M1208.1 1008.9h0M1208.3 1008.5h0M1208.4 1008.9h0M1209.4 1009.3h0M1209.6 1008.0h0M1210.3 1008.0h0M1210.5 1008.2h0M1210.7 1008.7h0M1210.9 1006.4h0M1211.0 1008.2h0M1211.0 1008.8h0M1211.0 1006.8h0M1211.2 1007.6h0M1211.3 1008.4h0M1212.3 1007.2h0M1213.2 1008.0h0M1213.4 1007.6h0M1213.6 1007.9h0M1213.7 1008.9h0M1214.4 1007.3h0M1214.5 1008.0h0M1214.8 1008.9h0M1214.9 1008.7h0M1215.3 1007.3h0M1215.9 1008.4h0M1215.9 1008.1h0M1216.0 1007.6h0M1216.0 1008.0h0M1216.6 1009.3h0M1218.3 1007.6h0M1218.7 1007.4h0M1218.9 1007.4h0M1219.5 1006.8h0M1219.7 1007.8h0M1219.8 1007.5h0M1219.9 1006.9h0M1220.3 1008.3h0M1220.5 1006.7h0M1220.6 1006.7h0M1220.7 1007.5h0M1221.1 1006.7h0M1222.3 1007.4h0M1224.3 1008.8h0M1224.7 1007.2h0M1225.4 1007.8h0M1225.4 1007.8h0M1226.9 1008.0h0M1227.0 1007.0h0M1227.1 1007.7h0M1228.9 1008.6h0M1229.0 1007.7h0M1229.2 1007.5h0M1229.4 1008.7h0M1229.5 1008.4h0M1229.5 1008.4h0M1230.1 1008.6h0M1230.2 1007.8h0M1230.3 1007.3h0M1230.5 1006.6h0M1230.6 1007.2h0M1230.6 1007.3h0M1231.0 1007.2h0M1231.5 1007.0h0M1231.7 1008.4h0M1232.1 1007.6h0M1232.1 1007.8h0M1232.5 1008.2h0M1233.4 1008.5h0M1233.5 1008.5h0M1233.5 1008.3h0M1233.5 1009.1h0M1234.2 1007.7h0M1234.3 1008.1h0M1234.7 1008.0h0M1236.2 1007.8h0M1236.4 1007.5h0M1236.9 1008.6h0M1237.0 1008.2h0M1237.2 1009.4h0M1237.6 1009.0h0M1237.7 1009.2h0M1238.0 1006.9h0M1238.6 1009.3h0M1238.8 1007.7h0M1239.3 1006.9h0M1239.9 1008.5h0M1240.1 1006.8h0M1240.1 1006.6h0M1240.3 1007.4h0M1240.5 1006.2h0M1240.7 1007.6h0M1241.0 1008.7h0M1241.3 1007.7h0M1241.4 1008.4h0M1242.0 1009.1h0M1242.0 1009.1h0M1243.3 1006.3h0M1243.4 1008.5h0M1243.4 1008.1h0M1243.5 1008.6h0M1243.7 1008.0h0M1244.4 1008.3h0M1245.4 1008.4h0M1245.9 1009.0h0M1246.2 1009.2h0M1246.5 1008.7h0M1246.8 1007.9h0M1246.9 1006.5h0M1247.3 1007.3h0M1247.4 1006.7h0M1247.8 1007.7h0M1248.2 1008.2h0M1248.4 1009.1h0M1248.6 1008.1h0M1249.0 1009.0h0M1249.4 1008.3h0M1249.7 1006.8h0M1249.9 1007.8h0M1250.1 1007.2h0M1251.9 1008.4h0M1252.4 1009.2h0M1253.0 1008.5h0M1254.4 1008.4h0M1255.4 1007.1h0M1256.0 1006.5h0M1256.3 1008.7h0M1256.9 1008.4h0M1257.0 1008.2h0M1257.3 1008.4h0M1257.3 1009.1h0M1257.8 1008.0h0M1258.0 1007.8h0M1258.0 1007.8h0M1258.1 1009.0h0M1258.8 1008.2h0M1258.9 1009.4h0M1259.2 1007.4h0M1259.5 1008.9h0M1259.5 1008.3h0M1259.6 1008.4h0M1259.8 1008.5h0M1260.2 1008.9h0M1260.5 1009.3h0M1260.6 1006.7h0M1261.3 1007.9h0M1263.1 1007.9h0M1263.1 1006.4h0M1263.4 1008.2h0M1263.4 1007.6h0M1263.7 1008.1h0M1263.9 1007.1h0M1264.0 1007.7h0M1264.8 1007.8h0M1265.3 1008.3h0M1265.4 1007.9h0M1265.5 1007.2h0M1265.5 1009.1h0M1265.8 1008.2h0M1266.0 1008.4h0M1266.2 1008.3h0M1266.6 1009.2h0M1267.0 1007.5h0M1267.2 1008.7h0M1268.3 1008.2h0M1268.5 1008.5h0M1268.8 1009.4h0M1269.1 1008.4h0M1270.4 1009.3h0M1271.0 1008.8h0M1271.1 1008.3h0M1271.2 1008.1h0M1271.5 1008.0h0M1271.7 1008.2h0M1273.7 1006.4h0M1274.4 1007.7h0M1274.5 1009.0h0M1274.6 1008.5h0M1275.4 1008.6h0M1276.7 1008.2h0M1276.9 1008.5h0M1277.4 1008.7h0M1278.6 1006.8h0M1278.8 1008.0h0M1279.5 1008.3h0M1279.6 1008.3h0M1279.9 1008.2h0M1280.5 1007.0h0M1280.7 1007.7h0M1280.9 1007.2h0M1281.4 1008.3h0M1282.4 1007.8h0M1282.6 1007.2h0M1282.8 1006.5h0M1283.5 1008.0h0M1284.2 1009.4h0M1284.7 1007.6h0M1284.9 1008.5h0M1285.0 1009.3h0M1285.9 1008.6h0M1287.2 1007.2h0M1287.2 1007.1h0M1287.2 1007.5h0M1289.0 1008.9h0M1289.5 1006.1h0M1289.6 1009.0h0M1289.8 1008.1h0M1290.3 1009.2h0M1290.8 1007.0h0M1290.9 1007.7h0M1290.9 1007.4h0M1291.2 1008.0h0M1291.5 1008.1h0M1291.6 1007.9h0M1291.8 1009.3h0M1291.9 1007.3h0M1292.2 1007.3h0M1292.2 1008.4h0M1292.2 1008.1h0M1292.2 1007.8h0M1292.3 1006.8h0M1292.8 1007.7h0M1293.0 1008.0h0M1293.1 1008.5h0M1293.2 1009.2h0M1293.6 1008.5h0M1293.7 1008.0h0M1294.2 1008.3h0M1294.6 1008.0h0M1294.8 1007.5h0M1295.2 1007.7h0M1296.4 1007.8h0M1296.6 1007.5h0M1297.1 1007.9h0M1297.6 1008.1h0M1297.7 1007.7h0M1297.7 1009.4h0M1298.0 1007.1h0M1298.5 1009.1h0M1299.2 1007.4h0M1299.4 1008.0h0M1299.4 1007.2h0M1299.6 1008.0h0M1299.7 1008.8h0M1300.3 1007.2h0M1301.8 1007.9h0M1302.1 1008.0h0M1302.2 1008.0h0M298.3 1001.7h0M393.3 1004h0M530 994.3h0M717.3 1004h0M861.3 1000.3h0M1033.3 1001.7h0M1062.3 1004h0M1111.3 1001.7h0" stroke="#000" stroke-width="3.2" fill="none" stroke-linecap="round"/><circle cx="315.4" cy="856.5" r="1.25" fill="#333" stroke="#000" stroke-width="0.7"/><circle cx="315.4" cy="889.5" r="1.25" fill="#333" stroke="#000" stroke-width="0.7"/><circle cx="631.5" cy="856.5" r="1.25" fill="#333" stroke="#000" stroke-width="0.7"/><circle cx="631.5" cy="889.5" r="1.25" fill="#333" stroke="#000" stroke-width="0.7"/><circle cx="931.5" cy="856.5" r="1.25" fill="#333" stroke="#000" stroke-width="0.7"/><circle cx="931.5" cy="889.5" r="1.25" fill="#333" stroke="#000" stroke-width="0.7"/><circle cx="1053.3" cy="856.5" r="1.25" fill="#333" stroke="#000" stroke-width="0.7"/><circle cx="1053.3" cy="889.5" r="1.25" fill="#333" stroke="#000" stroke-width="0.7"/><circle cx="1064.3" cy="856.5" r="1.25" fill="#333" stroke="#000" stroke-width="0.7"/><circle cx="1064.3" cy="889.5" r="1.25" fill="#333" stroke="#000" stroke-width="0.7"/><circle cx="1114.3" cy="856.5" r="1.25" fill="#333" stroke="#000" stroke-width="0.7"/><circle cx="1114.3" cy="889.5" r="1.25" fill="#333" stroke="#000" stroke-width="0.7"/><circle cx="1215.3" cy="856.5" r="1.25" fill="#333" stroke="#000" stroke-width="0.7"/><circle cx="1215.3" cy="889.5" r="1.25" fill="#333" stroke="#000" stroke-width="0.7"/><circle cx="1270.3" cy="856.5" r="1.25" fill="#333" stroke="#000" stroke-width="0.7"/><circle cx="1270.3" cy="889.5" r="1.25" fill="#333" stroke="#000" stroke-width="0.7"/><circle cx="1302.9" cy="758.5" r="1.25" fill="#333" stroke="#000" stroke-width="0.7"/><path d="M315.4 955.4l-2.2 3.8h4.4zM631.5 955.4l-2.2 3.8h4.4zM931.5 955.4l-2.2 3.8h4.4zM1053.3 955.4l-2.2 3.8h4.4zM1064.3 955.4l-2.2 3.8h4.4zM1114.3 955.4l-2.2 3.8h4.4zM1215.3 955.4l-2.2 3.8h4.4zM1270.3 955.4l-2.2 3.8h4.4zM1302.9 955.4l-2.2 3.8h4.4z" fill="#ff0000"/><line x1="162.0" y1="1011.0" x2="162.0" y2="725.5" stroke="#800080" stroke-width="2" stroke-dasharray="2.08 3.44"/><line x1="1303.0" y1="1011.0" x2="1303.0" y2="725.5" stroke="#800080" stroke-width="2" stroke-dasharray="2.08 3.44"/></g><line x1="105.5" y1="954.5" x2="1485.5" y2="954.5" stroke="#000" stroke-width="1.11"/><rect x="105.5" y="725.5" width="1380.0" height="286.0" fill="none" stroke="#000" stroke-width="1.11"/><line x1="162.5" y1="1011.5" x2="162.5" y2="1016.36" stroke="#000" stroke-width="1.11"/><text x="163.40" y="1032.10" font-size="13.89" text-anchor="middle" textLength="8.84" lengthAdjust="spacingAndGlyphs">0</text><line x1="384.1" y1="1011.5" x2="384.1" y2="1016.36" stroke="#000" stroke-width="1.11"/><text x="385.00" y="1032.10" font-size="13.89" text-anchor="middle" textLength="35.35" lengthAdjust="spacingAndGlyphs">2000</text><line x1="605.7" y1="1011.5" x2="605.7" y2="1016.36" stroke="#000" stroke-width="1.11"/><text x="606.60" y="1032.10" font-size="13.89" text-anchor="middle" textLength="35.35" lengthAdjust="spacingAndGlyphs">4000</text><line x1="827.3" y1="1011.5" x2="827.3" y2="1016.36" stroke="#000" stroke-width="1.11"/><text x="828.20" y="1032.10" font-size="13.89" text-anchor="middle" textLength="35.35" lengthAdjust="spacingAndGlyphs">6000</text><line x1="1048.9" y1="1011.5" x2="1048.9" y2="1016.36" stroke="#000" stroke-width="1.11"/><text x="1049.80" y="1032.10" font-size="13.89" text-anchor="middle" textLength="35.35" lengthAdjust="spacingAndGlyphs">8000</text><line x1="1270.5" y1="1011.5" x2="1270.5" y2="1016.36" stroke="#000" stroke-width="1.11"/><text x="1271.40" y="1032.10" font-size="13.89" text-anchor="middle" textLength="44.19" lengthAdjust="spacingAndGlyphs">10000</text><line x1="100.64" y1="758.5" x2="105.5" y2="758.5" stroke="#000" stroke-width="1.11"/><text x="95.50" y="763.70" font-size="13.89" text-anchor="end" textLength="79.24" lengthAdjust="spacingAndGlyphs">not Kalman</text><line x1="100.64" y1="791.5" x2="105.5" y2="791.5" stroke="#000" stroke-width="1.11"/><text x="95.50" y="796.70" font-size="13.89" text-anchor="end" textLength="62.51" lengthAdjust="spacingAndGlyphs">not track</text><line x1="100.64" y1="823.5" x2="105.5" y2="823.5" stroke="#000" stroke-width="1.11"/><text x="95.50" y="828.70" font-size="13.89" text-anchor="end" textLength="68.89" lengthAdjust="spacingAndGlyphs">Sat. pixel.</text><line x1="100.64" y1="856.5" x2="105.5" y2="856.5" stroke="#000" stroke-width="1.11"/><text x="95.50" y="861.70" font-size="13.89" text-anchor="end" textLength="57.68" lengthAdjust="spacingAndGlyphs">Ion. rad.</text><line x1="100.64" y1="889.5" x2="105.5" y2="889.5" stroke="#000" stroke-width="1.11"/><text x="95.50" y="894.70" font-size="13.89" text-anchor="end" textLength="43.83" lengthAdjust="spacingAndGlyphs">dr &gt; 5</text><line x1="100.64" y1="921.5" x2="105.5" y2="921.5" stroke="#000" stroke-width="1.11"/><text x="95.50" y="926.70" font-size="13.89" text-anchor="end" textLength="80.65" lengthAdjust="spacingAndGlyphs">OBS not OK</text><line x1="100.64" y1="1009.4" x2="105.5" y2="1009.4" stroke="#000" stroke-width="1.11"/><text x="95.50" y="1014.60" font-size="13.89" text-anchor="end" textLength="8.84" lengthAdjust="spacingAndGlyphs">0</text><line x1="100.64" y1="983.3" x2="105.5" y2="983.3" stroke="#000" stroke-width="1.11"/><text x="95.50" y="988.50" font-size="13.89" text-anchor="end" textLength="8.84" lengthAdjust="spacingAndGlyphs">5</text><line x1="100.64" y1="957.2" x2="105.5" y2="957.2" stroke="#000" stroke-width="1.11"/><text x="95.50" y="962.40" font-size="13.89" text-anchor="end" textLength="17.67" lengthAdjust="spacingAndGlyphs">10</text><line x1="102.72" y1="996.4" x2="105.5" y2="996.4" stroke="#000" stroke-width="0.83"/><line x1="102.72" y1="970.2" x2="105.5" y2="970.2" stroke="#000" stroke-width="0.83"/><text transform="translate(68.5 983.5) rotate(-90)" font-size="13.89" text-anchor="middle" textLength="14.53" lengthAdjust="spacingAndGlyphs">dr</text></g></svg></body></html>
